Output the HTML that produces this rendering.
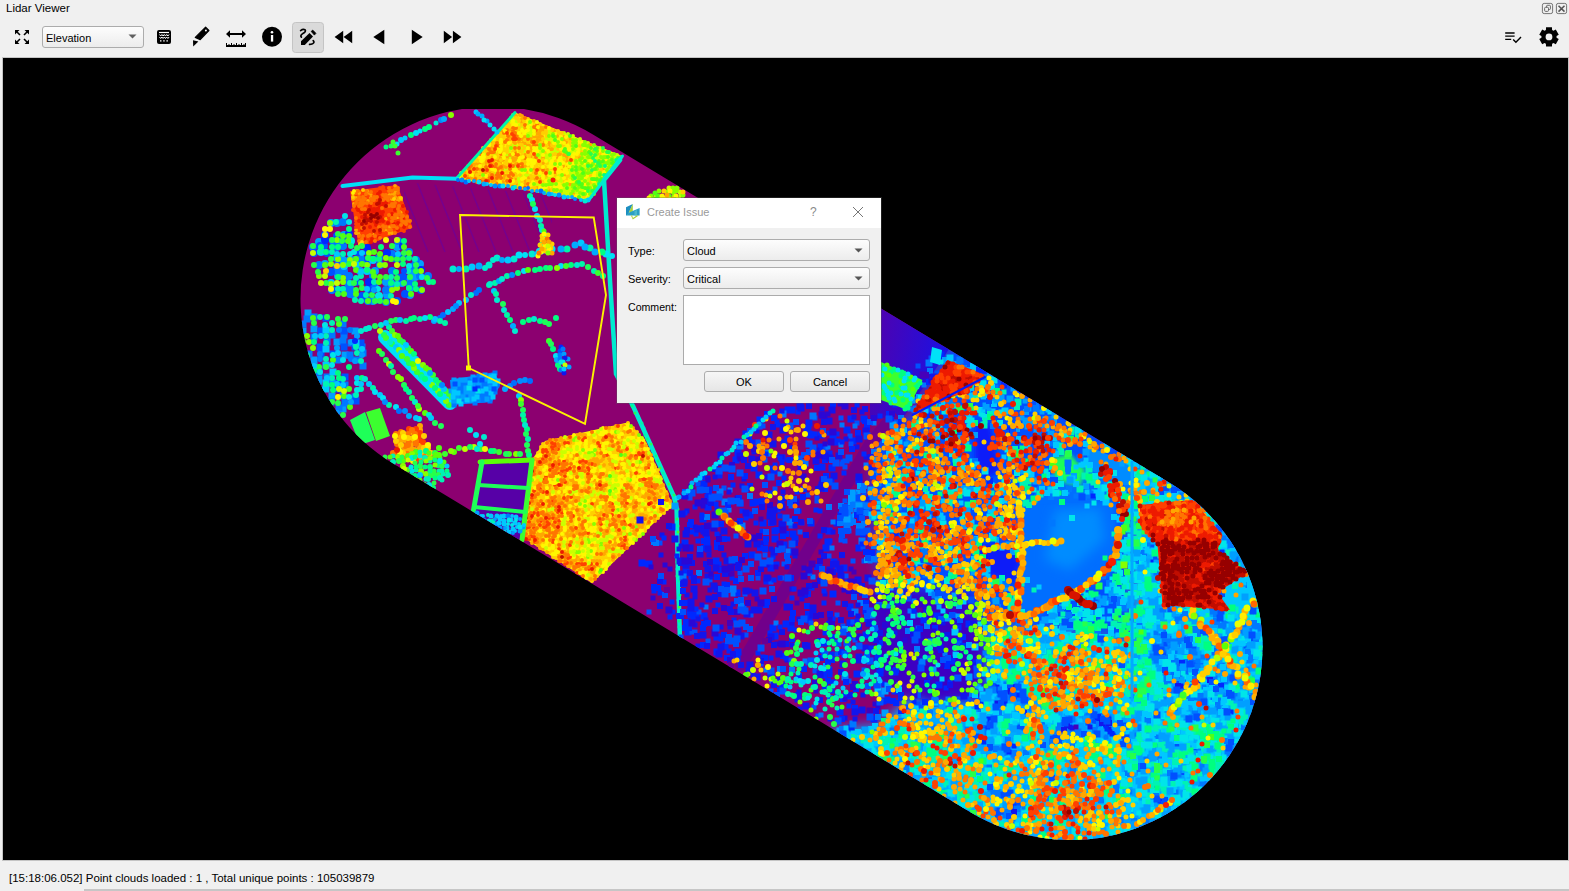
<!DOCTYPE html>
<html><head><meta charset="utf-8">
<style>
html,body{margin:0;padding:0;width:1569px;height:891px;overflow:hidden;background:#f0f0f0;font-family:"Liberation Sans",sans-serif;color:#000;}
.abs{position:absolute;}
.t{position:absolute;white-space:nowrap;line-height:1;}
#canvas{position:absolute;left:3px;top:58px;width:1565px;height:802px;background:#000;overflow:hidden;box-shadow:0 0 0 1px #c4c4c4;}
.combo{position:absolute;box-sizing:border-box;border:1px solid #acacac;border-radius:3px;background:linear-gradient(#fdfdfd,#ececec);}
.btn{position:absolute;box-sizing:border-box;border:1px solid #acacac;border-radius:3px;background:linear-gradient(#f6f6f6,#e6e6e6);}
</style></head><body>
<div class="t" style="left:6px;top:3px;font-size:11.5px;">Lidar Viewer</div>
<svg class="abs" style="left:0;top:0" width="1569" height="57">
 <!-- window buttons -->
 <rect x="1542.4" y="3.4" width="10.2" height="10.2" rx="1.8" fill="none" stroke="#666" stroke-width="0.9"/>
 <rect x="1544.6" y="7.3" width="3.9" height="4.1" rx="1" fill="none" stroke="#5a5a5a" stroke-width="0.9"/>
 <path d="M1546.6 7.2 V6.1 Q1546.6 5.3 1547.4 5.3 H1549.6 Q1550.4 5.3 1550.4 6.1 V8.8 Q1550.4 9.5 1549.6 9.5 H1548.6" fill="none" stroke="#5a5a5a" stroke-width="0.9"/>
 <rect x="1556.4" y="3.4" width="10.2" height="10.2" rx="1.8" fill="none" stroke="#666" stroke-width="0.9"/>
 <path d="M1558.5 5.8l6 5.8M1564.5 5.8l-6 5.8" stroke="#555" stroke-width="1.5"/>
 <!-- fullscreen -->
 <g stroke="#000" stroke-width="1.6" fill="none">
  <path d="M16 31l4 4M28 31l-4 4M16 43l4-4M28 43l-4-4"/>
 </g>
 <path d="M15 30h4.5l-4.5 4.5z M29 30h-4.5l4.5 4.5z M15 44h4.5l-4.5-4.5z M29 44h-4.5l4.5-4.5z" fill="#000"/>
 <!-- grid icon -->
 <rect x="157" y="30" width="14" height="14" rx="2" fill="#000"/>
 <path d="M159 32.5h10" stroke="#fff" stroke-width="1.2"/>
 <path d="M159.5 34.5l1.2 1.5 1.2-1.5 1.2 1.5 1.2-1.5 1.2 1.5 1.2-1.5 1.2 1.5 1.2-1.5" stroke="#fff" stroke-width="1" fill="none"/>
 <path d="M159.5 37l1.2 1.5 1.2-1.5 1.2 1.5 1.2-1.5 1.2 1.5 1.2-1.5 1.2 1.5 1.2-1.5" stroke="#fff" stroke-width="1" fill="none"/>
 <path d="M160 40.8h1.5M163.2 40.8h1.5M166.4 40.8h1.5" stroke="#fff" stroke-width="1.2"/>
 <!-- pencil -->
 <path d="M205.6 27.2 L208.9 30.5 L200.2 39.6 L195.3 37.4 Z" fill="#000" stroke="#000" stroke-width="1.2" stroke-linejoin="round"/>
 <circle cx="205.9" cy="30.4" r="1" fill="#fff"/>
 <path d="M193 40.2 L198.4 41.4 L193.2 46.4 Z" fill="#000"/>
 <!-- measure -->
 <path d="M229 34h14" stroke="#000" stroke-width="2"/>
 <path d="M226 34l4-3.7v7.4z M246 34l-4-3.7v7.4z" fill="#000"/>
 <rect x="226" y="45" width="20" height="2" fill="#000"/>
 <path d="M226.5 43v2M229 44v1M231.5 43v2M234 44v1M236.5 43v2M239 44v1M241.5 43v2M244 44v1M245.5 43v2" stroke="#000" stroke-width="1"/>
 <!-- info -->
 <circle cx="272" cy="36.7" r="10" fill="#000"/>
 <rect x="270.9" y="35" width="2.3" height="6.6" fill="#fff"/>
 <circle cx="272" cy="32.2" r="1.3" fill="#fff"/>
 <!-- active button -->
 <rect x="292.5" y="22.5" width="31" height="30" rx="3" fill="#dadada" stroke="#c4c4c4"/>
 <path d="M301 41.2 L309.5 33 L313 36.5 L304.8 45 L301 45 Z" fill="#000"/>
 <path d="M311.2 31.4 L312.7 30.1 L315.9 33.3 L314.4 35.1 Z" fill="#000" stroke="#000" stroke-width="0.8" stroke-linejoin="round"/>
 <path d="M300.6 30.6 Q303 28.8 305 29.8 Q306.5 31.5 302.8 33.6 Q299.8 35.5 301.4 37.2" fill="none" stroke="#000" stroke-width="1.7" stroke-linecap="round"/>
 <path d="M313.2 40.6 Q315 42.5 312.5 43.8 Q311 44.4 309.6 44.4" fill="none" stroke="#000" stroke-width="1.7" stroke-linecap="round"/>
 <!-- transport -->
 <path d="M334.6 37 L343.2 30.8 V43.2 Z M343.6 37 L352.2 30.8 V43.2 Z" fill="#000"/>
 <path d="M373.3 37 L384.3 29.8 V44.2 Z" fill="#000"/>
 <path d="M422.7 37 L411.8 29.8 V44.2 Z" fill="#000"/>
 <path d="M452.1 37 L443.8 30.8 V43.2 Z M461.4 37 L452.9 30.8 V43.2 Z" fill="#000"/>
 <!-- list check -->
 <path d="M1505.2 33h9.4M1505.2 36.2h9.4M1505.2 39.3h6" stroke="#000" stroke-width="1.3"/>
 <path d="M1513.2 39.5 L1515.9 42.2 L1521 37" fill="none" stroke="#000" stroke-width="1.4"/>
 <!-- gear -->
 <g transform="translate(1549,36.9)">
  <path id="gear" fill="#000" fill-rule="evenodd" d="M-3.10 -6.94 L-2.96 -9.55 L2.96 -9.55 L3.10 -6.94 L4.46 -6.15 L6.80 -7.34 L9.75 -2.22 L7.56 -0.79 L7.56 0.79 L9.75 2.22 L6.80 7.34 L4.46 6.15 L3.10 6.94 L2.96 9.55 L-2.96 9.55 L-3.10 6.94 L-4.46 6.15 L-6.80 7.34 L-9.75 2.22 L-7.56 0.79 L-7.56 -0.79 L-9.75 -2.22 L-6.80 -7.34 L-4.46 -6.15 Z M3.4 0 A3.4 3.4 0 1 0 -3.4 0 A3.4 3.4 0 1 0 3.4 0 Z"/>
 </g>
</svg>
<div class="combo" style="left:42px;top:26px;width:102px;height:22px;"></div>
<div class="t" style="left:46px;top:33px;font-size:11px;">Elevation</div>
<svg class="abs" style="left:128px;top:34px" width="9" height="5"><path d="M0.5 0.5h8l-4 4z" fill="#606060"/></svg>
<div id="canvas"><svg id="lidar" width="1565" height="802" viewBox="3 58 1565 802" style="display:block"><defs><clipPath id="cap"><path d="M592.5 134.2 L1169.5 482.7 A192.5 192.5 0 0 1 970.5 812.3 L393.5 463.8 A192.5 192.5 0 0 1 592.5 134.2 Z"/></clipPath><filter id="b2" x="-20%" y="-20%" width="140%" height="140%"><feGaussianBlur stdDeviation="2"/></filter><filter id="b6" x="-30%" y="-30%" width="160%" height="160%"><feGaussianBlur stdDeviation="6"/></filter><filter id="b15" x="-50%" y="-50%" width="200%" height="200%"><feGaussianBlur stdDeviation="15"/></filter></defs><clipPath id="tp"><rect x="0" y="109" width="2000" height="2000"/></clipPath><g clip-path="url(#tp)"><g clip-path="url(#cap)"><rect x="290" y="100" width="980" height="750" fill="#8c0070"/><clipPath id="stc"><polygon points="404,182 560,196 540,262 430,262 404,230"/></clipPath><path d="M400 182 L428 252 M417 182 L445 252 M434 182 L462 252 M451 182 L479 252 M468 182 L496 252 M485 182 L513 252 M502 182 L530 252 M519 182 L547 252 M536 182 L564 252 M553 182 L581 252" stroke="#5000c0" stroke-width="1.5" opacity="0.38" clip-path="url(#stc)"/><polygon points="515.0,112.5 622.5,156.0 588.8,200.0 456.0,179.0" fill="#ffed00"/><path d="M513 115h0M511 118h0M513 118h0M509 121h0M516 122h0M520 125h0M529 125h0M521 127h0M531 128h0M531 131h0M550 131h0M528 133h0M531 134h0M549 133h0M564 133h0M568 134h0M531 136h0M573 136h0M546 139h0M549 139h0M553 139h0M580 139h0M552 143h0M588 143h0M513 146h0M516 146h0M525 146h0M521 149h0M544 149h0M555 148h0M577 149h0M582 149h0M587 148h0M600 148h0M509 151h0M524 151h0M541 152h0M552 152h0M555 151h0M558 152h0M570 152h0M572 152h0M576 152h0M486 155h0M495 154h0M507 155h0M541 155h0M546 155h0M609 154h0M617 155h0M510 157h0M540 157h0M546 158h0M548 157h0M552 158h0M564 157h0M586 158h0M597 158h0M615 157h0M549 161h0M588 160h0M597 160h0M549 163h0M579 163h0M592 164h0M516 167h0M558 166h0M582 166h0M585 166h0M594 167h0M466 170h0M503 169h0M506 169h0M548 170h0M570 170h0M495 173h0M571 173h0M573 173h0M580 173h0M598 173h0M606 172h0M462 176h0M521 176h0M526 175h0M529 176h0M540 175h0M559 176h0M571 175h0M576 176h0M597 176h0M518 179h0M549 178h0M552 178h0M556 179h0M561 179h0M571 178h0M589 178h0M519 182h0M552 182h0M558 182h0M561 181h0M582 181h0M588 181h0M519 185h0M537 185h0M541 184h0M560 185h0M591 185h0M596 185h0M553 188h0M565 187h0M570 187h0M543 191h0M564 190h0M567 190h0M570 191h0M579 190h0M582 191h0M558 194h0M564 193h0M567 194h0M576 193h0M582 197h0M589 197h0M591 196h0" stroke="#caff00" stroke-width="4" stroke-linecap="round"/><path d="M516 116h0M520 115h0M522 116h0M522 119h0M522 122h0M534 121h0M508 124h0M525 128h0M540 127h0M543 128h0M501 131h0M510 130h0M540 130h0M543 131h0M554 131h0M537 133h0M540 133h0M510 137h0M519 136h0M525 137h0M534 136h0M537 137h0M540 136h0M542 137h0M557 136h0M564 137h0M509 140h0M522 139h0M531 139h0M537 140h0M540 140h0M564 140h0M570 139h0M493 142h0M514 142h0M515 143h0M519 142h0M523 143h0M525 143h0M537 142h0M544 143h0M549 143h0M566 142h0M528 145h0M530 146h0M550 145h0M590 145h0M486 148h0M492 148h0M531 148h0M549 149h0M552 149h0M489 151h0M515 152h0M531 151h0M510 155h0M525 155h0M558 155h0M560 154h0M564 155h0M492 158h0M500 158h0M507 158h0M513 158h0M516 158h0M531 157h0M543 158h0M558 158h0M567 157h0M579 157h0M487 161h0M494 160h0M498 160h0M503 160h0M513 161h0M515 160h0M537 160h0M567 161h0M472 163h0M474 164h0M477 164h0M480 163h0M486 163h0M492 163h0M500 163h0M516 164h0M543 163h0M475 167h0M498 166h0M503 166h0M506 167h0M525 166h0M563 166h0M568 167h0M471 170h0M480 169h0M502 169h0M519 169h0M534 170h0M539 169h0M547 170h0M603 170h0M465 173h0M476 173h0M483 172h0M486 172h0M490 172h0M503 173h0M516 172h0M467 176h0M475 175h0M479 175h0M489 176h0M495 176h0M505 176h0M507 176h0M546 176h0M564 175h0M462 179h0M471 178h0M477 178h0M483 179h0M486 178h0M495 179h0M504 178h0M515 179h0M529 178h0M534 179h0M541 179h0M492 181h0M495 182h0M503 182h0M525 181h0M503 184h0M507 185h0M516 184h0M525 184h0M570 184h0M515 187h0M519 188h0M522 187h0M529 187h0M537 188h0M534 190h0M538 191h0M549 190h0M549 193h0M573 194h0" stroke="#ffa700" stroke-width="4" stroke-linecap="round"/><path d="M516 118h0M518 119h0M528 119h0M519 121h0M524 121h0M509 125h0M522 125h0M533 124h0M540 124h0M505 128h0M506 127h0M509 127h0M519 128h0M516 131h0M519 130h0M546 131h0M552 130h0M558 131h0M498 134h0M501 134h0M511 133h0M523 134h0M543 133h0M546 133h0M559 133h0M562 133h0M495 137h0M498 137h0M501 136h0M504 137h0M547 136h0M491 140h0M498 140h0M504 139h0M525 140h0M534 140h0M543 139h0M567 139h0M494 142h0M507 142h0M528 142h0M541 143h0M570 142h0M493 145h0M503 145h0M508 146h0M510 145h0M520 145h0M522 145h0M546 146h0M552 145h0M554 146h0M563 145h0M570 146h0M580 146h0M483 148h0M504 149h0M507 149h0M513 148h0M524 148h0M558 149h0M482 152h0M486 151h0M499 152h0M504 152h0M507 152h0M513 152h0M520 151h0M522 151h0M545 152h0M561 151h0M582 152h0M492 154h0M497 155h0M522 155h0M528 154h0M530 154h0M552 155h0M555 154h0M578 155h0M600 154h0M476 158h0M486 157h0M489 158h0M497 158h0M529 157h0M534 157h0M570 158h0M576 157h0M474 161h0M478 161h0M501 160h0M507 160h0M522 160h0M525 160h0M543 160h0M555 161h0M564 160h0M573 160h0M483 163h0M499 164h0M505 163h0M507 164h0M512 164h0M525 163h0M537 164h0M540 163h0M547 163h0M477 167h0M482 167h0M529 167h0M534 166h0M537 167h0M541 166h0M545 167h0M490 170h0M552 169h0M561 170h0M601 170h0M461 173h0M468 173h0M473 173h0M480 173h0M493 173h0M507 172h0M514 173h0M528 172h0M533 172h0M543 172h0M477 175h0M516 176h0M520 175h0M531 176h0M535 176h0M536 176h0M555 175h0M568 176h0M590 175h0M465 178h0M479 178h0M507 178h0M513 179h0M532 179h0M545 178h0M566 179h0M499 181h0M516 182h0M522 181h0M528 181h0M530 181h0M537 181h0M544 181h0M556 181h0M565 181h0M591 182h0M495 184h0M501 184h0M510 185h0M514 185h0M532 187h0M535 188h0M548 188h0M539 191h0M552 190h0M555 193h0M561 193h0M573 196h0M584 196h0" stroke="#ffcf00" stroke-width="4" stroke-linecap="round"/><path d="M525 118h0M525 125h0M537 125h0M513 128h0M516 128h0M534 127h0M546 127h0M507 130h0M513 131h0M536 130h0M504 133h0M515 133h0M508 136h0M516 136h0M507 140h0M519 139h0M528 139h0M497 143h0M505 142h0M532 142h0M499 146h0M534 145h0M537 146h0M543 145h0M489 149h0M515 148h0M519 148h0M491 152h0M494 152h0M528 152h0M480 154h0M488 154h0M501 154h0M515 154h0M518 155h0M525 158h0M536 157h0M490 163h0M496 164h0M510 164h0M519 163h0M522 164h0M471 166h0M486 167h0M495 167h0M501 167h0M513 166h0M522 167h0M469 169h0M477 169h0M498 169h0M510 169h0M543 170h0M498 173h0M511 173h0M536 173h0M555 172h0M492 175h0M497 175h0M500 176h0M509 176h0M513 175h0M468 179h0M475 179h0M490 178h0M497 178h0M501 178h0M511 179h0M537 178h0M477 182h0M483 182h0M507 181h0M497 184h0M528 184h0" stroke="#ff7500" stroke-width="4" stroke-linecap="round"/><path d="M513 121h0M528 121h0M537 122h0M514 124h0M516 125h0M531 124h0M528 127h0M538 127h0M549 128h0M505 131h0M522 130h0M526 131h0M528 130h0M534 131h0M519 133h0M524 133h0M534 134h0M555 134h0M521 136h0M561 137h0M566 137h0M494 139h0M501 140h0M558 140h0M489 143h0M501 142h0M509 143h0M546 142h0M554 143h0M560 142h0M564 143h0M578 142h0M582 143h0M489 145h0M501 146h0M568 146h0M497 149h0M501 149h0M528 148h0M534 148h0M537 148h0M545 149h0M561 149h0M568 149h0M570 149h0M578 149h0M584 149h0M500 152h0M534 151h0M537 151h0M548 151h0M578 152h0M599 151h0M483 155h0M504 154h0M513 154h0M543 155h0M574 154h0M577 154h0M603 155h0M606 154h0M481 158h0M484 157h0M495 157h0M504 158h0M520 158h0M523 157h0M554 158h0M560 158h0M573 157h0M481 161h0M482 161h0M510 161h0M519 161h0M528 160h0M531 160h0M535 161h0M546 161h0M552 161h0M559 160h0M561 161h0M582 161h0M590 161h0M607 160h0M528 164h0M532 163h0M534 163h0M551 163h0M558 164h0M563 163h0M568 164h0M573 164h0M584 163h0M480 166h0M532 166h0M543 167h0M550 166h0M551 167h0M555 167h0M561 167h0M569 166h0M492 169h0M495 170h0M514 170h0M516 170h0M528 169h0M559 170h0M565 170h0M566 169h0M609 169h0M518 172h0M522 172h0M524 172h0M530 172h0M540 173h0M552 172h0M558 172h0M561 172h0M563 173h0M567 173h0M594 173h0M604 172h0M472 175h0M486 176h0M543 176h0M549 175h0M552 175h0M587 176h0M594 176h0M459 178h0M522 179h0M524 178h0M543 178h0M558 178h0M564 178h0M585 178h0M468 181h0M500 182h0M513 181h0M533 182h0M546 181h0M566 182h0M570 181h0M572 181h0M593 181h0M522 185h0M531 185h0M559 184h0M585 185h0M540 188h0M543 188h0M546 187h0M555 187h0M558 187h0M561 187h0M586 191h0M552 194h0M588 194h0M570 197h0M576 196h0" stroke="#fff700" stroke-width="4" stroke-linecap="round"/><path d="M530 122h0M553 134h0M528 136h0M549 136h0M555 137h0M562 139h0M573 140h0M576 140h0M558 142h0M573 143h0M576 143h0M585 142h0M540 145h0M558 146h0M560 146h0M573 146h0M583 145h0M585 145h0M588 146h0M594 145h0M511 148h0M540 148h0M573 149h0M543 151h0M585 151h0M590 152h0M594 151h0M603 151h0M538 155h0M550 155h0M582 154h0M585 154h0M588 154h0M597 154h0M612 155h0M614 154h0M582 158h0M588 157h0M591 157h0M601 157h0M604 157h0M606 157h0M612 158h0M576 161h0M580 160h0M609 161h0M555 164h0M560 164h0M570 163h0M576 163h0M582 163h0M588 164h0M593 164h0M604 164h0M606 163h0M609 164h0M573 167h0M580 167h0M602 166h0M609 167h0M613 166h0M522 170h0M525 170h0M531 170h0M579 169h0M584 170h0M588 169h0M597 169h0M607 170h0M550 173h0M577 173h0M585 173h0M588 173h0M591 172h0M600 173h0M608 173h0M483 175h0M562 175h0M578 176h0M581 175h0M584 175h0M573 179h0M579 179h0M582 178h0M603 179h0M549 181h0M585 181h0M598 181h0M534 184h0M543 185h0M546 185h0M549 184h0M552 184h0M556 184h0M564 185h0M567 184h0M573 185h0M576 184h0M588 184h0M594 185h0M573 187h0M579 187h0M590 188h0M597 187h0M546 191h0M554 190h0M557 190h0M561 191h0M573 191h0M577 190h0M545 193h0M571 194h0M580 193h0M585 194h0M590 194h0M594 194h0" stroke="#87ff00" stroke-width="4" stroke-linecap="round"/><path d="M507 133h0M512 134h0M514 136h0M513 139h0M516 139h0M534 142h0M496 146h0M495 149h0M534 154h0M539 161h0M571 160h0M468 166h0M492 166h0M518 166h0M474 169h0M487 170h0M537 170h0M555 169h0M546 173h0M465 176h0M474 181h0M480 181h0M488 181h0M540 182h0M513 187h0M525 188h0" stroke="#ff4000" stroke-width="4" stroke-linecap="round"/><path d="M553 136h0M570 136h0M555 140h0M576 146h0M565 149h0M591 148h0M597 148h0M564 151h0M566 152h0M589 152h0M597 151h0M568 154h0M608 157h0M621 157h0M585 161h0M599 161h0M603 161h0M612 160h0M600 163h0M612 163h0M614 163h0M576 167h0M591 166h0M597 166h0M572 170h0M576 170h0M582 169h0M595 169h0M583 173h0M573 176h0M600 175h0M606 175h0M592 179h0M594 179h0M597 179h0M601 179h0M577 182h0M579 184h0M582 184h0M567 188h0M575 188h0M582 187h0M585 188h0M588 188h0M595 187h0M594 190h0M583 194h0M579 197h0" stroke="#50ff15" stroke-width="4" stroke-linecap="round"/><path d="M595 149h0M603 148h0M607 152h0M609 152h0M569 154h0M591 154h0M595 155h0M593 158h0M618 158h0M617 161h0M598 163h0M588 166h0M600 166h0M592 170h0M575 178h0M579 182h0M600 181h0M588 191h0M592 191h0" stroke="#27ff4a" stroke-width="4" stroke-linecap="round"/><path d="M480 152h0M489 161h0M492 160h0M490 166h0M510 166h0M470 172h0M502 173h0M492 178h0M486 181h0M510 181h0" stroke="#ed1a00" stroke-width="4" stroke-linecap="round"/><path d="M595 161h0M616 160h0M605 166h0M604 175h0M599 184h0" stroke="#00ff80" stroke-width="4" stroke-linecap="round"/><path d="M483 170h0" stroke="#c10d00" stroke-width="4" stroke-linecap="round"/><circle cx="553" cy="180" r="2.5" fill="#f81e00"/><polyline points="456.0,179.0 515.0,112.5" fill="none" stroke="#00f5a7" stroke-width="3" stroke-linejoin="round" stroke-linecap="round"/><polyline points="622.5,156.0 588.8,200.0" fill="none" stroke="#00ebcf" stroke-width="3" stroke-linejoin="round" stroke-linecap="round"/><polygon points="350.0,191.0 397.5,185.0 412.5,227.5 358.8,247.5" fill="#ff4000"/><path d="M395 186h0M357 191h0M367 191h0M396 191h0M359 193h0M367 194h0M371 194h0M389 195h0M392 195h0M395 193h0M356 198h0M371 198h0M395 197h0M399 198h0M353 199h0M368 201h0M392 199h0M398 200h0M401 200h0M354 204h0M401 212h0M386 219h0M397 218h0M390 227h0M356 230h0M386 231h0M356 233h0M359 234h0M373 233h0M389 233h0M392 233h0" stroke="#ffa700" stroke-width="4" stroke-linecap="round"/><path d="M380 188h0M383 187h0M392 188h0M373 191h0M377 191h0M384 191h0M387 192h0M363 193h0M374 193h0M380 194h0M365 197h0M367 196h0M377 200h0M386 200h0M374 204h0M390 203h0M397 203h0M401 203h0M356 207h0M365 206h0M369 207h0M374 206h0M378 205h0M401 207h0M353 210h0M387 209h0M390 210h0M393 210h0M402 209h0M404 209h0M356 212h0M359 211h0M386 213h0M388 212h0M391 212h0M396 212h0M404 211h0M357 215h0M360 215h0M362 215h0M368 215h0M386 215h0M407 216h0M360 218h0M389 218h0M356 221h0M362 221h0M385 222h0M389 221h0M395 221h0M398 221h0M356 224h0M358 224h0M369 224h0M372 223h0M374 224h0M380 224h0M383 223h0M386 224h0M391 224h0M403 224h0M409 224h0M356 227h0M359 227h0M368 228h0M374 227h0M378 227h0M401 228h0M406 227h0M360 229h0M364 230h0M368 230h0M371 230h0M378 230h0M395 230h0M402 230h0M404 231h0M362 233h0M365 233h0M368 232h0M371 233h0M376 234h0M382 233h0M386 233h0M365 236h0M377 237h0M383 235h0M385 236h0M360 239h0M368 239h0M374 240h0M378 239h0M368 242h0M365 244h0" stroke="#ff4000" stroke-width="4" stroke-linecap="round"/><path d="M387 188h0M380 192h0M378 194h0M379 197h0M383 203h0M386 203h0M370 206h0M380 206h0M383 206h0M403 206h0M357 208h0M358 210h0M371 209h0M374 209h0M377 209h0M379 208h0M395 210h0M361 212h0M365 213h0M372 212h0M375 212h0M377 212h0M380 212h0M383 212h0M407 212h0M380 215h0M382 215h0M392 214h0M362 217h0M367 218h0M382 219h0M403 218h0M359 221h0M375 222h0M380 221h0M383 221h0M376 225h0M388 223h0M394 224h0M398 223h0M370 227h0M404 227h0M362 230h0M398 230h0M380 232h0M379 237h0M364 239h0M372 239h0M371 242h0" stroke="#ed1a00" stroke-width="4" stroke-linecap="round"/><path d="M389 188h0M395 189h0M398 188h0M358 191h0M366 191h0M371 192h0M389 191h0M392 191h0M398 190h0M356 193h0M366 194h0M383 195h0M386 195h0M398 193h0M359 197h0M363 197h0M374 197h0M377 197h0M384 196h0M386 198h0M389 197h0M392 197h0M357 200h0M360 200h0M363 199h0M365 199h0M371 199h0M374 200h0M383 200h0M388 200h0M356 203h0M360 203h0M362 202h0M364 203h0M367 203h0M371 203h0M392 204h0M395 203h0M354 206h0M359 206h0M362 205h0M389 206h0M392 206h0M394 206h0M399 206h0M362 209h0M365 209h0M382 208h0M398 209h0M399 212h0M389 215h0M395 215h0M397 215h0M401 215h0M403 216h0M356 218h0M392 218h0M395 218h0M401 218h0M407 217h0M392 221h0M402 221h0M404 222h0M407 221h0M410 221h0M401 225h0M406 224h0M362 228h0M379 227h0M383 226h0M386 227h0M392 226h0M394 226h0M397 228h0M410 227h0M383 230h0M389 230h0M391 230h0M395 233h0M359 236h0M363 236h0M368 236h0M370 235h0M375 236h0M362 239h0M380 238h0M359 241h0M366 242h0M375 241h0" stroke="#ff7500" stroke-width="4" stroke-linecap="round"/><path d="M354 191h0M353 193h0" stroke="#fff700" stroke-width="4" stroke-linecap="round"/><path d="M363 190h0M353 197h0M401 198h0M394 199h0M362 242h0M360 244h0M362 244h0" stroke="#ffcf00" stroke-width="4" stroke-linecap="round"/><path d="M380 200h0M377 204h0M379 203h0M386 206h0M369 210h0M368 212h0M365 215h0M365 218h0M375 217h0M380 217h0M368 220h0M371 221h0M377 222h0M362 224h0M366 223h0M364 228h0M374 231h0M380 230h0" stroke="#c10d00" stroke-width="4" stroke-linecap="round"/><path d="M371 215h0M374 216h0M377 214h0M371 218h0M378 218h0M364 221h0" stroke="#960000" stroke-width="4" stroke-linecap="round"/><polyline points="342.5,186.0 412.5,177.5 457.5,178.8" fill="none" stroke="#00e1f7" stroke-width="4" stroke-linejoin="round" stroke-linecap="round"/><path d="M458 180h0M520 188h0M528 188h0" stroke="#006eff" stroke-width="4" stroke-linecap="round"/><path d="M462 180h0M495 186h0M500 186h0M559 195h0" stroke="#008cff" stroke-width="5" stroke-linecap="round"/><path d="M466 182h0M541 191h0" stroke="#006eff" stroke-width="5" stroke-linecap="round"/><path d="M469 181h0M487 184h0M491 185h0M552 194h0M568 197h0M581 200h0" stroke="#00c8ff" stroke-width="4" stroke-linecap="round"/><path d="M474 181h0M508 186h0M525 189h0M532 191h0M537 191h0M544 193h0M572 197h0" stroke="#00aaff" stroke-width="4" stroke-linecap="round"/><path d="M479 182h0M503 186h0" stroke="#00e1f7" stroke-width="5" stroke-linecap="round"/><path d="M484 184h0M549 194h0" stroke="#00aaff" stroke-width="5" stroke-linecap="round"/><path d="M513 188h0M564 197h0M588 200h0" stroke="#00c8ff" stroke-width="5" stroke-linecap="round"/><path d="M515 187h0" stroke="#00ebcf" stroke-width="4" stroke-linecap="round"/><path d="M555 195h0" stroke="#00e1f7" stroke-width="4" stroke-linecap="round"/><path d="M575 199h0" stroke="#008cff" stroke-width="4" stroke-linecap="round"/><path d="M585 201h0" stroke="#00ebcf" stroke-width="5" stroke-linecap="round"/><polyline points="620.0,160.0 604.0,180.0 610.0,281.0 616.0,374.0 633.0,406.0 673.7,496.0 676.6,508.0 678.0,575.0 679.6,627.0 680.0,640.0" fill="none" stroke="#00ebcf" stroke-width="4.5" stroke-linejoin="round" stroke-linecap="round"/><path d="M632 406h0M647 439h0M656 456h0M658 461h0M678 509h0M678 546h0M678 550h0M676 557h0M677 562h0M680 595h0M679 621h0" stroke="#00ff80" stroke-width="3" stroke-linecap="round"/><path d="M635 413h0M651 444h0M669 484h0M674 495h0M677 519h0M678 615h0" stroke="#1eff58" stroke-width="3" stroke-linecap="round"/><path d="M638 416h0M644 428h0M654 452h0M666 479h0M677 514h0M677 538h0M677 569h0M679 588h0M678 600h0" stroke="#00ebcf" stroke-width="3" stroke-linecap="round"/><path d="M642 423h0M645 435h0M663 473h0M671 490h0M678 526h0M677 576h0M679 581h0M679 627h0" stroke="#00f5a7" stroke-width="3" stroke-linecap="round"/><path d="M660 468h0M676 503h0M678 532h0M679 607h0" stroke="#3cff2f" stroke-width="3" stroke-linecap="round"/><path d="M476 112h0M497 132h0" stroke="#00c8ff" stroke-width="5" stroke-linecap="round"/><path d="M478 114h0M482 116h0M487 121h0" stroke="#00aaff" stroke-width="5" stroke-linecap="round"/><path d="M484 120h0M490 125h0M494 129h0" stroke="#00e1f7" stroke-width="5" stroke-linecap="round"/><path d="M331 223h0M344 235h0M319 242h0M338 241h0M397 247h0M337 258h0M343 260h0M350 260h0M355 260h0M325 264h0M367 264h0M420 264h0M360 271h0M375 271h0M410 271h0M415 270h0M338 276h0M410 278h0M415 277h0M386 282h0M391 283h0M402 283h0M375 288h0M392 288h0M410 288h0M387 295h0M410 295h0M373 301h0" stroke="#009fff" stroke-width="8" stroke-linecap="round"/><path d="M337 223h0M343 222h0M333 241h0M398 241h0M313 247h0M337 247h0M343 246h0M392 254h0M409 252h0M361 259h0M379 258h0M392 258h0M416 260h0M319 265h0M337 266h0M380 265h0M414 266h0M337 271h0M344 271h0M392 271h0M349 276h0M373 276h0M420 276h0M428 276h0M348 283h0M374 284h0M410 284h0M332 290h0M344 290h0M350 288h0M386 290h0M350 294h0M354 295h0M368 301h0M386 302h0" stroke="#0078ff" stroke-width="8" stroke-linecap="round"/><path d="M325 235h0M337 236h0M344 240h0M320 246h0M324 246h0M314 253h0M327 253h0M357 252h0M368 252h0M368 259h0M397 259h0M403 258h0M331 272h0M398 278h0M403 277h0M356 282h0M338 290h0M368 289h0M421 290h0M362 296h0M405 294h0M397 301h0" stroke="#0050ff" stroke-width="8" stroke-linecap="round"/><path d="M349 234h0M325 240h0M367 248h0M403 246h0M387 253h0M421 270h0M369 282h0M379 300h0" stroke="#0028ff" stroke-width="8" stroke-linecap="round"/><path d="M351 241h0M379 296h0" stroke="#00e5e9" stroke-width="8" stroke-linecap="round"/><path d="M321 252h0M373 260h0M344 266h0M356 265h0M367 271h0M331 283h0" stroke="#00c8ff" stroke-width="8" stroke-linecap="round"/><path d="M345 216h0M349 222h0M350 254h0M354 252h0M409 266h0M422 277h0M378 289h0" stroke="#00e5e9" stroke-width="6" stroke-linecap="round"/><path d="M330 223h0M337 240h0M369 253h0M338 259h0M350 260h0M386 258h0M331 264h0M343 265h0M367 265h0M380 265h0M385 265h0M421 271h0M319 276h0M343 278h0M331 284h0M343 282h0M392 290h0M397 288h0M422 290h0" stroke="#87ff00" stroke-width="6" stroke-linecap="round"/><path d="M336 222h0M320 252h0M332 252h0M343 254h0M415 259h0M408 271h0M356 278h0M361 276h0M391 277h0M350 283h0M374 282h0M397 284h0M429 282h0M338 289h0M343 289h0M366 295h0M391 296h0M355 300h0M361 301h0" stroke="#00f2b4" stroke-width="6" stroke-linecap="round"/><path d="M325 229h0M330 229h0M325 235h0M386 240h0M331 289h0M393 301h0M396 302h0" stroke="#fff700" stroke-width="6" stroke-linecap="round"/><path d="M349 229h0M404 241h0M321 247h0M332 247h0M338 247h0M351 246h0M381 247h0M326 252h0M373 259h0M379 259h0M409 258h0M403 264h0M367 270h0M396 272h0M338 277h0M361 283h0M391 283h0M415 284h0M433 282h0M409 288h0M416 289h0" stroke="#00ff80" stroke-width="6" stroke-linecap="round"/><path d="M338 234h0M332 240h0M342 241h0M313 246h0M357 248h0M362 246h0M392 246h0M404 253h0M331 259h0M368 258h0M397 259h0M403 259h0M314 265h0M349 264h0M416 265h0M318 272h0M416 271h0M386 277h0M397 278h0M410 277h0M427 278h0M326 283h0M354 283h0M404 283h0M356 290h0M362 288h0M338 294h0M372 295h0M375 301h0M380 301h0" stroke="#27ff4a" stroke-width="6" stroke-linecap="round"/><path d="M343 236h0M349 236h0M348 241h0M404 247h0M374 252h0M380 254h0M409 253h0M356 259h0M391 259h0M325 265h0M362 264h0M356 270h0M373 272h0M374 276h0M380 277h0M379 282h0M344 294h0M356 294h0M411 294h0M368 301h0M386 302h0" stroke="#50ff15" stroke-width="6" stroke-linecap="round"/><path d="M397 240h0M313 253h0M354 264h0M397 265h0M325 276h0M321 283h0M337 283h0" stroke="#caff00" stroke-width="6" stroke-linecap="round"/><path d="M337 254h0M362 253h0M398 254h0M361 272h0M367 289h0" stroke="#00c8ff" stroke-width="6" stroke-linecap="round"/><path d="M337 266h0M326 271h0" stroke="#ffcf00" stroke-width="6" stroke-linecap="round"/><path d="M404 271h0" stroke="#0050ff" stroke-width="6" stroke-linecap="round"/><path d="M374 290h0" stroke="#009fff" stroke-width="6" stroke-linecap="round"/><path d="M386 147h0" stroke="#00ff80" stroke-width="5" stroke-linecap="round"/><path d="M391 146h0" stroke="#1eff58" stroke-width="5" stroke-linecap="round"/><path d="M397 144h0M420 131h0" stroke="#00e1f7" stroke-width="5" stroke-linecap="round"/><path d="M401 140h0" stroke="#00c8ff" stroke-width="6" stroke-linecap="round"/><path d="M405 138h0" stroke="#00c8ff" stroke-width="5" stroke-linecap="round"/><path d="M411 135h0M425 129h0M429 127h0" stroke="#00ff80" stroke-width="6" stroke-linecap="round"/><path d="M416 133h0" stroke="#00e1f7" stroke-width="6" stroke-linecap="round"/><path d="M436 123h0" stroke="#00ebcf" stroke-width="5" stroke-linecap="round"/><path d="M441 120h0" stroke="#008cff" stroke-width="6" stroke-linecap="round"/><path d="M444 119h0" stroke="#00aaff" stroke-width="6" stroke-linecap="round"/><path d="M451 115h0" stroke="#87ff00" stroke-width="6" stroke-linecap="round"/><path d="M393 142h0M395 146h0M398 153h0" stroke="#3cff2f" stroke-width="5" stroke-linecap="round"/><path d="M453 269h0M489 265h0M497 258h0M514 259h0M532 254h0" stroke="#00ebcf" stroke-width="7" stroke-linecap="round"/><path d="M459 269h0M502 260h0" stroke="#00aaff" stroke-width="6" stroke-linecap="round"/><path d="M466 269h0M567 249h0M590 248h0" stroke="#00f5a7" stroke-width="7" stroke-linecap="round"/><path d="M472 267h0M508 260h0M581 243h0" stroke="#00c8ff" stroke-width="7" stroke-linecap="round"/><path d="M479 266h0M561 249h0M575 245h0M585 247h0M595 252h0" stroke="#00aaff" stroke-width="7" stroke-linecap="round"/><path d="M485 268h0M493 260h0" stroke="#00ebcf" stroke-width="6" stroke-linecap="round"/><path d="M519 255h0M541 251h0M552 249h0M606 254h0" stroke="#00e1f7" stroke-width="7" stroke-linecap="round"/><path d="M525 255h0M612 256h0" stroke="#00e1f7" stroke-width="6" stroke-linecap="round"/><path d="M537 254h0M547 251h0" stroke="#00c8ff" stroke-width="6" stroke-linecap="round"/><path d="M602 252h0" stroke="#00ff80" stroke-width="7" stroke-linecap="round"/><path d="M489 285h0M495 283h0M507 276h0M582 264h0M594 271h0" stroke="#00f5a7" stroke-width="6" stroke-linecap="round"/><path d="M499 281h0" stroke="#00aaff" stroke-width="6" stroke-linecap="round"/><path d="M502 279h0M577 265h0" stroke="#00ebcf" stroke-width="6" stroke-linecap="round"/><path d="M512 275h0" stroke="#008cff" stroke-width="6" stroke-linecap="round"/><path d="M518 273h0M535 270h0M540 269h0M546 268h0M571 265h0M603 276h0" stroke="#00ff80" stroke-width="6" stroke-linecap="round"/><path d="M524 271h0M561 266h0" stroke="#00e1f7" stroke-width="6" stroke-linecap="round"/><path d="M528 270h0" stroke="#5aff07" stroke-width="6" stroke-linecap="round"/><path d="M550 268h0M588 267h0" stroke="#1eff58" stroke-width="6" stroke-linecap="round"/><path d="M557 268h0" stroke="#87ff00" stroke-width="6" stroke-linecap="round"/><path d="M566 266h0M598 273h0" stroke="#3cff2f" stroke-width="6" stroke-linecap="round"/><path d="M490 284h0M497 300h0M504 310h0M515 331h0" stroke="#00ebcf" stroke-width="6" stroke-linecap="round"/><path d="M494 291h0" stroke="#00c8ff" stroke-width="6" stroke-linecap="round"/><path d="M496 294h0M507 315h0" stroke="#00f5a7" stroke-width="6" stroke-linecap="round"/><path d="M503 304h0" stroke="#1eff58" stroke-width="6" stroke-linecap="round"/><path d="M510 320h0" stroke="#00ff80" stroke-width="6" stroke-linecap="round"/><path d="M513 326h0" stroke="#00aaff" stroke-width="6" stroke-linecap="round"/><path d="M434 321h0M453 309h0" stroke="#00aaff" stroke-width="6" stroke-linecap="round"/><path d="M440 318h0M443 315h0M476 293h0M479 290h0" stroke="#006eff" stroke-width="6" stroke-linecap="round"/><path d="M448 312h0M459 303h0M466 300h0" stroke="#00c8ff" stroke-width="6" stroke-linecap="round"/><path d="M456 306h0" stroke="#008cff" stroke-width="6" stroke-linecap="round"/><path d="M471 295h0" stroke="#00ebcf" stroke-width="6" stroke-linecap="round"/><path d="M530 196h0M541 226h0M541 245h0" stroke="#00f5a7" stroke-width="6" stroke-linecap="round"/><path d="M532 200h0M535 209h0M537 216h0M539 251h0" stroke="#00e1f7" stroke-width="6" stroke-linecap="round"/><path d="M533 204h0" stroke="#1eff58" stroke-width="6" stroke-linecap="round"/><path d="M540 220h0M542 230h0M545 235h0" stroke="#00ebcf" stroke-width="6" stroke-linecap="round"/><path d="M543 239h0" stroke="#008cff" stroke-width="6" stroke-linecap="round"/><path d="M544 231h0" stroke="#50ff15" stroke-width="5" stroke-linecap="round"/><path d="M542 236h0M548 235h0M542 240h0M540 245h0M552 244h0M544 248h0M551 248h0M545 251h0" stroke="#ffcf00" stroke-width="5" stroke-linecap="round"/><path d="M544 234h0M546 239h0M545 245h0M549 249h0M541 252h0M538 256h0" stroke="#fff700" stroke-width="5" stroke-linecap="round"/><path d="M547 239h0M539 253h0" stroke="#ff7500" stroke-width="5" stroke-linecap="round"/><path d="M544 242h0M549 242h0M542 249h0M552 253h0" stroke="#ffa700" stroke-width="5" stroke-linecap="round"/><path d="M548 246h0" stroke="#caff00" stroke-width="5" stroke-linecap="round"/><path d="M548 253h0" stroke="#87ff00" stroke-width="5" stroke-linecap="round"/><path d="M523 322h0M529 320h0M540 321h0M556 318h0" stroke="#00ff80" stroke-width="6" stroke-linecap="round"/><path d="M534 319h0" stroke="#00ebcf" stroke-width="6" stroke-linecap="round"/><path d="M545 322h0M549 324h0" stroke="#1eff58" stroke-width="6" stroke-linecap="round"/><path d="M549 341h0" stroke="#3cff2f" stroke-width="6" stroke-linecap="round"/><path d="M551 344h0" stroke="#1eff58" stroke-width="6" stroke-linecap="round"/><path d="M553 349h0M558 365h0M560 369h0" stroke="#00ff80" stroke-width="6" stroke-linecap="round"/><path d="M556 356h0" stroke="#00e1f7" stroke-width="6" stroke-linecap="round"/><path d="M557 360h0" stroke="#00aaff" stroke-width="6" stroke-linecap="round"/><path d="M561 347h0" stroke="#0028ff" stroke-width="5" stroke-linecap="round"/><path d="M560 351h0" stroke="#0050ff" stroke-width="5" stroke-linecap="round"/><path d="M563 349h0M560 355h0M560 359h0M561 370h0" stroke="#0078ff" stroke-width="5" stroke-linecap="round"/><path d="M564 354h0M568 359h0M569 367h0" stroke="#009fff" stroke-width="5" stroke-linecap="round"/><path d="M565 358h0M564 373h0" stroke="#1215ec" stroke-width="5" stroke-linecap="round"/><path d="M561 362h0M563 362h0" stroke="#00e5e9" stroke-width="5" stroke-linecap="round"/><path d="M565 365h0" stroke="#caff00" stroke-width="5" stroke-linecap="round"/><path d="M564 369h0" stroke="#00c8ff" stroke-width="5" stroke-linecap="round"/><path d="M669 188h0M680 192h0M656 196h0M681 195h0M679 199h0M649 202h0" stroke="#caff00" stroke-width="5" stroke-linecap="round"/><path d="M673 188h0M677 188h0M659 191h0M667 192h0M673 192h0M676 191h0M651 196h0M674 196h0M683 195h0M653 199h0M683 200h0M652 202h0M654 202h0" stroke="#87ff00" stroke-width="5" stroke-linecap="round"/><path d="M655 193h0M658 196h0M669 196h0M656 199h0" stroke="#50ff15" stroke-width="5" stroke-linecap="round"/><path d="M664 191h0M683 192h0M673 199h0M659 201h0" stroke="#ffcf00" stroke-width="5" stroke-linecap="round"/><path d="M670 191h0M662 196h0M676 196h0M649 198h0M660 200h0M662 200h0M665 198h0M669 199h0" stroke="#fff700" stroke-width="5" stroke-linecap="round"/><path d="M667 195h0" stroke="#ffa700" stroke-width="5" stroke-linecap="round"/><path d="M675 200h0" stroke="#27ff4a" stroke-width="5" stroke-linecap="round"/><path d="M308 313h0M303 331h0M314 329h0M355 331h0M337 342h0M345 355h0M314 360h0M319 379h0M333 383h0M321 390h0M332 396h0M327 409h0M343 409h0M327 415h0" stroke="#009fff" stroke-width="7" stroke-linecap="square"/><path d="M307 319h0M314 317h0M303 324h0M343 324h0M314 337h0M332 335h0M344 335h0M327 342h0M343 341h0M351 343h0M362 347h0M309 354h0M350 355h0M363 353h0M338 360h0M357 360h0M308 367h0M363 366h0M319 372h0M327 377h0M345 385h0M343 396h0M355 397h0M331 402h0M345 403h0M339 408h0M337 420h0" stroke="#0078ff" stroke-width="7" stroke-linecap="square"/><path d="M326 318h0M321 331h0M344 331h0M361 343h0M320 347h0M344 347h0M355 347h0M321 354h0M333 354h0M345 377h0M339 383h0M313 390h0M338 389h0M356 401h0M333 414h0" stroke="#0050ff" stroke-width="7" stroke-linecap="square"/><path d="M326 330h0M356 343h0M326 349h0M314 367h0M326 365h0M333 372h0M326 383h0M326 389h0" stroke="#00c8ff" stroke-width="7" stroke-linecap="square"/><path d="M313 318h0M339 324h0M303 341h0M307 359h0M333 360h0M349 389h0M344 396h0M331 409h0M350 407h0" stroke="#50ff15" stroke-width="6" stroke-linecap="round"/><path d="M320 317h0M332 323h0M332 330h0M326 336h0M326 343h0M356 347h0M357 353h0M326 359h0M361 361h0M314 379h0M332 378h0M343 379h0M326 384h0M361 389h0M356 395h0M320 409h0" stroke="#00f2b4" stroke-width="6" stroke-linecap="round"/><path d="M327 317h0M338 319h0M345 319h0M314 323h0M319 367h0M326 367h0M332 402h0M338 403h0M325 407h0M343 415h0" stroke="#27ff4a" stroke-width="6" stroke-linecap="round"/><path d="M325 325h0M333 355h0M343 360h0M332 365h0M320 372h0M357 383h0M321 390h0M357 390h0M349 397h0" stroke="#00e5e9" stroke-width="6" stroke-linecap="round"/><path d="M339 330h0M350 330h0M320 354h0M320 359h0M351 359h0" stroke="#0078ff" stroke-width="6" stroke-linecap="round"/><path d="M357 331h0M357 336h0M351 342h0M337 348h0M362 355h0M314 360h0M355 361h0M319 383h0M351 402h0M337 413h0" stroke="#009fff" stroke-width="6" stroke-linecap="round"/><path d="M307 336h0M309 342h0M313 348h0" stroke="#87ff00" stroke-width="6" stroke-linecap="round"/><path d="M315 336h0M321 336h0M362 349h0M338 353h0M314 366h0M308 372h0M327 378h0M357 378h0M314 385h0M337 384h0M343 385h0M361 384h0M313 390h0" stroke="#00c8ff" stroke-width="6" stroke-linecap="round"/><path d="M314 342h0M307 355h0M349 367h0M314 371h0M338 373h0M339 378h0M362 378h0M332 385h0M333 390h0" stroke="#00ff80" stroke-width="6" stroke-linecap="round"/><path d="M355 341h0" stroke="#0028ff" stroke-width="6" stroke-linecap="round"/><path d="M339 389h0M344 391h0" stroke="#caff00" stroke-width="6" stroke-linecap="round"/><path d="M338 397h0" stroke="#fff700" stroke-width="6" stroke-linecap="round"/><polyline points="385.0,337.0 450.0,403.0" fill="none" stroke="#00e1f7" stroke-width="14" stroke-linejoin="round" stroke-linecap="round"/><path d="M380 331h0" stroke="#b9ff00" stroke-width="6" stroke-linecap="round"/><path d="M384 335h0M392 344h0M409 363h0M421 375h0" stroke="#1eff58" stroke-width="6" stroke-linecap="round"/><path d="M386 338h0M407 359h0M417 372h0M449 405h0" stroke="#3cff2f" stroke-width="6" stroke-linecap="round"/><path d="M390 342h0" stroke="#00ebcf" stroke-width="6" stroke-linecap="round"/><path d="M396 347h0" stroke="#00c8ff" stroke-width="6" stroke-linecap="round"/><path d="M399 350h0M414 368h0M432 385h0M438 391h0M446 401h0" stroke="#87ff00" stroke-width="6" stroke-linecap="round"/><path d="M401 353h0M428 382h0M444 397h0" stroke="#00e1f7" stroke-width="6" stroke-linecap="round"/><path d="M402 356h0M413 364h0" stroke="#5aff07" stroke-width="6" stroke-linecap="round"/><path d="M422 377h0" stroke="#00f5a7" stroke-width="6" stroke-linecap="round"/><path d="M425 379h0M435 388h0M440 394h0" stroke="#00ff80" stroke-width="6" stroke-linecap="round"/><path d="M389 327h0" stroke="#00f5a7" stroke-width="6" stroke-linecap="round"/><path d="M392 331h0M400 340h0M433 375h0M446 391h0M449 394h0M452 397h0" stroke="#3cff2f" stroke-width="6" stroke-linecap="round"/><path d="M395 335h0M423 365h0" stroke="#87ff00" stroke-width="6" stroke-linecap="round"/><path d="M398 336h0M411 351h0M426 368h0M429 370h0" stroke="#5aff07" stroke-width="6" stroke-linecap="round"/><path d="M403 342h0M408 348h0M439 383h0" stroke="#1eff58" stroke-width="6" stroke-linecap="round"/><path d="M406 345h0M444 389h0" stroke="#00c8ff" stroke-width="6" stroke-linecap="round"/><path d="M414 354h0M436 380h0" stroke="#00ff80" stroke-width="6" stroke-linecap="round"/><path d="M416 359h0M456 400h0" stroke="#00e1f7" stroke-width="6" stroke-linecap="round"/><path d="M418 361h0" stroke="#ebff00" stroke-width="6" stroke-linecap="round"/><path d="M430 373h0" stroke="#00aaff" stroke-width="6" stroke-linecap="round"/><path d="M442 385h0" stroke="#008cff" stroke-width="6" stroke-linecap="round"/><polygon points="450.0,380.0 495.0,372.0 500.0,385.0 492.0,402.0 452.0,405.0" fill="#008cff"/><path d="M495 373h0M479 376h0M469 381h0M479 379h0M463 385h0M466 385h0M482 385h0M485 384h0M491 385h0M497 385h0M459 389h0M462 388h0M482 388h0M462 391h0M487 393h0M495 392h0M466 395h0M482 395h0M487 396h0M490 396h0M463 401h0M477 399h0M483 400h0M490 401h0M454 405h0M475 403h0" stroke="#0078ff" stroke-width="5" stroke-linecap="square"/><path d="M473 377h0M482 377h0M485 375h0M454 380h0M457 381h0M461 380h0M465 380h0M485 379h0M495 381h0M458 384h0M473 385h0M479 385h0M455 387h0M466 388h0M491 387h0M451 391h0M466 392h0M471 391h0M474 393h0M457 396h0M463 397h0M471 396h0M475 395h0M454 401h0M471 400h0M487 399h0" stroke="#009fff" stroke-width="5" stroke-linecap="square"/><path d="M491 377h0M494 376h0M490 381h0M498 381h0M470 383h0M495 384h0M486 389h0M454 392h0M458 393h0M482 391h0M491 393h0M453 397h0M477 397h0M493 397h0M467 400h0M474 399h0M461 404h0" stroke="#00c8ff" stroke-width="5" stroke-linecap="square"/><path d="M475 380h0M482 380h0M455 384h0M478 388h0M494 389h0" stroke="#0050ff" stroke-width="5" stroke-linecap="square"/><path d="M469 388h0M478 391h0M459 401h0" stroke="#00e5e9" stroke-width="5" stroke-linecap="square"/><path d="M475 389h0" stroke="#0028ff" stroke-width="5" stroke-linecap="square"/><polygon points="350.0,420.0 365.0,412.0 375.0,440.0 360.0,445.0" fill="#1eff58"/><polygon points="366.0,412.0 380.0,408.0 390.0,436.0 376.0,441.0" fill="#3cff2f"/><path d="M361 331h0M366 329h0M369 328h0M381 325h0" stroke="#00ebcf" stroke-width="6" stroke-linecap="round"/><path d="M375 326h0M391 321h0M396 320h0" stroke="#1eff58" stroke-width="6" stroke-linecap="round"/><path d="M386 323h0M400 320h0M435 319h0" stroke="#00c8ff" stroke-width="6" stroke-linecap="round"/><path d="M406 321h0M420 319h0M440 321h0M445 323h0" stroke="#00f5a7" stroke-width="6" stroke-linecap="round"/><path d="M411 319h0M414 318h0M430 317h0" stroke="#00ff80" stroke-width="6" stroke-linecap="round"/><path d="M425 318h0" stroke="#00e1f7" stroke-width="6" stroke-linecap="round"/><path d="M379 351h0M425 413h0" stroke="#5aff07" stroke-width="6" stroke-linecap="round"/><path d="M382 354h0M386 360h0M393 372h0M404 385h0M412 398h0M435 423h0M441 426h0" stroke="#1eff58" stroke-width="6" stroke-linecap="round"/><path d="M389 364h0M419 409h0" stroke="#b9ff00" stroke-width="6" stroke-linecap="round"/><path d="M391 366h0M409 392h0" stroke="#00f5a7" stroke-width="6" stroke-linecap="round"/><path d="M398 377h0M401 379h0" stroke="#87ff00" stroke-width="6" stroke-linecap="round"/><path d="M406 389h0" stroke="#00ff80" stroke-width="6" stroke-linecap="round"/><path d="M415 402h0M429 415h0" stroke="#00ebcf" stroke-width="6" stroke-linecap="round"/><path d="M418 406h0" stroke="#3cff2f" stroke-width="6" stroke-linecap="round"/><path d="M431 418h0" stroke="#00c8ff" stroke-width="6" stroke-linecap="round"/><path d="M365 379h0M419 419h0" stroke="#00ebcf" stroke-width="6" stroke-linecap="round"/><path d="M369 384h0M380 395h0M416 418h0" stroke="#00c8ff" stroke-width="6" stroke-linecap="round"/><path d="M373 388h0M389 405h0" stroke="#00f5a7" stroke-width="6" stroke-linecap="round"/><path d="M375 392h0M383 398h0M396 407h0" stroke="#00e1f7" stroke-width="6" stroke-linecap="round"/><path d="M385 402h0M405 411h0" stroke="#008cff" stroke-width="6" stroke-linecap="round"/><path d="M399 411h0" stroke="#006eff" stroke-width="6" stroke-linecap="round"/><path d="M409 416h0" stroke="#00aaff" stroke-width="6" stroke-linecap="round"/><path d="M420 426h0M420 430h0M412 432h0M400 436h0M401 440h0M405 440h0M412 440h0M411 445h0M419 444h0M423 445h0M405 449h0M409 449h0M411 449h0M415 450h0M420 448h0M428 453h0M408 457h0M411 456h0M417 457h0M420 457h0M425 458h0" stroke="#ffa700" stroke-width="6" stroke-linecap="round"/><path d="M409 429h0M416 429h0M420 433h0M419 436h0M419 440h0M423 442h0M395 453h0M413 454h0M416 460h0" stroke="#ff4000" stroke-width="6" stroke-linecap="round"/><path d="M412 430h0M396 434h0M401 432h0M408 434h0M415 434h0M409 441h0M416 441h0M397 444h0M405 446h0M408 445h0M416 444h0M393 453h0M407 454h0M416 452h0M423 454h0M399 457h0M405 456h0" stroke="#ff7500" stroke-width="6" stroke-linecap="round"/><path d="M403 433h0M408 438h0M413 438h0M424 436h0M396 441h0M401 445h0M424 448h0M428 448h0M403 453h0M421 452h0M431 453h0" stroke="#ffcf00" stroke-width="6" stroke-linecap="round"/><path d="M395 436h0M404 437h0M415 437h0M428 445h0M399 450h0M400 452h0M413 461h0" stroke="#fff700" stroke-width="6" stroke-linecap="round"/><path d="M397 450h0" stroke="#ed1a00" stroke-width="6" stroke-linecap="round"/><path d="M439 448h0M416 452h0M408 456h0M403 461h0M407 470h0M398 480h0" stroke="#50ff15" stroke-width="6" stroke-linecap="round"/><path d="M412 454h0M398 457h0M385 462h0M403 466h0M421 471h0M426 474h0M415 479h0M412 483h0" stroke="#87ff00" stroke-width="6" stroke-linecap="round"/><path d="M420 452h0M393 456h0M430 461h0M389 470h0M416 470h0M439 471h0M442 471h0M443 474h0M442 480h0" stroke="#00f2b4" stroke-width="5" stroke-linecap="round"/><path d="M426 451h0M430 467h0M438 465h0M411 476h0M415 476h0M433 488h0" stroke="#00ff80" stroke-width="6" stroke-linecap="round"/><path d="M429 453h0M390 457h0M434 458h0M444 462h0M402 475h0M406 476h0M411 479h0M420 480h0M420 483h0" stroke="#50ff15" stroke-width="5" stroke-linecap="round"/><path d="M435 453h0M399 461h0M420 466h0M442 466h0M397 470h0M390 474h0M431 475h0M433 475h0M438 475h0M420 488h0M430 488h0" stroke="#27ff4a" stroke-width="6" stroke-linecap="round"/><path d="M385 457h0M402 457h0M440 458h0M415 463h0M434 471h0M424 484h0M434 483h0" stroke="#27ff4a" stroke-width="5" stroke-linecap="round"/><path d="M412 458h0M440 461h0M403 480h0M429 485h0" stroke="#00e5e9" stroke-width="6" stroke-linecap="round"/><path d="M415 457h0M421 462h0M435 460h0M394 467h0M416 467h0M425 467h0M430 471h0M447 471h0M407 479h0M435 478h0M416 483h0" stroke="#00ff80" stroke-width="5" stroke-linecap="round"/><path d="M420 456h0M411 467h0M412 471h0M426 479h0" stroke="#00e5e9" stroke-width="5" stroke-linecap="round"/><path d="M425 458h0M393 462h0M384 467h0M393 471h0M448 475h0M428 479h0M440 478h0" stroke="#00f2b4" stroke-width="6" stroke-linecap="round"/><path d="M430 458h0M426 461h0M435 465h0M394 480h0" stroke="#87ff00" stroke-width="5" stroke-linecap="round"/><path d="M408 460h0M424 489h0" stroke="#caff00" stroke-width="5" stroke-linecap="round"/><path d="M447 466h0" stroke="#00c8ff" stroke-width="5" stroke-linecap="round"/><path d="M404 469h0M397 475h0" stroke="#caff00" stroke-width="6" stroke-linecap="round"/><path d="M420 475h0" stroke="#00c8ff" stroke-width="6" stroke-linecap="round"/><path d="M519 396h0" stroke="#00c8ff" stroke-width="6" stroke-linecap="round"/><path d="M521 400h0" stroke="#87ff00" stroke-width="6" stroke-linecap="round"/><path d="M521 404h0M529 460h0" stroke="#3cff2f" stroke-width="6" stroke-linecap="round"/><path d="M523 410h0M526 434h0M527 445h0M528 451h0" stroke="#1eff58" stroke-width="6" stroke-linecap="round"/><path d="M523 415h0M528 439h0" stroke="#00f5a7" stroke-width="6" stroke-linecap="round"/><path d="M524 420h0M527 429h0M529 455h0" stroke="#00ff80" stroke-width="6" stroke-linecap="round"/><path d="M525 425h0" stroke="#00ebcf" stroke-width="6" stroke-linecap="round"/><path d="M436 455h0M439 455h0M454 452h0" stroke="#5aff07" stroke-width="6" stroke-linecap="round"/><path d="M445 454h0M459 448h0M481 449h0M499 452h0M509 454h0" stroke="#3cff2f" stroke-width="6" stroke-linecap="round"/><path d="M451 451h0M516 454h0" stroke="#87ff00" stroke-width="6" stroke-linecap="round"/><path d="M465 449h0M474 447h0" stroke="#b9ff00" stroke-width="6" stroke-linecap="round"/><path d="M470 447h0M494 451h0M506 454h0M520 454h0" stroke="#1eff58" stroke-width="6" stroke-linecap="round"/><path d="M485 449h0" stroke="#ffed00" stroke-width="6" stroke-linecap="round"/><path d="M491 451h0" stroke="#00ff80" stroke-width="6" stroke-linecap="round"/><path d="M470 430h0M484 437h0M477 449h0" stroke="#00ebcf" stroke-width="6" stroke-linecap="round"/><path d="M476 435h0M480 444h0" stroke="#00e1f7" stroke-width="6" stroke-linecap="round"/><path d="M505 389h0" stroke="#00aaff" stroke-width="6" stroke-linecap="round"/><path d="M510 386h0M520 381h0M525 380h0" stroke="#008cff" stroke-width="6" stroke-linecap="round"/><path d="M514 383h0M530 381h0" stroke="#006eff" stroke-width="6" stroke-linecap="round"/><polygon points="545.0,441.0 627.5,422.5 645.0,440.0 672.5,505.0 592.0,583.0 522.6,537.0 530.0,462.5" fill="#ffed00"/><path d="M628 423h0M622 426h0M613 428h0M616 429h0M618 429h0M622 428h0M609 431h0M622 431h0M634 431h0M637 432h0M592 435h0M597 434h0M612 435h0M616 435h0M625 434h0M628 435h0M631 434h0M636 435h0M573 437h0M589 437h0M591 437h0M598 437h0M601 438h0M625 437h0M637 438h0M567 441h0M579 441h0M589 440h0M592 440h0M598 440h0M601 441h0M619 440h0M622 441h0M631 441h0M543 444h0M573 443h0M582 443h0M589 444h0M592 444h0M594 443h0M601 443h0M610 444h0M630 444h0M633 443h0M640 444h0M645 444h0M541 447h0M543 447h0M547 447h0M561 447h0M571 447h0M582 447h0M588 447h0M606 446h0M616 447h0M541 449h0M561 450h0M597 449h0M607 450h0M616 449h0M636 449h0M640 450h0M538 453h0M541 452h0M559 453h0M571 452h0M585 453h0M613 452h0M615 452h0M618 453h0M625 452h0M627 453h0M631 453h0M637 452h0M555 456h0M559 456h0M568 456h0M580 456h0M598 455h0M601 455h0M618 456h0M627 455h0M649 455h0M556 458h0M567 459h0M571 459h0M580 459h0M582 458h0M592 459h0M601 458h0M606 458h0M613 458h0M624 458h0M634 459h0M646 459h0M535 462h0M552 462h0M562 461h0M571 462h0M576 461h0M603 461h0M606 462h0M619 462h0M631 461h0M645 461h0M652 461h0M532 464h0M535 464h0M543 464h0M579 465h0M600 465h0M607 465h0M627 464h0M640 465h0M646 465h0M654 465h0M540 468h0M544 467h0M576 468h0M591 468h0M597 468h0M604 467h0M606 468h0M610 467h0M628 467h0M630 467h0M640 467h0M643 468h0M655 467h0M541 470h0M546 471h0M577 471h0M598 470h0M607 470h0M609 471h0M612 471h0M615 470h0M621 471h0M624 470h0M631 471h0M637 471h0M643 470h0M658 470h0M529 473h0M543 473h0M586 473h0M595 474h0M606 473h0M616 473h0M618 473h0M633 474h0M645 474h0M654 473h0M658 474h0M535 477h0M541 477h0M544 476h0M567 477h0M573 476h0M579 476h0M586 477h0M604 477h0M625 477h0M636 477h0M652 477h0M660 477h0M538 480h0M553 480h0M568 480h0M585 479h0M601 480h0M621 480h0M532 482h0M535 482h0M538 482h0M571 483h0M585 482h0M592 483h0M594 483h0M604 482h0M606 483h0M628 482h0M631 482h0M637 483h0M655 482h0M535 485h0M546 485h0M552 486h0M565 485h0M568 486h0M571 485h0M580 485h0M585 486h0M589 486h0M610 485h0M633 485h0M528 488h0M532 489h0M552 489h0M562 489h0M565 489h0M579 489h0M582 489h0M592 489h0M595 489h0M607 489h0M621 489h0M634 488h0M643 488h0M646 488h0M661 489h0M663 489h0M531 491h0M550 492h0M556 491h0M567 491h0M598 491h0M606 492h0M625 492h0M631 492h0M637 492h0M640 492h0M646 491h0M655 491h0M657 492h0M664 491h0M666 492h0M540 495h0M544 495h0M556 495h0M559 495h0M562 495h0M580 494h0M582 494h0M589 494h0M594 495h0M619 495h0M628 495h0M631 494h0M634 494h0M639 494h0M642 495h0M660 494h0M663 494h0M537 497h0M541 497h0M543 498h0M561 498h0M583 498h0M592 497h0M594 498h0M598 498h0M613 497h0M619 498h0M633 498h0M640 497h0M543 501h0M570 501h0M592 500h0M646 501h0M648 500h0M652 500h0M658 500h0M541 503h0M547 503h0M589 503h0M657 503h0M670 503h0M532 507h0M535 506h0M546 506h0M574 506h0M628 507h0M631 506h0M640 507h0M643 506h0M646 506h0M648 506h0M660 507h0M541 510h0M565 510h0M571 509h0M582 509h0M589 509h0M595 510h0M601 509h0M603 510h0M615 510h0M625 509h0M640 509h0M657 510h0M529 512h0M556 513h0M579 513h0M586 513h0M592 513h0M594 512h0M604 512h0M612 512h0M630 512h0M637 513h0M640 513h0M643 512h0M646 512h0M648 512h0M652 512h0M658 513h0M664 513h0M534 516h0M541 516h0M577 516h0M592 515h0M627 515h0M636 515h0M648 516h0M573 518h0M583 519h0M609 519h0M622 518h0M631 519h0M634 518h0M658 518h0M552 522h0M561 522h0M574 522h0M579 521h0M597 521h0M631 522h0M633 521h0M637 522h0M639 521h0M645 522h0M571 524h0M573 525h0M588 525h0M591 525h0M604 524h0M618 524h0M646 525h0M553 527h0M568 527h0M588 527h0M597 527h0M606 527h0M619 527h0M621 527h0M645 528h0M537 530h0M552 531h0M598 530h0M610 530h0M621 530h0M625 531h0M630 531h0M645 531h0M528 534h0M547 534h0M565 533h0M609 533h0M544 536h0M565 537h0M585 536h0M616 537h0M619 537h0M621 536h0M628 537h0M637 536h0M556 540h0M559 540h0M568 539h0M573 539h0M580 539h0M613 540h0M544 542h0M550 543h0M558 542h0M562 543h0M568 542h0M577 542h0M579 543h0M604 543h0M607 543h0M540 546h0M549 545h0M555 545h0M561 545h0M579 545h0M582 545h0M594 546h0M597 545h0M603 545h0M628 545h0M556 549h0M562 548h0M580 549h0M598 549h0M616 548h0M550 552h0M553 551h0M597 551h0M601 552h0M603 552h0M576 555h0M607 554h0M615 554h0M553 557h0M556 558h0M580 557h0M585 558h0M595 557h0M597 558h0M600 557h0M603 557h0M606 558h0M609 558h0M586 561h0M604 560h0M609 561h0M594 564h0M600 567h0M577 570h0M582 570h0M589 573h0M592 576h0M597 576h0M589 578h0M592 581h0" stroke="#ffcf00" stroke-width="4" stroke-linecap="round"/><path d="M616 426h0M624 426h0M609 428h0M633 428h0M624 432h0M577 435h0M580 434h0M583 435h0M585 435h0M606 435h0M633 434h0M561 438h0M568 438h0M583 437h0M609 437h0M616 438h0M622 437h0M553 440h0M559 440h0M562 441h0M564 441h0M571 440h0M594 441h0M606 440h0M610 440h0M550 443h0M562 444h0M570 443h0M613 443h0M616 444h0M622 443h0M550 446h0M565 446h0M597 446h0M610 446h0M627 446h0M640 446h0M646 446h0M550 449h0M601 449h0M622 449h0M625 450h0M643 450h0M550 452h0M597 453h0M646 452h0M553 456h0M574 456h0M610 455h0M633 456h0M646 455h0M651 455h0M535 459h0M537 459h0M540 459h0M553 458h0M559 458h0M574 459h0M594 459h0M597 459h0M603 459h0M609 459h0M628 458h0M550 461h0M567 461h0M589 461h0M591 461h0M595 462h0M598 461h0M601 461h0M610 461h0M621 461h0M625 461h0M642 461h0M649 462h0M547 464h0M585 464h0M598 464h0M604 465h0M610 464h0M612 464h0M619 465h0M537 467h0M550 467h0M567 468h0M585 467h0M613 467h0M622 468h0M637 467h0M538 471h0M559 470h0M570 470h0M646 470h0M537 474h0M550 474h0M574 473h0M577 474h0M591 473h0M597 474h0M621 473h0M624 473h0M630 473h0M639 473h0M531 476h0M562 476h0M598 476h0M607 476h0M631 476h0M571 480h0M573 480h0M594 480h0M540 483h0M567 483h0M574 483h0M576 483h0M597 483h0M643 482h0M528 485h0M543 486h0M550 485h0M630 486h0M661 486h0M663 485h0M544 489h0M549 488h0M558 489h0M585 489h0M604 489h0M639 489h0M649 488h0M652 488h0M658 488h0M537 491h0M561 492h0M580 491h0M591 492h0M603 492h0M628 492h0M633 491h0M661 491h0M529 495h0M549 494h0M565 495h0M573 494h0M601 495h0M637 494h0M646 494h0M648 495h0M651 495h0M657 494h0M667 494h0M550 497h0M559 497h0M574 497h0M577 498h0M579 498h0M622 498h0M643 497h0M645 497h0M652 498h0M658 498h0M660 497h0M528 501h0M535 501h0M537 501h0M547 501h0M558 500h0M561 500h0M565 500h0M574 501h0M579 500h0M597 501h0M601 501h0M603 501h0M619 500h0M622 500h0M634 501h0M637 501h0M661 500h0M670 501h0M532 504h0M534 503h0M556 503h0M564 504h0M568 503h0M571 503h0M574 504h0M595 504h0M597 504h0M606 504h0M624 503h0M630 504h0M633 503h0M639 503h0M655 503h0M537 506h0M543 507h0M553 507h0M562 507h0M567 506h0M577 506h0M595 506h0M603 507h0M607 507h0M621 506h0M652 507h0M529 509h0M535 510h0M547 509h0M567 509h0M573 509h0M579 510h0M606 510h0M610 510h0M627 509h0M633 510h0M636 510h0M645 509h0M526 513h0M547 513h0M550 512h0M552 513h0M577 512h0M583 512h0M597 512h0M601 513h0M607 513h0M610 512h0M622 513h0M625 513h0M634 512h0M661 512h0M555 516h0M568 515h0M579 515h0M583 515h0M588 515h0M595 516h0M598 516h0M600 515h0M616 516h0M622 516h0M640 515h0M643 515h0M646 516h0M535 519h0M538 519h0M543 519h0M558 519h0M597 518h0M607 519h0M616 519h0M619 518h0M625 519h0M636 518h0M643 518h0M649 519h0M654 518h0M525 521h0M531 522h0M534 522h0M550 521h0M568 521h0M609 521h0M613 522h0M619 521h0M642 522h0M655 521h0M538 524h0M555 524h0M568 524h0M580 525h0M598 524h0M627 525h0M633 525h0M637 524h0M639 524h0M643 524h0M648 524h0M531 528h0M541 527h0M561 527h0M574 527h0M580 527h0M600 528h0M609 528h0M631 527h0M639 527h0M642 527h0M525 531h0M528 530h0M544 530h0M561 530h0M568 531h0M571 531h0M577 531h0M579 531h0M582 530h0M586 530h0M604 530h0M616 531h0M634 531h0M538 534h0M540 534h0M543 534h0M559 533h0M567 534h0M571 534h0M573 534h0M577 533h0M591 534h0M595 533h0M604 533h0M607 533h0M618 534h0M621 533h0M628 534h0M634 534h0M636 534h0M537 536h0M541 536h0M561 536h0M568 537h0M570 536h0M579 537h0M582 536h0M589 537h0M595 536h0M604 536h0M532 540h0M540 539h0M583 540h0M615 539h0M627 540h0M532 543h0M540 542h0M615 543h0M624 542h0M627 543h0M538 545h0M567 545h0M592 545h0M606 546h0M609 546h0M613 545h0M616 545h0M540 548h0M543 549h0M568 548h0M606 548h0M610 549h0M621 548h0M547 552h0M564 551h0M568 552h0M606 551h0M559 554h0M562 554h0M604 554h0M613 555h0M619 555h0M577 557h0M615 557h0M568 561h0M570 560h0M573 561h0M576 560h0M580 560h0M592 561h0M594 561h0M597 561h0M600 561h0M613 560h0M573 564h0M601 563h0M568 566h0M570 566h0M583 566h0M586 567h0M592 566h0M598 567h0M580 570h0M594 570h0M604 569h0M592 572h0M594 573h0M591 579h0" stroke="#ffa700" stroke-width="4" stroke-linecap="round"/><path d="M618 426h0M570 437h0M585 438h0M583 440h0M552 443h0M555 444h0M565 443h0M568 443h0M598 443h0M642 443h0M552 447h0M555 446h0M600 446h0M543 450h0M546 450h0M553 450h0M558 449h0M627 449h0M543 452h0M547 452h0M639 453h0M643 453h0M607 455h0M636 456h0M640 455h0M543 459h0M564 461h0M580 462h0M583 461h0M586 462h0M559 464h0M592 464h0M553 467h0M570 468h0M588 468h0M616 468h0M648 468h0M550 470h0M562 471h0M564 471h0M567 470h0M589 470h0M559 474h0M588 474h0M636 473h0M546 477h0M565 476h0M544 480h0M643 479h0M645 479h0M565 482h0M555 485h0M561 485h0M652 486h0M540 489h0M534 491h0M543 492h0M532 498h0M564 498h0M571 497h0M553 501h0M664 500h0M592 504h0M612 504h0M627 503h0M651 503h0M613 510h0M534 513h0M538 513h0M558 512h0M562 513h0M538 515h0M573 516h0M604 515h0M612 515h0M619 516h0M531 518h0M549 518h0M553 518h0M600 519h0M529 522h0M541 521h0M547 522h0M555 522h0M559 521h0M624 522h0M540 525h0M547 525h0M549 524h0M601 524h0M630 525h0M526 528h0M529 527h0M534 528h0M544 527h0M547 527h0M576 528h0M619 530h0M588 533h0M531 536h0M534 537h0M625 537h0M529 539h0M553 540h0M625 540h0M535 542h0M553 542h0M570 545h0M621 545h0M624 545h0M559 549h0M625 548h0M568 558h0M570 557h0M565 564h0M567 563h0M577 564h0M579 564h0M582 564h0M585 564h0M591 564h0M597 564h0M589 569h0M577 573h0" stroke="#ff4000" stroke-width="4" stroke-linecap="round"/><path d="M628 425h0M603 428h0M625 428h0M628 429h0M631 429h0M594 432h0M601 432h0M604 432h0M606 432h0M612 432h0M574 435h0M589 434h0M600 434h0M603 434h0M619 434h0M622 434h0M595 437h0M619 437h0M628 438h0M631 438h0M633 438h0M639 438h0M586 441h0M615 441h0M625 441h0M636 441h0M639 441h0M643 440h0M577 444h0M580 443h0M586 444h0M604 443h0M607 443h0M628 444h0M567 446h0M574 447h0M579 446h0M586 447h0M592 446h0M595 447h0M603 446h0M622 447h0M631 446h0M634 446h0M564 450h0M573 450h0M579 449h0M586 450h0M589 450h0M591 450h0M603 449h0M634 450h0M645 449h0M648 449h0M568 452h0M573 452h0M576 453h0M582 453h0M594 453h0M604 452h0M606 452h0M610 453h0M633 452h0M538 456h0M540 455h0M565 456h0M571 456h0M582 456h0M612 456h0M616 456h0M561 459h0M564 458h0M576 459h0M586 458h0M615 458h0M618 459h0M622 459h0M640 458h0M652 459h0M574 462h0M634 462h0M573 465h0M577 465h0M616 465h0M622 464h0M624 464h0M637 465h0M642 465h0M652 465h0M546 467h0M595 468h0M624 468h0M633 468h0M652 468h0M544 470h0M592 471h0M594 471h0M601 470h0M604 470h0M618 470h0M634 470h0M640 471h0M648 471h0M652 471h0M654 471h0M546 474h0M568 474h0M610 473h0M628 473h0M643 473h0M652 474h0M555 476h0M559 476h0M571 477h0M595 477h0M619 477h0M622 476h0M628 476h0M634 477h0M639 477h0M642 476h0M646 476h0M649 476h0M655 477h0M658 477h0M534 479h0M549 480h0M555 479h0M576 479h0M580 479h0M583 480h0M592 479h0M598 480h0M604 480h0M613 480h0M619 480h0M625 479h0M634 479h0M637 480h0M529 483h0M550 482h0M553 483h0M555 483h0M558 482h0M580 482h0M613 482h0M616 483h0M619 483h0M621 482h0M624 482h0M633 482h0M639 483h0M582 485h0M595 486h0M622 486h0M637 485h0M535 488h0M547 488h0M567 488h0M570 488h0M609 488h0M619 489h0M636 488h0M559 492h0M565 491h0M612 492h0M618 492h0M643 492h0M553 494h0M567 495h0M576 494h0M586 495h0M606 494h0M615 495h0M528 497h0M547 497h0M610 497h0M636 497h0M663 498h0M588 501h0M594 500h0M609 501h0M612 500h0M615 501h0M628 500h0M630 501h0M639 500h0M642 500h0M576 504h0M583 504h0M586 504h0M601 503h0M603 503h0M645 504h0M661 503h0M667 504h0M526 506h0M570 506h0M580 506h0M582 506h0M598 507h0M616 506h0M619 506h0M657 506h0M663 507h0M670 507h0M526 510h0M544 510h0M592 509h0M598 510h0M630 510h0M642 510h0M649 510h0M655 510h0M667 509h0M565 512h0M574 512h0M588 513h0M618 512h0M628 512h0M526 515h0M565 515h0M585 516h0M610 516h0M652 515h0M660 515h0M562 519h0M568 519h0M577 518h0M592 518h0M595 518h0M627 519h0M576 522h0M588 521h0M592 521h0M595 521h0M604 522h0M628 522h0M651 522h0M576 524h0M586 525h0M565 527h0M586 527h0M591 528h0M595 527h0M604 527h0M612 528h0M628 528h0M648 527h0M540 531h0M565 530h0M588 530h0M592 531h0M595 531h0M628 531h0M639 531h0M642 531h0M562 534h0M612 534h0M615 534h0M639 534h0M558 536h0M577 537h0M591 537h0M600 537h0M630 537h0M633 537h0M546 539h0M565 539h0M570 539h0M597 540h0M610 540h0M618 540h0M631 539h0M547 542h0M556 542h0M591 542h0M595 542h0M612 542h0M619 543h0M630 542h0M633 543h0M543 546h0M546 545h0M553 546h0M574 545h0M588 546h0M549 549h0M553 548h0M564 548h0M571 549h0M574 548h0M577 548h0M582 549h0M586 548h0M592 549h0M595 549h0M618 548h0M556 551h0M558 552h0M585 551h0M594 552h0M553 554h0M555 554h0M571 554h0M579 554h0M583 554h0M586 555h0M592 554h0M595 554h0M609 555h0M574 557h0M582 558h0M589 561h0M606 561h0M604 563h0M606 564h0M603 566h0M607 566h0M598 569h0M606 569h0M580 573h0M583 572h0M586 572h0M597 573h0M603 572h0M586 575h0M586 578h0" stroke="#fff700" stroke-width="4" stroke-linecap="round"/><path d="M631 426h0M616 432h0M639 435h0M576 438h0M574 440h0M583 450h0M595 450h0M589 453h0M592 453h0M594 455h0M625 455h0M640 462h0M532 480h0M558 480h0M630 480h0M615 489h0M610 494h0M585 501h0M580 504h0M585 506h0M618 510h0M594 524h0M624 528h0M636 527h0M600 534h0M630 534h0M643 534h0M588 540h0M636 540h0M589 542h0M601 543h0M601 546h0M576 552h0M579 552h0M591 551h0M588 557h0M600 572h0" stroke="#87ff00" stroke-width="4" stroke-linecap="round"/><path d="M601 429h0M598 432h0M618 432h0M594 435h0M565 437h0M642 438h0M577 440h0M628 440h0M634 441h0M624 443h0M637 444h0M577 447h0M624 447h0M637 447h0M568 449h0M571 450h0M577 449h0M609 449h0M612 449h0M631 450h0M562 452h0M565 452h0M580 453h0M649 453h0M562 456h0M585 456h0M589 456h0M592 455h0M588 458h0M613 461h0M616 462h0M628 461h0M637 462h0M630 464h0M600 467h0M627 471h0M571 473h0M580 474h0M582 474h0M613 473h0M649 473h0M538 477h0M582 477h0M613 476h0M616 476h0M541 480h0M607 479h0M610 479h0M616 480h0M628 479h0M654 479h0M657 480h0M661 479h0M583 483h0M610 483h0M657 482h0M660 482h0M531 485h0M591 485h0M613 486h0M615 485h0M618 485h0M640 485h0M642 485h0M612 488h0M624 488h0M553 492h0M573 492h0M576 491h0M594 492h0M601 492h0M616 491h0M571 494h0M592 495h0M598 494h0M604 494h0M613 494h0M586 497h0M588 497h0M615 497h0M631 498h0M582 500h0M616 503h0M619 504h0M643 504h0M664 503h0M589 506h0M591 507h0M600 507h0M667 506h0M532 509h0M549 510h0M553 509h0M586 510h0M621 510h0M652 509h0M616 512h0M655 513h0M630 516h0M633 515h0M657 515h0M565 518h0M586 519h0M588 519h0M564 521h0M607 522h0M562 524h0M564 524h0M607 525h0M613 530h0M598 533h0M624 534h0M607 537h0M610 536h0M612 537h0M640 536h0M577 539h0M585 539h0M592 540h0M595 539h0M601 540h0M604 540h0M607 540h0M634 539h0M564 542h0M573 543h0M586 542h0M598 542h0M564 546h0M577 546h0M585 546h0M546 548h0M588 549h0M601 548h0M603 548h0M571 552h0M574 551h0M583 551h0M588 552h0M610 551h0M613 551h0M616 551h0M619 551h0M622 552h0M574 555h0M588 555h0M591 557h0M589 563h0M609 564h0M588 575h0" stroke="#caff00" stroke-width="4" stroke-linecap="round"/><path d="M606 428h0M592 432h0M628 432h0M630 431h0M609 435h0M579 438h0M604 438h0M612 437h0M550 440h0M556 440h0M603 440h0M612 441h0M547 443h0M558 444h0M618 443h0M559 446h0M613 446h0M619 447h0M642 446h0M556 449h0M618 450h0M553 452h0M556 453h0M601 453h0M621 452h0M544 456h0M549 455h0M577 455h0M604 456h0M631 456h0M546 458h0M550 459h0M630 458h0M636 458h0M642 459h0M648 458h0M538 462h0M544 462h0M546 461h0M555 462h0M559 461h0M538 464h0M541 464h0M550 465h0M556 464h0M562 464h0M565 464h0M567 464h0M571 464h0M583 464h0M589 464h0M595 465h0M633 465h0M649 465h0M531 468h0M535 468h0M556 467h0M558 468h0M562 468h0M564 467h0M574 467h0M583 467h0M618 468h0M646 468h0M534 471h0M553 471h0M556 470h0M574 471h0M579 470h0M582 470h0M585 471h0M532 474h0M534 474h0M540 473h0M553 473h0M556 473h0M561 474h0M565 473h0M601 474h0M603 474h0M550 476h0M553 476h0M577 477h0M588 477h0M591 476h0M600 477h0M546 479h0M561 480h0M564 480h0M589 479h0M640 480h0M649 479h0M651 479h0M544 482h0M547 482h0M562 482h0M588 482h0M600 482h0M646 483h0M649 482h0M651 483h0M538 486h0M540 485h0M574 486h0M577 486h0M597 485h0M603 486h0M606 485h0M625 485h0M628 485h0M646 485h0M649 486h0M654 485h0M657 485h0M538 488h0M556 488h0M574 489h0M577 488h0M589 488h0M597 488h0M601 489h0M627 488h0M631 488h0M655 488h0M528 491h0M541 491h0M570 492h0M582 491h0M586 491h0M588 492h0M622 491h0M649 491h0M652 492h0M535 495h0M538 494h0M547 494h0M622 495h0M625 494h0M654 494h0M535 497h0M552 498h0M555 497h0M568 497h0M601 497h0M604 497h0M607 497h0M625 497h0M628 497h0M649 498h0M655 498h0M667 497h0M532 501h0M541 501h0M549 501h0M555 501h0M567 500h0M576 501h0M606 500h0M625 500h0M655 500h0M667 500h0M538 504h0M550 503h0M553 504h0M559 504h0M562 503h0M610 503h0M622 503h0M636 503h0M528 507h0M540 506h0M549 506h0M556 507h0M565 506h0M610 506h0M613 507h0M625 506h0M634 507h0M636 506h0M654 507h0M537 509h0M556 510h0M561 510h0M577 510h0M661 509h0M663 510h0M531 513h0M541 513h0M543 512h0M568 513h0M571 513h0M528 515h0M544 515h0M547 515h0M549 516h0M553 515h0M559 516h0M562 516h0M571 516h0M607 516h0M625 516h0M655 516h0M529 518h0M541 519h0M556 519h0M571 518h0M579 519h0M603 519h0M613 519h0M640 518h0M645 519h0M651 518h0M538 521h0M544 521h0M571 521h0M583 522h0M585 521h0M600 522h0M615 521h0M622 522h0M649 522h0M525 524h0M528 525h0M531 525h0M534 525h0M544 524h0M553 525h0M559 524h0M582 525h0M610 525h0M613 524h0M616 525h0M622 524h0M625 524h0M537 528h0M549 528h0M555 527h0M571 528h0M583 528h0M616 527h0M633 527h0M531 531h0M535 530h0M547 530h0M549 530h0M556 531h0M558 530h0M573 530h0M601 530h0M607 531h0M637 530h0M526 534h0M531 533h0M534 533h0M550 533h0M553 533h0M556 533h0M580 534h0M583 534h0M585 533h0M523 536h0M525 537h0M529 537h0M546 536h0M549 536h0M553 537h0M555 536h0M574 536h0M598 536h0M537 539h0M543 540h0M550 540h0M561 539h0M621 539h0M537 542h0M571 542h0M582 543h0M610 542h0M622 543h0M559 545h0M619 545h0M613 549h0M627 548h0M565 554h0M568 555h0M597 554h0M601 554h0M559 557h0M565 557h0M613 557h0M559 561h0M561 561h0M565 561h0M582 560h0M571 563h0M574 567h0M576 567h0M579 566h0M589 567h0M594 567h0M574 569h0M586 569h0M583 576h0M595 576h0M595 579h0" stroke="#ff7500" stroke-width="4" stroke-linecap="round"/><path d="M606 437h0M546 456h0M540 462h0M553 465h0M579 468h0M559 485h0M600 485h0M547 492h0M532 495h0M529 503h0M543 504h0M649 504h0M559 507h0M559 510h0M532 516h0M546 518h0M558 527h0M526 539h0M535 540h0M562 552h0M592 569h0" stroke="#ed1a00" stroke-width="4" stroke-linecap="round"/><path d="M621 455h0M610 476h0M610 491h0M601 570h0" stroke="#50ff15" stroke-width="4" stroke-linecap="round"/><path d="M643 456h0M532 471h0M526 518h0M562 557h0" stroke="#c10d00" stroke-width="4" stroke-linecap="round"/><polygon points="480.0,462.5 532.5,460.0 522.5,540.0 470.0,530.0" fill="#5700a7"/><polyline points="480.0,462.0 532.0,460.0" fill="none" stroke="#5aff07" stroke-width="5" stroke-linejoin="round" stroke-linecap="round"/><polyline points="482.0,462.0 470.0,530.0" fill="none" stroke="#1eff58" stroke-width="5" stroke-linejoin="round" stroke-linecap="round"/><polyline points="532.0,460.0 522.0,540.0" fill="none" stroke="#3cff2f" stroke-width="5" stroke-linejoin="round" stroke-linecap="round"/><polyline points="478.0,485.0 528.0,488.0" fill="none" stroke="#1eff58" stroke-width="4" stroke-linejoin="round" stroke-linecap="round"/><polyline points="474.0,507.0 525.0,512.0" fill="none" stroke="#1eff58" stroke-width="4" stroke-linejoin="round" stroke-linecap="round"/><path d="M477 513h0M479 521h0M497 524h0M500 528h0M523 527h0M520 531h0" stroke="#009fff" stroke-width="5" stroke-linecap="round"/><path d="M476 515h0M481 516h0M483 516h0M501 516h0M512 516h0M477 521h0M489 524h0M519 524h0M524 525h0M485 529h0M487 528h0M497 529h0M517 527h0M496 531h0M515 531h0" stroke="#00c8ff" stroke-width="4" stroke-linecap="round"/><path d="M488 515h0" stroke="#00f2b4" stroke-width="4" stroke-linecap="round"/><path d="M491 516h0M497 516h0M504 516h0M516 517h0M500 519h0M504 521h0M511 520h0M493 525h0M499 523h0M504 524h0M515 523h0M493 527h0M507 528h0M513 529h0M509 532h0" stroke="#00c8ff" stroke-width="5" stroke-linecap="round"/><path d="M508 516h0M484 520h0M479 523h0" stroke="#0078ff" stroke-width="5" stroke-linecap="round"/><path d="M489 521h0M509 520h0M485 525h0M520 527h0M504 532h0" stroke="#00e5e9" stroke-width="5" stroke-linecap="round"/><path d="M493 521h0" stroke="#00f2b4" stroke-width="5" stroke-linecap="round"/><path d="M495 519h0M520 519h0M477 525h0M505 528h0M513 533h0" stroke="#009fff" stroke-width="4" stroke-linecap="round"/><path d="M516 520h0M508 524h0M512 525h0M475 528h0" stroke="#00e5e9" stroke-width="4" stroke-linecap="round"/><polygon points="872.0,440.0 912.0,415.0 950.0,340.0 1131.0,450.0 1131.0,640.0 990.0,625.0 987.0,700.0 930.0,700.0 880.0,600.0 872.0,515.0" fill="#0050ff" filter="url(#b6)"/><polygon points="830.0,730.0 880.0,725.0 960.0,650.0 990.0,625.0 1131.0,640.0 1131.0,450.0 1300.0,540.0 1300.0,900.0 830.0,900.0" fill="#00aaff" filter="url(#b6)"/><polygon points="870.0,588.0 969.0,592.0 987.0,640.0 987.0,700.0 930.0,705.0 870.0,680.0" fill="#3d00c2" filter="url(#b6)"/><linearGradient id="vg" x1="0" y1="0" x2="1" y2="0.3"><stop offset="0" stop-color="#5700a7"/><stop offset="1" stop-color="#1811e6"/></linearGradient><polygon points="870.0,290.0 955.0,340.0 935.0,370.0 905.0,415.0 870.0,420.0" fill="url(#vg)"/><polygon points="1018.0,500.0 1115.0,500.0 1117.5,537.5 1110.0,577.0 1059.0,597.0 1036.0,621.0 1016.0,611.0 1022.0,560.0" fill="#006eff" filter="url(#b2)"/><polygon points="1055.0,510.0 1100.0,508.0 1105.0,540.0 1070.0,570.0 1045.0,560.0" fill="#008cff" filter="url(#b6)"/><polygon points="975.0,547.0 1000.0,542.0 1020.0,560.0 1015.0,582.0 990.0,575.0" fill="#071bf8" filter="url(#b2)"/><polygon points="975.0,425.0 990.0,425.0 1000.0,470.0 985.0,480.0 975.0,460.0" fill="#071bf8" filter="url(#b2)"/><polygon points="1040.0,480.0 1100.0,460.0 1125.0,480.0 1115.0,500.0 1030.0,505.0" fill="#006eff" filter="url(#b3)"/><polygon points="1085.0,445.0 1140.0,468.0 1135.0,490.0 1090.0,470.0" fill="#008cff" filter="url(#b3)"/><polygon points="1051.0,458.0 1070.0,454.0 1085.0,470.0 1080.0,486.0 1055.0,480.0" fill="#1eff58" filter="url(#b2)"/><polygon points="1217.0,575.0 1250.0,565.0 1262.0,600.0 1240.0,615.0 1220.0,600.0" fill="#00c8ff" filter="url(#b3)"/><polygon points="1167.0,645.0 1217.0,630.0 1230.0,690.0 1180.0,705.0" fill="#008cff" filter="url(#b3)"/><polygon points="1162.0,645.0 1225.0,640.0 1225.0,710.0 1162.0,710.0" fill="#006eff" filter="url(#b6)"/><polyline points="741.0,665.0 870.0,444.0 892.0,418.0" fill="none" stroke="#71008b" stroke-width="12" stroke-linejoin="round" stroke-linecap="round"/><path d="M941 355h0M908 396h0M788 410h0M792 410h0M851 419h0M864 419h0M930 416h0M760 420h0M809 423h0M807 429h0M847 430h0M1007 430h0M746 434h0M809 434h0M811 435h0M821 435h0M833 435h0M784 443h0M837 442h0M853 441h0M821 447h0M738 453h0M829 454h0M736 460h0M782 458h0M754 468h0M822 467h0M832 468h0M872 469h0M774 471h0M719 475h0M759 475h0M859 481h0M704 484h0M769 494h0M708 497h0M753 503h0M757 502h0M781 502h0M708 507h0M864 509h0M750 515h0M841 515h0M861 515h0M703 519h0M763 523h0M811 523h0M837 523h0M672 527h0M775 531h0M829 531h0M746 536h0M793 534h0M775 539h0M795 539h0M685 543h0M707 543h0M784 545h0M828 542h0M826 548h0M859 548h0M792 552h0M752 555h0M716 561h0M834 562h0M1157 560h0M642 563h0M649 564h0M771 568h0M838 569h0M844 568h0M686 572h0M767 581h0M811 587h0M737 593h0M833 594h0M850 607h0M690 612h0M866 611h0M691 615h0M696 615h0M704 616h0M937 616h0M809 620h0M924 620h0M786 624h0M850 623h0M969 624h0M773 628h0M791 628h0M958 627h0M688 632h0M717 637h0M775 636h0M850 636h0M866 635h0M959 641h0M725 646h0M824 643h0M871 649h0M717 652h0M738 652h0M737 658h0M878 657h0M952 661h0M829 670h0M771 675h0M824 675h0M857 674h0M880 673h0M895 672h0M1198 679h0M939 685h0M996 687h0M895 691h0M996 690h0M1019 696h0M887 700h0M1004 703h0M840 712h0M1028 713h0M874 719h0M989 720h0M1097 720h0M985 723h0M851 728h0M1113 733h0M1014 807h0" stroke="#0028ff" stroke-width="7" stroke-linecap="square"/><path d="M931 358h0M918 366h0M937 373h0M959 375h0M935 384h0M900 403h0M815 418h0M841 418h0M857 423h0M896 422h0M763 426h0M850 436h0M851 444h0M826 448h0M765 460h0M800 458h0M843 461h0M847 461h0M842 464h0M845 467h0M877 475h0M698 484h0M724 488h0M775 489h0M1084 490h0M808 495h0M864 493h0M690 498h0M817 498h0M817 501h0M845 501h0M866 502h0M791 506h0M850 505h0M900 506h0M847 508h0M868 511h0M1196 519h0M791 526h0M742 532h0M800 532h0M849 531h0M736 536h0M841 540h0M845 541h0M660 543h0M863 547h0M1152 547h0M1219 552h0M765 555h0M829 556h0M1156 557h0M853 561h0M864 561h0M784 564h0M740 573h0M1196 574h0M758 578h0M782 578h0M846 576h0M1195 578h0M710 580h0M771 582h0M1004 582h0M745 594h0M741 601h0M838 603h0M744 607h0M1169 606h0M1250 608h0M649 612h0M699 612h0M1170 610h0M1215 611h0M751 615h0M837 615h0M954 615h0M1219 614h0M811 623h0M853 622h0M843 626h0M918 628h0M1240 628h0M692 632h0M695 632h0M876 630h0M1117 632h0M681 637h0M746 635h0M708 641h0M855 640h0M1211 640h0M1252 639h0M959 643h0M1165 644h0M1194 647h0M1246 648h0M837 654h0M1164 653h0M808 663h0M761 664h0M1195 665h0M815 671h0M864 670h0M1208 679h0M849 681h0M1021 684h0M1178 683h0M993 686h0M1192 688h0M771 691h0M1006 690h0M1250 695h0M958 699h0M968 699h0M979 700h0M918 704h0M814 707h0M908 707h0M921 707h0M1005 707h0M818 716h0M1067 716h0M1094 721h0M1088 723h0M1124 724h0M984 729h0M1019 727h0M1022 728h0M1052 738h0M1055 737h0M1177 744h0M1195 748h0M1127 769h0M1182 774h0M1014 802h0M1019 805h0" stroke="#0050ff" stroke-width="5" stroke-linecap="square"/><path d="M945 360h0M954 364h0M967 370h0M942 375h0M990 375h0M983 379h0M939 383h0M944 383h0M968 389h0M919 397h0M1026 412h0M1054 422h0M948 431h0M1017 429h0M935 435h0M975 435h0M959 438h0M874 460h0M887 461h0M1074 476h0M860 486h0M1086 486h0M964 488h0M1006 493h0M1166 495h0M851 498h0M851 502h0M989 503h0M1137 510h0M1191 509h0M872 518h0M1166 518h0M1175 520h0M1176 518h0M1168 522h0M964 526h0M1190 535h0M1202 534h0M998 540h0M1165 540h0M1206 538h0M1160 545h0M1180 546h0M1212 549h0M1214 546h0M1013 552h0M1238 556h0M867 560h0M1131 562h0M1241 559h0M922 566h0M1231 565h0M1169 568h0M1199 578h0M1161 585h0M1190 587h0M1007 588h0M1179 591h0M1180 590h0M1215 591h0M931 593h0M1063 596h0M1114 594h0M1169 595h0M1183 593h0M939 599h0M1187 598h0M1098 604h0M1186 602h0M959 606h0M1062 607h0M1162 605h0M1055 616h0M1176 614h0M1198 615h0M1210 614h0M1065 620h0M1165 618h0M1235 618h0M845 629h0M1206 627h0M1215 626h0M1234 627h0M1249 628h0M1237 633h0M1256 633h0M1156 636h0M1169 637h0M1213 636h0M1052 639h0M1060 639h0M969 645h0M1119 645h0M1176 646h0M1215 645h0M1227 644h0M1220 647h0M1151 653h0M1199 652h0M1137 656h0M1148 656h0M1193 657h0M1198 656h0M1029 660h0M1152 660h0M1203 660h0M826 666h0M1158 666h0M1257 665h0M1262 665h0M1191 670h0M1194 670h0M1236 671h0M1204 674h0M1206 674h0M1235 673h0M1176 678h0M1219 677h0M1240 677h0M1182 682h0M1206 686h0M1241 686h0M1228 690h0M1249 692h0M1148 694h0M991 699h0M1025 703h0M1183 703h0M1022 707h0M1102 706h0M1170 706h0M1197 707h0M1227 708h0M1235 708h0M916 711h0M935 710h0M976 711h0M1030 713h0M1097 713h0M1140 713h0M1186 712h0M1215 712h0M998 716h0M1114 717h0M898 721h0M998 721h0M1136 720h0M1081 725h0M1141 723h0M1082 729h0M1098 727h0M1115 728h0M1136 733h0M908 738h0M1103 737h0M967 741h0M994 741h0M1046 741h0M981 744h0M993 745h0M1002 744h0M1048 746h0M922 749h0M1127 749h0M1153 750h0M989 753h0M1024 755h0M1141 757h0M1156 758h0M954 761h0M1178 766h0M985 770h0M1049 771h0M1069 770h0M1182 770h0M1013 775h0M1176 779h0M1182 778h0M1011 788h0M1120 787h0M956 795h0M1019 796h0M1135 794h0M1139 800h0M1157 803h0M965 807h0M1006 808h0M1168 807h0M1115 812h0M1131 813h0M1145 812h0M1168 812h0M1072 820h0M1131 821h0" stroke="#009fff" stroke-width="6" stroke-linecap="square"/><path d="M950 358h0M975 371h0M976 377h0M946 381h0M949 385h0M955 393h0M972 396h0M984 396h0M922 405h0M942 404h0M1005 411h0M992 412h0M969 417h0M935 426h0M1027 445h0M1107 446h0M897 451h0M1123 456h0M1084 464h0M925 470h0M1031 474h0M1147 476h0M1160 478h0M1072 479h0M889 485h0M1101 485h0M1153 486h0M1051 490h0M1139 488h0M1144 487h0M1095 493h0M1101 492h0M1114 494h0M1123 492h0M913 498h0M878 501h0M925 500h0M1106 502h0M1147 502h0M937 510h0M992 509h0M1180 510h0M880 515h0M904 516h0M1120 519h0M1203 524h0M1216 526h0M905 532h0M885 539h0M1184 542h0M1194 545h0M1200 543h0M1215 542h0M896 547h0M1143 549h0M1161 547h0M1233 548h0M1127 551h0M1152 551h0M1179 552h0M1131 557h0M1204 555h0M1179 562h0M1211 564h0M987 569h0M1174 567h0M1192 568h0M913 574h0M985 572h0M1139 574h0M1168 578h0M1174 581h0M1187 582h0M1190 583h0M1215 586h0M929 589h0M1108 590h0M1212 588h0M1118 594h0M1090 597h0M1127 598h0M1181 599h0M1198 602h0M1084 607h0M1090 611h0M1101 611h0M1193 612h0M1198 610h0M1202 612h0M1015 615h0M1235 615h0M1207 620h0M1250 618h0M1158 625h0M1198 622h0M1206 623h0M1131 627h0M1152 629h0M1157 627h0M955 632h0M1153 633h0M1159 630h0M1174 630h0M1231 633h0M1068 635h0M1186 637h0M1224 635h0M1072 640h0M1049 645h0M1056 644h0M1242 643h0M1256 645h0M1261 644h0M975 647h0M1102 654h0M1173 652h0M1233 654h0M1253 653h0M1144 658h0M1178 656h0M1214 659h0M1250 656h0M1067 661h0M1250 666h0M1241 674h0M1259 674h0M997 679h0M1029 679h0M1122 677h0M1000 681h0M1204 683h0M1218 681h0M1023 686h0M1026 686h0M1090 687h0M1199 685h0M878 691h0M1199 691h0M983 695h0M993 696h0M1036 696h0M1177 695h0M1126 700h0M1132 698h0M1178 700h0M1185 698h0M1207 699h0M935 702h0M985 703h0M1190 702h0M1194 704h0M1207 702h0M1015 708h0M1225 707h0M962 713h0M1065 713h0M1161 711h0M1174 710h0M1183 712h0M1204 712h0M1001 716h0M1073 715h0M1152 716h0M1187 715h0M1223 716h0M1081 719h0M1142 720h0M1225 721h0M1151 724h0M887 727h0M994 730h0M998 728h0M854 734h0M1129 731h0M850 736h0M904 740h0M1000 740h0M1022 740h0M1142 741h0M1183 741h0M1190 742h0M962 745h0M1060 749h0M921 754h0M1086 753h0M1149 754h0M1214 754h0M1225 754h0M1024 757h0M971 763h0M1094 763h0M897 766h0M1025 766h0M1033 772h0M1118 769h0M964 773h0M1112 776h0M1059 777h0M1063 778h0M1106 778h0M1189 778h0M988 784h0M1181 782h0M1001 786h0M1195 786h0M1014 793h0M952 794h0M1116 795h0M1186 800h0M993 803h0M1025 805h0M1141 804h0M1136 808h0M1137 813h0M993 817h0M1139 818h0M1133 828h0M1055 834h0" stroke="#00c8ff" stroke-width="7" stroke-linecap="square"/><path d="M960 360h0M929 363h0M980 368h0M941 379h0M935 401h0M950 402h0M916 409h0M1036 409h0M783 414h0M934 415h0M813 416h0M1038 433h0M909 442h0M740 446h0M767 453h0M1080 458h0M805 463h0M1068 463h0M1104 481h0M1173 486h0M1169 488h0M720 492h0M1090 494h0M1183 496h0M725 502h0M855 502h0M857 502h0M861 505h0M867 506h0M850 509h0M1158 511h0M1174 514h0M851 517h0M914 519h0M790 522h0M846 522h0M1052 523h0M742 526h0M847 527h0M912 526h0M1157 527h0M903 535h0M862 541h0M1211 539h0M1147 545h0M1116 546h0M1178 546h0M924 552h0M1140 553h0M874 559h0M1114 561h0M1235 560h0M1173 566h0M1181 566h0M958 569h0M1181 568h0M1157 574h0M1227 572h0M683 577h0M926 579h0M964 578h0M928 580h0M1199 583h0M1006 584h0M733 589h0M1173 589h0M1188 589h0M935 595h0M1057 599h0M1101 599h0M1190 597h0M1124 608h0M855 612h0M1161 612h0M872 615h0M1019 622h0M1139 624h0M1229 625h0M1256 625h0M1258 628h0M1198 633h0M1241 631h0M1162 637h0M1227 636h0M1179 641h0M1183 639h0M1227 642h0M1160 644h0M1194 652h0M1152 657h0M1252 658h0M922 662h0M1190 662h0M1249 660h0M1198 667h0M1198 668h0M845 677h0M1165 678h0M1196 682h0M1224 681h0M1257 681h0M1216 687h0M993 690h0M1175 690h0M1185 692h0M881 694h0M1182 695h0M1237 694h0M935 700h0M1000 699h0M1029 700h0M1227 699h0M1022 702h0M1175 704h0M955 706h0M1092 708h0M1001 712h0M1089 716h0M1072 719h0M1148 720h0M1185 719h0M853 724h0M1045 725h0M1061 729h0M1141 728h0M983 732h0M1077 733h0M1082 732h0M1228 745h0M1002 750h0M1004 753h0M1228 753h0M1013 756h0M1161 759h0M1138 770h0M997 775h0M1128 774h0M1178 774h0M1203 784h0M1017 809h0M1013 821h0M1144 820h0" stroke="#0078ff" stroke-width="7" stroke-linecap="square"/><path d="M941 362h0M955 381h0M941 391h0M981 414h0M983 415h0M1001 412h0M1050 412h0M1045 419h0M969 426h0M1057 444h0M1007 450h0M901 461h0M972 461h0M918 473h0M1046 471h0M1101 476h0M994 485h0M966 490h0M979 489h0M1034 490h0M1116 491h0M927 492h0M1122 498h0M1187 499h0M1094 503h0M1151 502h0M878 507h0M922 507h0M1131 506h0M1173 506h0M1153 510h0M1185 509h0M989 516h0M1181 516h0M874 517h0M962 519h0M1192 523h0M1212 524h0M1165 527h0M1200 526h0M1199 532h0M1212 531h0M1017 535h0M1130 536h0M1168 534h0M1139 539h0M1153 539h0M1220 544h0M1140 549h0M1172 553h0M1124 557h0M1165 557h0M918 564h0M1198 565h0M1135 574h0M1206 573h0M1112 579h0M1132 578h0M1141 581h0M1225 583h0M1199 590h0M1086 595h0M1166 593h0M1073 598h0M1135 597h0M1177 597h0M1084 604h0M1190 604h0M1211 603h0M1119 608h0M1181 607h0M1187 605h0M1080 610h0M1154 612h0M1147 614h0M1157 615h0M1073 619h0M1085 620h0M1174 619h0M980 624h0M1134 625h0M1145 624h0M1170 624h0M1055 628h0M1059 631h0M1081 630h0M1236 635h0M1034 641h0M1038 641h0M1143 640h0M1261 639h0M1073 644h0M1130 650h0M1179 650h0M1231 648h0M1010 652h0M1044 658h0M1090 656h0M1112 658h0M1223 657h0M1227 658h0M1235 658h0M1022 662h0M1223 660h0M1235 660h0M1047 666h0M1153 667h0M1170 667h0M1206 666h0M1214 665h0M1145 671h0M1151 671h0M1155 670h0M993 674h0M1051 673h0M1183 673h0M1191 675h0M989 680h0M1185 677h0M1156 686h0M1170 686h0M1067 691h0M1153 690h0M1202 690h0M1135 694h0M1165 694h0M1173 696h0M1161 700h0M946 703h0M1148 703h0M1179 703h0M985 709h0M1127 708h0M1131 707h0M992 711h0M1047 712h0M1146 710h0M1151 712h0M1008 717h0M1206 715h0M1212 717h0M1017 720h0M1023 720h0M1050 721h0M1212 720h0M1217 720h0M1227 719h0M1237 721h0M888 725h0M954 725h0M960 726h0M979 726h0M1056 724h0M1131 724h0M1144 725h0M1206 724h0M1223 723h0M1233 724h0M1144 730h0M1160 727h0M901 731h0M964 733h0M1043 732h0M1186 732h0M871 737h0M885 737h0M967 735h0M998 738h0M1021 738h0M1144 737h0M1148 736h0M1191 738h0M1193 736h0M1197 737h0M1225 738h0M898 741h0M1085 740h0M1102 741h0M1156 741h0M1185 740h0M1200 742h0M1022 746h0M874 750h0M934 748h0M1036 749h0M1042 751h0M966 753h0M1203 754h0M1081 759h0M1176 757h0M1211 757h0M1224 757h0M967 761h0M977 761h0M1025 761h0M1081 761h0M1084 761h0M1110 763h0M1128 761h0M1224 761h0M1017 768h0M1149 765h0M1169 765h0M930 769h0M977 770h0M1090 772h0M1134 771h0M1165 771h0M1168 771h0M946 776h0M992 775h0M986 778h0M963 782h0M968 784h0M1126 784h0M1174 788h0M1120 791h0M1157 791h0M972 795h0M1031 795h0M1164 794h0M1173 797h0M1178 797h0M1136 800h0M1148 798h0M1183 798h0M1152 809h0M1024 813h0M1027 812h0M1043 813h0M1080 811h0M1139 813h0M1003 821h0M1046 821h0M1108 821h0M1017 824h0M1055 826h0M1065 824h0M1074 830h0M1074 834h0M1109 832h0" stroke="#00e5e9" stroke-width="5" stroke-linecap="square"/><path d="M947 364h0M1013 389h0M943 397h0M992 401h0M1025 401h0M989 410h0M1029 409h0M1042 412h0M1022 418h0M1036 431h0M906 444h0M1056 452h0M1122 464h0M1022 472h0M1052 477h0M1106 485h0M858 492h0M1067 492h0M855 515h0M1199 513h0M939 519h0M1147 536h0M1210 536h0M1216 536h0M1148 540h0M1161 538h0M1189 540h0M929 544h0M1008 544h0M1227 543h0M1227 548h0M1223 555h0M1148 561h0M1233 560h0M973 573h0M1175 572h0M878 583h0M891 588h0M1204 590h0M954 595h0M1203 595h0M1098 597h0M1105 598h0M1149 600h0M1158 597h0M1203 604h0M939 607h0M1135 608h0M1156 608h0M1223 606h0M919 615h0M958 616h0M1174 616h0M1025 620h0M1162 619h0M1042 623h0M1001 627h0M1202 628h0M1211 628h0M1245 627h0M1055 636h0M1114 636h0M1181 635h0M1206 636h0M1042 640h0M1080 643h0M1153 643h0M1211 643h0M1249 645h0M1113 648h0M1199 649h0M1248 650h0M955 654h0M1052 651h0M1169 652h0M1246 651h0M987 656h0M992 657h0M1174 657h0M1219 657h0M1220 661h0M1118 665h0M1162 665h0M1203 667h0M1221 667h0M1035 669h0M1222 668h0M1168 672h0M1220 674h0M1182 679h0M998 681h0M977 686h0M979 687h0M1174 685h0M1224 688h0M1225 690h0M1026 695h0M1189 695h0M1215 695h0M997 699h0M1204 698h0M1238 699h0M1035 702h0M971 707h0M1177 709h0M1190 708h0M1216 708h0M1248 708h0M1017 711h0M1198 711h0M1023 717h0M1060 715h0M1066 716h0M1081 716h0M1138 715h0M1183 717h0M1218 715h0M1119 721h0M1124 720h0M1139 719h0M1162 720h0M933 725h0M964 725h0M839 730h0M1084 729h0M1019 732h0M1048 733h0M1132 734h0M892 738h0M1131 736h0M965 742h0M975 741h0M1014 740h0M1111 741h0M1122 741h0M878 747h0M923 745h0M997 745h0M1172 746h0M981 748h0M1024 748h0M1046 748h0M1125 751h0M1172 750h0M1214 749h0M1030 753h0M1194 753h0M1206 753h0M1150 757h0M1101 767h0M1182 767h0M1175 772h0M917 775h0M1018 776h0M1136 775h0M1189 776h0M1086 780h0M1170 778h0M1119 783h0M1132 787h0M1002 792h0M1147 790h0M1183 793h0M1023 795h0M1183 795h0M955 800h0M1153 801h0M1101 805h0M1144 810h0M1158 809h0M1019 815h0M1136 818h0M1069 821h0M1101 822h0M1141 820h0M1154 821h0M1106 825h0" stroke="#009fff" stroke-width="5" stroke-linecap="square"/><path d="M959 362h0M976 366h0M924 385h0M948 387h0M996 387h0M931 402h0M910 409h0M914 410h0M1014 408h0M874 423h0M842 425h0M855 426h0M916 431h0M1052 444h0M828 447h0M841 445h0M866 465h0M780 474h0M875 473h0M1068 472h0M700 478h0M879 484h0M730 490h0M855 494h0M1076 496h0M1088 496h0M729 510h0M856 511h0M899 508h0M942 509h0M833 522h0M1158 523h0M1185 532h0M1190 532h0M1224 538h0M1229 541h0M1002 545h0M832 548h0M788 551h0M879 553h0M870 561h0M1194 567h0M1216 570h0M1160 572h0M813 577h0M1189 578h0M1220 581h0M918 584h0M926 586h0M1164 586h0M733 594h0M1189 595h0M994 599h0M1119 599h0M1203 599h0M914 601h0M706 607h0M888 606h0M910 611h0M1212 612h0M1164 615h0M1183 616h0M1189 616h0M1177 619h0M1182 618h0M1214 620h0M776 623h0M1176 623h0M1224 622h0M1244 625h0M1236 628h0M1254 626h0M1156 633h0M1165 632h0M1195 631h0M1169 641h0M1157 644h0M1219 645h0M1163 650h0M1189 647h0M945 654h0M985 653h0M929 658h0M1157 657h0M1203 657h0M805 661h0M1156 661h0M1198 661h0M766 670h0M1178 669h0M1249 669h0M956 678h0M1215 678h0M1228 678h0M772 681h0M1006 684h0M1165 682h0M1233 681h0M879 685h0M1204 687h0M1000 689h0M1190 692h0M1010 693h0M1132 696h0M1253 693h0M948 699h0M1009 698h0M1019 700h0M1181 701h0M1233 698h0M1250 698h0M1031 709h0M1218 708h0M980 711h0M821 715h0M1085 717h0M1109 717h0M1191 717h0M892 730h0M933 727h0M967 729h0M1057 729h0M1056 732h0M1080 738h0M1106 737h0M1137 735h0M1231 746h0M1199 751h0M1146 757h0M1202 766h0M909 770h0M1199 782h0M1057 786h0M998 792h0M1130 792h0M1176 792h0M1001 795h0M997 810h0M1024 807h0M1005 816h0M1148 817h0M1147 821h0M1139 826h0" stroke="#0078ff" stroke-width="5" stroke-linecap="square"/><path d="M948 367h0M946 371h0M951 372h0M950 376h0M935 393h0M937 394h0M1018 402h0M984 425h0M913 447h0M918 447h0M1060 446h0M933 455h0M1011 458h0M893 467h0M1089 469h0M901 477h0M905 477h0M908 477h0M1085 476h0M900 481h0M947 482h0M1028 481h0M1095 481h0M1023 484h0M1111 485h0M1114 485h0M1080 489h0M951 493h0M1040 494h0M1026 503h0M1123 501h0M1145 502h0M968 505h0M1158 506h0M1124 511h0M1187 518h0M1143 524h0M976 528h0M1140 534h0M1175 536h0M993 538h0M1170 540h0M1191 545h0M1191 547h0M1221 547h0M1194 557h0M913 561h0M1124 562h0M1127 559h0M1120 564h0M1165 564h0M1187 564h0M1207 565h0M1237 566h0M962 568h0M1118 569h0M1179 577h0M1211 577h0M1021 583h0M1126 581h0M1130 586h0M1170 584h0M1134 589h0M1154 588h0M1017 595h0M1067 603h0M1011 607h0M1140 608h0M1190 611h0M1235 610h0M1206 614h0M1250 614h0M1061 620h0M1114 624h0M1149 625h0M1193 623h0M1004 636h0M1027 637h0M1035 638h0M1069 639h0M1204 640h0M1030 645h0M1061 645h0M1093 644h0M1057 650h0M1135 650h0M1147 647h0M1203 647h0M1120 656h0M1234 658h0M1001 664h0M1060 666h0M1018 669h0M1026 669h0M1123 670h0M1139 669h0M1143 679h0M1156 676h0M1035 687h0M1036 691h0M1126 690h0M1153 693h0M988 704h0M1139 707h0M1142 707h0M1234 707h0M925 716h0M1172 721h0M1177 719h0M951 724h0M1001 724h0M1157 725h0M1173 723h0M1230 723h0M959 727h0M1002 728h0M1052 728h0M1153 730h0M904 733h0M1206 732h0M1091 737h0M864 740h0M1139 740h0M1211 740h0M884 745h0M1028 745h0M1165 749h0M1097 755h0M1178 753h0M935 758h0M1094 757h0M1123 758h0M1061 761h0M1193 763h0M1216 762h0M922 765h0M994 766h0M1111 768h0M1113 765h0M1216 767h0M913 770h0M1057 770h0M969 773h0M987 780h0M1147 779h0M943 784h0M1161 785h0M1174 783h0M1110 788h0M1164 788h0M1186 786h0M938 792h0M960 793h0M979 798h0M1047 811h0" stroke="#00f2b4" stroke-width="7" stroke-linecap="square"/><path d="M949 366h0M959 379h0M967 380h0M953 384h0M941 389h0M992 387h0M921 398h0M922 400h0M926 401h0M980 410h0M985 417h0M968 420h0M1000 423h0M952 454h0M963 468h0M1017 473h0M1114 473h0M1137 474h0M1047 475h0M1095 476h0M947 484h0M1055 486h0M1061 484h0M945 489h0M976 490h0M1158 489h0M1158 497h0M1166 498h0M1001 501h0M1129 510h0M964 514h0M1208 515h0M1072 518h0M1191 519h0M926 522h0M1206 531h0M1214 531h0M992 536h0M916 538h0M952 540h0M1156 539h0M1186 540h0M1144 544h0M1019 547h0M1196 546h0M1206 550h0M1179 556h0M1214 558h0M1227 557h0M955 561h0M1141 561h0M1202 562h0M1139 564h0M1193 564h0M1131 568h0M1120 573h0M1137 578h0M1202 578h0M883 583h0M947 581h0M1137 580h0M1153 580h0M1126 586h0M1158 587h0M1145 589h0M1122 592h0M1131 594h0M1136 595h0M1143 594h0M1211 593h0M1164 599h0M1080 603h0M1174 603h0M1216 602h0M1202 607h0M1022 612h0M1050 611h0M1074 611h0M1087 612h0M1187 612h0M1225 611h0M1257 612h0M1078 616h0M1084 614h0M1099 614h0M1144 620h0M1157 620h0M1253 618h0M1259 620h0M1056 622h0M1202 623h0M1062 629h0M1111 629h0M1169 628h0M1055 632h0M1133 632h0M1147 633h0M1224 633h0M994 635h0M1073 636h0M1108 637h0M1191 636h0M1194 636h0M1194 641h0M1241 639h0M1244 640h0M1111 643h0M1143 643h0M1101 649h0M1211 649h0M1224 650h0M1043 651h0M1098 652h0M1224 652h0M1261 657h0M1107 662h0M1132 661h0M1135 661h0M1168 662h0M1025 665h0M1210 668h0M1109 674h0M1123 674h0M1158 674h0M1245 674h0M994 678h0M1131 682h0M1136 681h0M1140 681h0M1160 683h0M1189 681h0M1248 681h0M1110 685h0M1127 685h0M1144 694h0M1089 705h0M1161 703h0M1212 703h0M1228 702h0M1086 707h0M1148 708h0M1165 708h0M984 712h0M989 711h0M1051 711h0M1076 712h0M1081 713h0M1103 710h0M1150 713h0M917 715h0M1164 716h0M892 720h0M1000 719h0M1013 721h0M1043 719h0M1023 723h0M1235 725h0M1242 725h0M1179 727h0M863 733h0M866 733h0M888 734h0M908 732h0M1003 731h0M1143 734h0M1174 732h0M1177 731h0M858 736h0M990 737h0M1017 738h0M912 741h0M1214 742h0M1236 740h0M871 745h0M888 744h0M1055 746h0M1076 747h0M1211 746h0M1216 745h0M1223 744h0M876 755h0M1034 752h0M1076 752h0M1218 755h0M909 757h0M918 756h0M983 757h0M1089 757h0M1115 756h0M1126 759h0M1173 756h0M1199 756h0M1155 763h0M1186 761h0M1063 765h0M1175 766h0M903 771h0M917 772h0M952 770h0M1116 771h0M951 778h0M977 778h0M1124 779h0M1154 778h0M1210 778h0M1061 781h0M1145 783h0M1154 782h0M980 786h0M1023 788h0M1170 789h0M1189 788h0M967 790h0M1153 791h0M1186 793h0M960 801h0M1145 801h0M986 803h0M1174 802h0M1048 810h0M1130 809h0M1080 826h0M1116 828h0M1082 832h0" stroke="#00e5e9" stroke-width="6" stroke-linecap="square"/><path d="M958 368h0M960 388h0M976 398h0M1017 407h0M990 414h0M1078 436h0M892 440h0M1015 449h0M1061 452h0M1069 453h0M1052 467h0M946 478h0M1060 477h0M1138 477h0M1025 483h0M1097 485h0M926 489h0M1112 490h0M892 492h0M930 497h0M951 501h0M1162 500h0M1029 505h0M1126 505h0M910 509h0M993 515h0M1001 519h0M1196 527h0M1177 536h0M1135 539h0M1179 538h0M1174 548h0M958 552h0M1169 551h0M1193 551h0M1168 564h0M1154 570h0M1204 568h0M1002 578h0M1128 577h0M1086 587h0M1114 584h0M1145 585h0M1154 586h0M1235 586h0M1011 604h0M1152 607h0M1076 610h0M1132 611h0M1229 610h0M1022 614h0M1115 616h0M1076 619h0M1124 618h0M1137 619h0M1229 618h0M1151 622h0M1073 627h0M1098 628h0M1119 626h0M1132 636h0M1144 637h0M1204 637h0M994 645h0M1130 644h0M1140 643h0M1200 644h0M1026 654h0M1140 652h0M1018 658h0M1186 658h0M990 662h0M1145 660h0M1232 662h0M1089 666h0M1009 670h0M1149 668h0M1111 677h0M1249 677h0M1031 685h0M1161 685h0M1250 686h0M1162 692h0M1234 690h0M1237 690h0M1128 694h0M1157 695h0M1160 695h0M1118 698h0M1144 700h0M1048 708h0M1137 707h0M927 712h0M973 712h0M970 717h0M1052 715h0M1128 715h0M1245 716h0M1243 718h0M1028 726h0M900 730h0M1004 729h0M1164 729h0M1180 727h0M1203 728h0M1194 732h0M1219 732h0M854 737h0M880 738h0M885 742h0M888 740h0M910 743h0M1034 741h0M1203 742h0M927 746h0M1113 746h0M1152 745h0M1161 745h0M1187 746h0M1089 748h0M1204 749h0M888 757h0M914 759h0M980 757h0M1057 758h0M1171 759h0M1216 759h0M1131 762h0M1135 762h0M1175 762h0M1178 762h0M1206 761h0M1221 763h0M964 766h0M1001 768h0M1131 767h0M1191 771h0M1214 770h0M984 774h0M1031 776h0M1208 773h0M1215 774h0M976 782h0M1130 784h0M1156 783h0M1185 784h0M1063 787h0M1151 786h0M1034 791h0M1061 792h0M1189 790h0M960 797h0M976 797h0M1127 796h0M1114 801h0M1064 805h0M1024 821h0M1039 820h0" stroke="#00f2b4" stroke-width="6" stroke-linecap="square"/><path d="M964 368h0M930 371h0M984 377h0M951 388h0M938 401h0M1036 404h0M1027 409h0M901 418h0M1051 419h0M993 426h0M874 452h0M885 458h0M975 461h0M1068 469h0M891 480h0M864 486h0M1042 485h0M863 490h0M931 488h0M1069 489h0M1127 488h0M750 496h0M871 497h0M877 498h0M1051 497h0M1084 497h0M829 507h0M841 506h0M853 505h0M848 515h0M866 513h0M707 517h0M1199 520h0M840 523h0M850 523h0M853 522h0M864 523h0M859 526h0M862 528h0M1189 527h0M1219 531h0M654 542h0M656 543h0M1158 542h0M1231 545h0M874 546h0M1144 553h0M1215 553h0M1221 557h0M1136 561h0M1228 565h0M699 573h0M1213 572h0M1103 576h0M1186 578h0M1109 583h0M1208 586h0M1244 585h0M725 589h0M1173 593h0M1177 593h0M860 603h0M1110 601h0M1119 603h0M1131 603h0M741 605h0M1002 607h0M1212 607h0M986 610h0M1061 609h0M1163 611h0M1069 615h0M1185 614h0M1216 614h0M1048 619h0M1217 622h0M1254 623h0M927 626h0M1194 629h0M1200 628h0M1221 626h0M1223 626h0M908 631h0M1249 631h0M997 637h0M1098 634h0M1164 639h0M1173 639h0M1190 639h0M1256 639h0M917 649h0M1187 647h0M1178 651h0M1248 652h0M1162 658h0M1178 661h0M1185 662h0M780 669h0M792 670h0M1233 669h0M1234 675h0M1193 679h0M1235 678h0M1244 679h0M1244 683h0M972 694h0M1185 696h0M1199 696h0M1204 696h0M1191 698h0M1219 700h0M1241 698h0M1254 700h0M1220 703h0M1243 703h0M1157 708h0M930 713h0M1195 711h0M1225 711h0M878 717h0M1101 716h0M1196 716h0M901 721h0M1193 719h0M1197 720h0M1060 725h0M1099 724h0M842 729h0M1095 730h0M1127 727h0M1244 727h0M895 731h0M1070 733h0M1157 736h0M1008 740h0M1052 742h0M1076 740h0M1131 742h0M1227 741h0M1072 745h0M996 749h0M1014 753h0M1026 753h0M906 767h0M989 767h0M1141 766h0M1073 770h0M1203 771h0M1170 773h0M931 780h0M1173 778h0M1116 787h0M1201 787h0M990 791h0M994 793h0M1116 790h0M998 795h0M1156 796h0M1046 798h0M1101 800h0M1162 805h0M1004 812h0M1010 812h0M1122 820h0M1134 821h0M1137 828h0" stroke="#0078ff" stroke-width="6" stroke-linecap="square"/><path d="M973 366h0M935 389h0M971 388h0M926 405h0M994 404h0M904 430h0M885 440h0M937 438h0M948 440h0M1019 439h0M1047 444h0M1086 444h0M1056 445h0M889 454h0M1056 454h0M1090 465h0M1136 465h0M920 467h0M888 471h0M1076 484h0M1143 484h0M1042 489h0M1119 489h0M965 492h0M986 494h0M1047 493h0M1065 493h0M1175 495h0M1099 497h0M1103 498h0M1119 498h0M1175 496h0M1189 503h0M975 507h0M1148 505h0M1131 510h0M1114 517h0M1153 523h0M981 528h0M1185 526h0M1211 526h0M1165 530h0M1194 530h0M1197 536h0M877 541h0M977 539h0M1127 540h0M1216 538h0M1218 540h0M902 547h0M1208 547h0M1224 547h0M1183 553h0M1204 551h0M1119 556h0M1135 558h0M1139 557h0M1143 558h0M1185 555h0M974 559h0M935 570h0M1186 568h0M1186 572h0M1140 577h0M1232 577h0M1027 580h0M1134 587h0M1194 586h0M1155 591h0M1168 588h0M1208 590h0M1148 594h0M1153 594h0M1161 593h0M1206 594h0M1124 599h0M1174 598h0M1123 602h0M1176 603h0M1245 602h0M1065 606h0M1207 605h0M1179 611h0M1206 610h0M1233 611h0M1011 615h0M1151 614h0M1224 615h0M1050 620h0M1139 620h0M1170 620h0M1199 620h0M1202 621h0M1210 620h0M1240 621h0M910 623h0M1159 624h0M1237 625h0M986 628h0M1029 627h0M1139 628h0M1178 627h0M1042 631h0M1063 631h0M1111 633h0M1214 631h0M1047 635h0M1102 637h0M998 639h0M1248 639h0M1025 645h0M1042 650h0M1183 647h0M1239 650h0M956 655h0M1094 656h0M1126 658h0M1171 657h0M1240 657h0M1245 657h0M1256 656h0M1162 662h0M1063 666h0M1223 667h0M1171 669h0M1202 671h0M1001 673h0M1177 674h0M1200 674h0M1169 678h0M1189 678h0M1224 679h0M1005 687h0M1212 687h0M899 690h0M1166 691h0M1206 690h0M1252 690h0M975 695h0M1152 698h0M1172 699h0M1215 699h0M1224 700h0M1246 698h0M1078 704h0M1185 704h0M964 709h0M968 707h0M996 712h0M1005 712h0M1068 712h0M1221 712h0M979 715h0M1015 715h0M1017 716h0M1029 716h0M1145 714h0M1149 715h0M1168 716h0M969 721h0M1154 721h0M875 726h0M1048 724h0M1190 724h0M1193 723h0M871 729h0M1218 728h0M858 732h0M1153 733h0M896 738h0M1237 736h0M958 740h0M1134 742h0M1177 741h0M900 746h0M1195 746h0M926 749h0M1149 749h0M994 755h0M901 758h0M1005 759h0M1027 758h0M1165 756h0M1165 762h0M1169 762h0M1090 775h0M1093 774h0M1106 773h0M1122 775h0M1141 775h0M1143 775h0M935 780h0M992 778h0M1068 779h0M1128 780h0M1137 780h0M1207 778h0M930 782h0M951 782h0M994 787h0M1086 786h0M971 792h0M1173 790h0M1143 795h0M1090 801h0M1107 801h0M1151 803h0M1129 807h0M1164 808h0M1174 808h0M1071 813h0M1123 812h0M1128 811h0M1024 815h0M1115 816h0M999 822h0M1082 829h0M1052 838h0M1090 837h0" stroke="#00c8ff" stroke-width="6" stroke-linecap="square"/><path d="M910 373h0M920 380h0M782 411h0M822 409h0M862 412h0M822 416h0M854 417h0M757 431h0M817 438h0M846 439h0M857 447h0M754 452h0M762 455h0M777 455h0M782 457h0M866 457h0M727 469h0M708 478h0M715 477h0M767 477h0M744 479h0M822 479h0M691 486h0M742 486h0M821 484h0M729 492h0M783 492h0M737 498h0M687 511h0M695 527h0M795 526h0M833 532h0M662 535h0M719 536h0M763 543h0M679 549h0M681 546h0M771 549h0M661 555h0M709 555h0M724 555h0M795 556h0M787 567h0M681 573h0M707 576h0M711 577h0M769 578h0M828 578h0M710 590h0M750 591h0M792 589h0M687 595h0M695 594h0M825 594h0M854 594h0M695 597h0M802 599h0M733 604h0M702 605h0M858 605h0M858 616h0M698 619h0M706 620h0M799 619h0M695 625h0M792 623h0M868 624h0M943 623h0M721 627h0M730 627h0M895 633h0M698 646h0M792 645h0M917 658h0M787 660h0M889 666h0M753 675h0M779 679h0M930 677h0M1181 686h0M799 692h0M863 695h0M853 702h0M800 709h0M830 719h0M845 718h0M855 719h0M1070 727h0M1072 728h0M1090 727h0M1109 729h0" stroke="#1215ec" stroke-width="5" stroke-linecap="square"/><path d="M955 370h0M963 380h0M929 404h0M926 411h0M983 410h0M1048 410h0M896 430h0M1047 429h0M1055 439h0M900 442h0M967 444h0M1004 457h0M896 458h0M1086 460h0M977 464h0M1081 465h0M908 467h0M973 467h0M1076 467h0M951 473h0M921 480h0M1027 492h0M1087 492h0M943 501h0M961 503h0M1005 501h0M1087 506h0M990 511h0M871 514h0M941 515h0M1153 516h0M929 517h0M943 518h0M912 521h0M972 522h0M1161 524h0M1198 524h0M1168 528h0M1202 526h0M1132 530h0M1153 530h0M1203 532h0M1151 534h0M1160 534h0M1166 534h0M1187 534h0M1181 540h0M1197 540h0M881 543h0M968 545h0M1002 548h0M1147 549h0M1185 547h0M1203 549h0M1147 551h0M1206 555h0M1134 566h0M1144 564h0M1215 563h0M1135 567h0M1199 569h0M988 576h0M1144 579h0M1208 577h0M933 581h0M1000 582h0M1132 580h0M1160 581h0M1170 582h0M1244 583h0M1039 587h0M1112 585h0M1213 585h0M989 590h0M1243 589h0M1155 594h0M996 600h0M1145 598h0M1152 597h0M964 602h0M1106 603h0M1126 601h0M1169 602h0M1055 606h0M1176 606h0M943 611h0M1055 611h0M1110 611h0M913 616h0M1080 614h0M1144 615h0M1203 614h0M1057 620h0M1103 619h0M1109 619h0M1225 618h0M1129 623h0M1039 627h0M1042 626h0M1229 626h0M1255 632h0M1118 635h0M1174 636h0M1233 637h0M1239 636h0M1159 641h0M1233 640h0M1043 646h0M1066 645h0M1116 644h0M1195 644h0M1233 644h0M1238 643h0M1243 643h0M1253 648h0M1256 648h0M1147 654h0M1186 652h0M1204 652h0M1218 654h0M1236 653h0M1039 656h0M1102 657h0M1181 657h0M1206 663h0M1244 660h0M1256 662h0M993 664h0M1010 667h0M1067 665h0M1164 665h0M1000 669h0M1229 671h0M1253 673h0M942 679h0M1140 679h0M1257 677h0M899 685h0M1227 687h0M981 689h0M1210 691h0M1242 692h0M1107 699h0M1124 698h0M991 703h0M1123 703h0M1134 704h0M1151 705h0M1223 703h0M916 708h0M993 709h0M1161 709h0M1182 706h0M1186 708h0M1195 708h0M1212 707h0M1239 707h0M1243 709h0M1085 710h0M1170 712h0M904 715h0M967 716h0M1161 715h0M1214 715h0M1233 716h0M954 720h0M1181 720h0M1208 720h0M893 723h0M896 724h0M1015 723h0M1160 723h0M1245 723h0M846 728h0M922 730h0M847 733h0M989 733h0M996 731h0M1139 734h0M1157 732h0M1164 731h0M1183 732h0M1241 733h0M868 736h0M955 736h0M994 736h0M1097 737h0M1152 736h0M1173 737h0M857 740h0M876 741h0M1099 740h0M1153 740h0M1171 740h0M876 744h0M908 747h0M891 749h0M1030 749h0M1082 750h0M1159 750h0M1206 751h0M893 752h0M1082 754h0M1145 754h0M1162 754h0M1200 753h0M1008 758h0M1135 758h0M911 761h0M1161 761h0M1046 767h0M994 771h0M1021 772h0M1065 769h0M944 774h0M1147 776h0M1187 775h0M1139 778h0M1162 780h0M1202 779h0M939 782h0M1026 782h0M1136 783h0M941 786h0M951 786h0M1014 788h0M1135 786h0M1182 787h0M985 792h0M1055 794h0M1025 799h0M1169 798h0M1000 805h0M1135 804h0M1152 813h0M1156 811h0M1144 816h0M1152 816h0M1005 822h0M1018 820h0M1052 820h0M1078 820h0M1015 829h0M1067 829h0M1106 829h0M1122 829h0M1067 832h0M1103 837h0" stroke="#00c8ff" stroke-width="5" stroke-linecap="square"/><path d="M979 370h0M929 382h0M1004 385h0M833 404h0M904 406h0M767 414h0M889 414h0M774 418h0M891 418h0M865 421h0M901 422h0M867 427h0M858 433h0M749 439h0M852 449h0M790 460h0M825 460h0M817 468h0M702 477h0M731 477h0M745 476h0M826 476h0M990 481h0M750 486h0M779 483h0M804 489h0M825 489h0M709 492h0M739 498h0M803 497h0M762 501h0M728 505h0M857 515h0M795 519h0M860 518h0M691 522h0M721 524h0M740 521h0M771 523h0M690 525h0M777 530h0M783 536h0M786 534h0M863 534h0M704 541h0M707 539h0M724 539h0M766 539h0M717 543h0M704 548h0M717 547h0M760 548h0M765 549h0M866 552h0M872 553h0M745 556h0M774 565h0M721 570h0M817 567h0M1179 569h0M758 573h0M717 577h0M791 578h0M736 581h0M1194 582h0M654 587h0M683 584h0M727 585h0M658 588h0M683 591h0M808 594h0M682 603h0M685 603h0M767 602h0M866 603h0M766 605h0M807 606h0M679 616h0M681 616h0M793 613h0M808 614h0M792 619h0M867 619h0M686 622h0M704 624h0M708 623h0M685 628h0M689 628h0M703 628h0M920 629h0M935 628h0M724 635h0M832 637h0M963 637h0M792 639h0M820 641h0M703 645h0M880 643h0M963 646h0M841 652h0M727 658h0M765 658h0M783 656h0M828 662h0M832 660h0M1182 663h0M947 666h0M804 669h0M896 670h0M799 676h0M1201 679h0M828 681h0M846 682h0M927 683h0M782 685h0M825 686h0M1221 686h0M780 690h0M856 689h0M901 695h0M843 699h0M893 701h0M901 698h0M896 703h0M925 702h0M855 708h0M901 711h0M1098 717h0M842 719h0M1106 724h0" stroke="#0028ff" stroke-width="6" stroke-linecap="square"/><path d="M984 371h0M857 405h0M895 405h0M798 412h0M880 416h0M777 422h0M778 425h0M809 427h0M815 434h0M829 433h0M837 434h0M787 438h0M753 442h0M842 442h0M792 448h0M766 454h0M864 454h0M780 458h0M788 460h0M775 465h0M782 463h0M771 468h0M844 473h0M784 478h0M832 480h0M733 485h0M702 488h0M710 489h0M797 492h0M867 499h0M1093 496h0M695 507h0M716 504h0M741 504h0M717 509h0M742 511h0M778 510h0M799 511h0M816 510h0M820 511h0M685 513h0M702 515h0M780 516h0M727 518h0M746 518h0M756 523h0M802 523h0M698 528h0M692 532h0M762 531h0M696 534h0M717 534h0M820 536h0M896 535h0M664 538h0M698 541h0M728 539h0M750 538h0M830 541h0M766 543h0M862 544h0M1222 552h0M677 556h0M773 557h0M1153 562h0M717 564h0M719 564h0M777 564h0M820 565h0M1225 570h0M691 577h0M732 578h0M780 578h0M821 576h0M825 577h0M1161 576h0M664 582h0M685 581h0M698 581h0M774 580h0M847 582h0M724 584h0M654 591h0M794 589h0M824 591h0M660 593h0M792 598h0M672 602h0M824 603h0M718 605h0M673 612h0M696 609h0M914 611h0M670 617h0M693 620h0M734 620h0M833 619h0M857 621h0M780 627h0M770 633h0M796 630h0M825 633h0M914 632h0M917 631h0M721 639h0M729 651h0M758 653h0M822 651h0M832 654h0M763 657h0M771 658h0M786 658h0M947 662h0M975 662h0M881 670h0M830 675h0M833 682h0M884 684h0M950 682h0M1198 681h0M946 688h0M832 691h0M845 695h0M849 697h0M884 702h0M914 702h0M981 704h0M849 706h0M977 707h0M1094 712h0M1231 712h0M1111 719h0M988 727h0M1106 729h0M1110 732h0M984 742h0M1014 746h0M990 748h0M1009 752h0M1160 801h0" stroke="#0028ff" stroke-width="5" stroke-linecap="square"/><path d="M923 375h0M691 489h0M812 564h0M891 618h0M870 711h0" stroke="#4600b9" stroke-width="7" stroke-linecap="square"/><path d="M926 375h0M730 623h0M939 663h0" stroke="#4600b9" stroke-width="6" stroke-linecap="square"/><path d="M934 377h0M906 400h0M800 406h0M801 408h0M832 410h0M829 421h0M784 427h0M783 430h0M866 431h0M769 435h0M746 438h0M859 439h0M738 442h0M773 444h0M816 451h0M721 455h0M740 456h0M825 456h0M839 456h0M752 459h0M816 461h0M830 458h0M801 467h0M834 476h0M859 477h0M821 488h0M685 496h0M796 502h0M782 507h0M774 510h0M682 514h0M746 513h0M770 516h0M640 520h0M773 522h0M782 524h0M711 526h0M698 529h0M704 531h0M706 533h0M724 531h0M686 534h0M675 539h0M748 544h0M757 544h0M690 548h0M708 549h0M700 554h0M774 552h0M680 561h0M727 561h0M686 565h0M766 564h0M836 564h0M708 569h0M716 568h0M830 570h0M840 569h0M767 578h0M841 576h0M868 578h0M684 583h0M858 580h0M714 586h0M694 589h0M717 589h0M746 591h0M859 590h0M755 593h0M709 599h0M691 602h0M899 602h0M691 608h0M787 607h0M813 608h0M754 610h0M759 610h0M927 612h0M747 614h0M813 615h0M870 623h0M703 635h0M741 636h0M771 637h0M807 646h0M721 647h0M865 648h0M940 647h0M719 654h0M779 654h0M859 657h0M859 660h0M750 665h0M843 664h0M976 666h0M749 671h0M820 674h0M757 677h0M1011 691h0M964 696h0M798 699h0M998 704h0M806 706h0M855 712h0M862 710h0" stroke="#1215ec" stroke-width="7" stroke-linecap="square"/><path d="M947 374h0M964 385h0M997 391h0M972 409h0M990 417h0M975 423h0M913 425h0M954 431h0M1017 452h0M956 463h0M1145 499h0M1062 502h0M1137 506h0M1161 506h0M1124 515h0M1127 521h0M1148 524h0M1181 527h0M1181 530h0M979 544h0M1162 551h0M983 557h0M1212 557h0M917 559h0M1188 560h0M1198 559h0M980 564h0M951 576h0M1119 582h0M1196 591h0M1009 596h0M1069 607h0M1093 618h0M1089 625h0M1077 627h0M1189 629h0M1122 631h0M1127 635h0M1141 637h0M1093 640h0M1229 647h0M1145 651h0M1109 662h0M1005 666h0M1140 665h0M1045 669h0M1017 674h0M1152 677h0M1107 686h0M1140 687h0M1133 691h0M1147 690h0M1040 698h0M1137 699h0M1144 703h0M950 710h0M884 721h0M1007 720h0M1209 727h0M1231 727h0M938 734h0M1005 733h0M1210 732h0M1216 734h0M1032 737h0M1177 738h0M1203 736h0M893 741h0M935 740h0M1099 746h0M1106 744h0M1141 744h0M935 753h0M1114 754h0M1186 752h0M1046 756h0M1096 757h0M1219 759h0M942 760h0M1212 762h0M917 765h0M949 766h0M1015 768h0M1135 767h0M1002 769h0M1211 771h0M1157 776h0M980 779h0M1123 786h0M944 793h0M1122 797h0M1033 799h0M1025 820h0M1044 836h0" stroke="#00ff80" stroke-width="6" stroke-linecap="square"/><path d="M969 375h0M950 380h0M1004 392h0M954 406h0M939 418h0M917 422h0M985 420h0M1072 429h0M1072 433h0M940 455h0M955 460h0M903 464h0M1131 465h0M1143 467h0M1019 480h0M1089 481h0M1093 483h0M1158 484h0M992 493h0M1109 494h0M1149 494h0M1107 497h0M1017 501h0M1130 501h0M1169 500h0M1174 502h0M888 507h0M950 505h0M1141 507h0M1144 506h0M1130 515h0M896 520h0M1147 518h0M1216 522h0M1135 527h0M1128 530h0M1135 532h0M1175 530h0M1114 534h0M1183 537h0M1132 540h0M1140 542h0M921 546h0M1169 549h0M947 553h0M1017 550h0M1166 553h0M1228 552h0M1170 556h0M1162 560h0M1166 559h0M1168 559h0M945 564h0M1162 565h0M1192 565h0M1203 566h0M1149 570h0M951 573h0M1202 573h0M948 579h0M1119 578h0M1149 577h0M889 582h0M1124 587h0M1034 590h0M1127 595h0M1139 593h0M1198 594h0M1015 597h0M1083 598h0M1013 601h0M1183 604h0M1146 606h0M1149 606h0M1005 615h0M1063 614h0M1124 622h0M1187 622h0M1191 623h0M1084 628h0M1078 632h0M1136 631h0M1186 631h0M1220 631h0M1010 635h0M1208 640h0M1122 644h0M1203 645h0M1089 650h0M1261 648h0M1049 652h0M1262 654h0M1046 657h0M1086 658h0M1003 661h0M1140 662h0M1228 662h0M1129 666h0M1235 665h0M1136 669h0M1009 673h0M1003 678h0M1011 677h0M1131 676h0M1111 683h0M1143 682h0M1060 685h0M1151 687h0M1166 687h0M1252 688h0M1039 695h0M1220 695h0M1156 698h0M1231 703h0M1110 707h0M1119 708h0M922 711h0M946 711h0M1244 712h0M908 716h0M975 717h0M1122 715h0M1167 720h0M1168 720h0M1202 720h0M1241 722h0M976 723h0M1216 724h0M905 728h0M1131 727h0M1156 729h0M1185 728h0M1212 727h0M1229 731h0M1139 735h0M868 741h0M899 740h0M1165 742h0M1220 741h0M896 744h0M945 750h0M1142 750h0M1185 749h0M1219 750h0M939 754h0M951 753h0M1191 754h0M941 758h0M977 757h0M1043 759h0M1194 758h0M893 763h0M923 761h0M933 763h0M1002 761h0M1097 760h0M1153 764h0M1006 765h0M1185 768h0M1219 766h0M967 770h0M996 771h0M1130 770h0M1160 772h0M1187 769h0M1200 774h0M1005 779h0M946 783h0M1149 782h0M1126 786h0M948 792h0M975 793h0M1165 792h0M1052 795h0M1106 796h0M1148 795h0M968 799h0M1174 798h0M1148 802h0M1178 803h0M1028 808h0M1097 816h0M1035 821h0M1064 822h0M1002 824h0" stroke="#00f2b4" stroke-width="5" stroke-linecap="square"/><path d="M931 381h0M840 404h0M828 414h0M825 416h0M825 444h0M740 459h0M758 459h0M708 480h0M703 506h0M821 552h0M665 565h0M734 563h0M651 567h0M670 569h0M776 567h0M804 568h0M851 569h0M711 574h0M729 574h0M826 574h0M859 585h0M653 598h0M757 599h0M925 606h0M830 619h0M934 631h0M905 640h0M777 644h0M942 665h0M816 691h0M845 699h0M875 704h0M878 707h0M1122 736h0" stroke="#2a07d5" stroke-width="5" stroke-linecap="square"/><path d="M938 380h0M946 385h0M929 397h0M1001 398h0M912 400h0M997 400h0M1010 399h0M986 406h0M1055 415h0M1026 421h0M1030 422h0M893 425h0M1028 426h0M1045 426h0M1080 431h0M1051 434h0M1086 452h0M1036 481h0M1070 480h0M1147 481h0M1161 480h0M871 490h0M970 490h0M1149 490h0M852 493h0M854 498h0M923 503h0M1179 502h0M675 506h0M859 506h0M991 505h0M1177 507h0M1182 505h0M967 511h0M1169 509h0M1176 510h0M1195 511h0M1139 515h0M847 519h0M887 518h0M1162 531h0M1145 536h0M1206 535h0M973 540h0M1201 540h0M1164 542h0M1175 543h0M1204 544h0M1165 548h0M1137 553h0M1182 556h0M1233 555h0M1157 563h0M1223 566h0M1141 568h0M1169 573h0M1189 573h0M1198 572h0M1153 579h0M1176 580h0M975 585h0M1175 587h0M1186 585h0M1115 591h0M900 594h0M1112 594h0M1131 599h0M1207 597h0M1245 597h0M938 601h0M996 601h0M1103 602h0M1149 602h0M1151 602h0M1158 602h0M1088 605h0M1130 605h0M1174 605h0M1156 612h0M994 616h0M1052 616h0M1160 616h0M948 618h0M1045 620h0M1192 618h0M1195 621h0M1027 624h0M1072 622h0M1232 624h0M1063 627h0M1070 627h0M1160 628h0M1181 633h0M1229 631h0M1246 631h0M1044 637h0M1147 636h0M1219 637h0M1248 635h0M1257 636h0M931 642h0M1049 640h0M1157 639h0M1174 645h0M1185 645h0M1252 645h0M1013 647h0M1174 647h0M1235 650h0M1094 654h0M1181 651h0M1012 665h0M1183 667h0M933 670h0M1160 671h0M1253 668h0M1031 675h0M969 677h0M1239 682h0M888 686h0M1196 687h0M885 691h0M989 692h0M1220 691h0M1257 691h0M1207 694h0M1241 696h0M984 698h0M988 698h0M1170 700h0M1018 705h0M1157 705h0M1164 703h0M1241 704h0M1248 703h0M942 706h0M1097 708h0M1202 707h0M885 713h0M1059 712h0M1178 711h0M1207 711h0M1213 711h0M1249 711h0M941 716h0M983 716h0M1007 715h0M1228 717h0M984 722h0M1086 719h0M1115 719h0M993 724h0M1219 726h0M865 730h0M976 727h0M1013 729h0M1044 728h0M1118 729h0M981 732h0M994 731h0M1101 732h0M1119 731h0M1046 735h0M1162 736h0M1166 738h0M1231 738h0M990 740h0M1045 740h0M1069 740h0M1149 742h0M1131 746h0M1169 745h0M1183 747h0M1210 749h0M1001 754h0M1152 754h0M1171 754h0M1153 758h0M900 762h0M1009 761h0M983 768h0M1144 771h0M1177 771h0M1206 771h0M911 776h0M1011 778h0M1023 780h0M1144 780h0M954 784h0M1139 781h0M1196 782h0M1026 788h0M1077 786h0M1141 787h0M1136 793h0M1170 791h0M947 796h0M987 795h0M1023 799h0M1006 805h0M1170 803h0M1116 809h0M1119 808h0M1147 808h0M1161 812h0M1165 814h0M1127 820h0M1133 825h0M1135 824h0M1048 828h0M1103 830h0" stroke="#009fff" stroke-width="7" stroke-linecap="square"/><path d="M973 381h0M971 386h0M962 408h0M1022 448h0M1026 461h0M1139 472h0M1149 474h0M1044 476h0M940 494h0M1059 493h0M960 496h0M1133 524h0M1130 547h0M1105 558h0M1172 557h0M1189 557h0M1210 560h0M1160 569h0M1235 569h0M955 576h0M1091 593h0M1093 595h0M1096 594h0M1139 609h0M1143 612h0M1127 615h0M1140 614h0M1228 616h0M1258 615h0M1120 620h0M1082 624h0M1097 623h0M1101 626h0M1105 626h0M1124 626h0M1129 628h0M1137 635h0M1111 639h0M1061 652h0M1145 666h0M1014 671h0M1023 669h0M1261 671h0M1015 674h0M1149 675h0M1252 679h0M1156 681h0M1237 686h0M1077 691h0M1060 700h0M1044 707h0M1233 721h0M1170 725h0M1169 730h0M1198 728h0M1198 732h0M1201 733h0M1224 731h0M901 736h0M1093 743h0M1206 741h0M943 744h0M1086 744h0M1155 745h0M1110 749h0M1191 750h0M930 755h0M1139 753h0M1175 755h0M879 757h0M892 759h0M1064 757h0M1057 761h0M1192 761h0M972 767h0M1057 765h0M1160 767h0M1010 769h0M1153 775h0M1157 788h0M1094 791h0M962 794h0M1062 803h0M969 807h0M980 815h0M1057 822h0M1043 834h0M1078 838h0" stroke="#00ff80" stroke-width="5" stroke-linecap="square"/><path d="M994 380h0M983 384h0M955 390h0M926 398h0M945 411h0M971 421h0M942 427h0M1078 430h0M1065 435h0M959 461h0M1130 461h0M985 471h0M1027 471h0M950 475h0M1144 478h0M1153 475h0M1157 476h0M1001 480h0M955 488h0M1001 489h0M1105 488h0M967 493h0M1056 493h0M1160 498h0M1168 497h0M929 507h0M934 506h0M1122 505h0M1152 505h0M1137 515h0M1144 515h0M943 524h0M1141 523h0M1180 524h0M1151 528h0M1175 525h0M892 529h0M1195 536h0M1194 539h0M1018 545h0M1123 543h0M1223 544h0M949 547h0M973 548h0M1123 549h0M1128 548h0M1158 549h0M1185 551h0M1192 553h0M1161 555h0M944 560h0M1227 561h0M1132 565h0M1153 566h0M1113 568h0M1156 567h0M1207 569h0M916 574h0M1147 574h0M1181 572h0M910 581h0M992 583h0M1124 580h0M1210 581h0M1231 581h0M1141 587h0M1082 590h0M1117 590h0M1170 597h0M1199 598h0M1065 603h0M1145 603h0M1162 601h0M1098 612h0M1149 612h0M1246 612h0M1168 616h0M1090 618h0M1148 618h0M1152 619h0M1231 618h0M1174 628h0M1046 631h0M1170 630h0M1064 637h0M1065 639h0M1001 645h0M1097 644h0M1107 643h0M1147 644h0M1110 648h0M1018 653h0M1109 654h0M1208 652h0M1227 652h0M1257 653h0M1099 658h0M1026 662h0M1086 661h0M1166 663h0M1214 661h0M997 666h0M1020 667h0M1148 664h0M1172 666h0M1212 665h0M1242 664h0M1173 668h0M1208 668h0M985 673h0M1159 675h0M1212 673h0M1160 679h0M1128 684h0M1153 683h0M1232 687h0M1118 691h0M1158 691h0M1050 695h0M1194 694h0M1211 694h0M1244 694h0M1107 705h0M1010 707h0M1089 706h0M1151 707h0M960 711h0M968 711h0M1008 710h0M1073 711h0M1240 712h0M959 714h0M1045 716h0M1055 717h0M1118 717h0M925 719h0M1048 719h0M1057 719h0M1157 721h0M969 723h0M1183 724h0M1185 724h0M1198 725h0M1190 732h0M1237 733h0M1039 735h0M1183 738h0M1185 738h0M998 741h0M1017 740h0M1026 743h0M1115 741h0M867 745h0M930 747h0M1039 745h0M1080 744h0M1136 745h0M1144 745h0M1149 745h0M1200 745h0M887 750h0M964 751h0M1065 750h0M977 755h0M1103 753h0M1123 752h0M1191 758h0M989 761h0M1107 761h0M1128 767h0M1190 768h0M960 770h0M964 770h0M988 771h0M1017 771h0M1085 771h0M1097 769h0M950 773h0M1000 774h0M1116 773h0M1077 778h0M1115 779h0M1164 780h0M1124 783h0M1164 783h0M1179 783h0M972 788h0M983 786h0M951 793h0M1139 792h0M1144 793h0M1199 790h0M1186 795h0M971 799h0M1109 800h0M1131 800h0M1177 800h0M958 804h0M965 805h0M1081 809h0M1101 808h0M1060 813h0M1158 815h0M1112 828h0M1119 830h0M1127 830h0M1114 834h0" stroke="#00e5e9" stroke-width="7" stroke-linecap="square"/><path d="M900 402h0M809 406h0M854 410h0M865 409h0M824 422h0M773 427h0M871 457h0M744 460h0M720 463h0M715 469h0M748 466h0M750 488h0M818 489h0M783 498h0M661 502h0M708 502h0M711 503h0M762 507h0M770 510h0M773 516h0M736 524h0M801 522h0M669 526h0M704 528h0M783 526h0M687 530h0M824 530h0M806 535h0M795 543h0M721 548h0M690 557h0M824 556h0M842 555h0M681 563h0M692 563h0M706 564h0M739 564h0M833 564h0M728 570h0M738 568h0M761 569h0M690 573h0M725 574h0M833 572h0M694 578h0M660 581h0M694 581h0M820 581h0M809 586h0M862 586h0M855 590h0M720 594h0M805 595h0M862 593h0M888 594h0M715 597h0M774 599h0M845 604h0M660 606h0M790 607h0M715 611h0M730 609h0M731 612h0M830 614h0M851 614h0M841 620h0M829 624h0M958 622h0M973 624h0M859 627h0M782 632h0M880 633h0M697 636h0M913 635h0M947 635h0M876 640h0M707 646h0M774 645h0M786 644h0M805 645h0M941 650h0M733 654h0M821 658h0M761 661h0M741 665h0M841 672h0M1210 680h0M774 685h0M950 685h0M1014 687h0M1178 686h0M798 695h0M850 695h0M820 700h0M876 711h0M1067 725h0M1102 723h0M1109 723h0M1064 730h0M1014 812h0" stroke="#1215ec" stroke-width="6" stroke-linecap="square"/><path d="M989 401h0M1033 402h0M796 422h0M870 422h0M750 431h0M823 431h0M1013 431h0M1006 433h0M809 452h0M841 452h0M804 455h0M832 460h0M1038 467h0M955 472h0M873 476h0M824 479h0M1053 480h0M1055 480h0M765 485h0M706 490h0M716 488h0M1166 488h0M1174 490h0M1178 488h0M685 492h0M847 492h0M1161 492h0M794 499h0M737 501h0M790 503h0M845 507h0M1195 506h0M755 511h0M797 511h0M842 510h0M840 518h0M862 518h0M810 521h0M1172 524h0M766 532h0M841 531h0M847 531h0M842 535h0M653 539h0M1002 540h0M700 549h0M778 550h0M1211 553h0M787 556h0M868 558h0M735 559h0M788 561h0M751 564h0M955 566h0M822 569h0M1227 568h0M809 573h0M661 576h0M741 579h0M751 578h0M1165 583h0M1182 586h0M1200 586h0M1204 585h0M721 589h0M727 590h0M772 589h0M665 595h0M865 595h0M938 593h0M942 593h0M1222 594h0M741 600h0M854 597h0M1114 599h0M737 601h0M866 607h0M879 605h0M1004 607h0M1220 607h0M683 612h0M867 616h0M952 615h0M941 619h0M960 620h0M801 622h0M1070 625h0M746 627h0M750 629h0M875 628h0M1203 631h0M729 637h0M1164 635h0M728 641h0M1187 640h0M736 644h0M1189 645h0M867 656h0M948 658h0M943 660h0M979 662h0M1122 665h0M783 669h0M1165 670h0M1195 672h0M1212 682h0M868 686h0M1010 685h0M889 689h0M1216 689h0M777 695h0M838 694h0M918 695h0M1004 694h0M1229 693h0M830 698h0M1025 700h0M1001 704h0M1253 702h0M1065 720h0M1103 719h0M1120 723h0M1084 734h0M1059 741h0M1231 742h0M990 747h0M1043 745h0M1123 744h0M1143 766h0M1052 778h0M990 787h0M1165 800h0M1164 804h0M997 813h0M998 817h0M1009 816h0" stroke="#0050ff" stroke-width="6" stroke-linecap="square"/><path d="M845 406h0M822 415h0M833 432h0M831 442h0M819 455h0M803 477h0M698 503h0M715 515h0M714 528h0M783 530h0M754 538h0M780 544h0M686 548h0M795 552h0M685 561h0M725 569h0M731 568h0M809 570h0M830 572h0M804 576h0M851 582h0M805 591h0M845 589h0M801 593h0M761 603h0M669 610h0M692 623h0M715 633h0M738 631h0M859 637h0M920 639h0M782 644h0M897 658h0M914 695h0" stroke="#2a07d5" stroke-width="7" stroke-linecap="square"/><path d="M934 406h0M968 448h0M927 456h0M1089 477h0M1028 489h0M897 494h0M1034 499h0M1126 497h0M1137 503h0M893 507h0M1208 520h0M921 530h0M1119 532h0M1156 535h0M925 540h0M1130 543h0M1137 546h0M976 552h0M1155 553h0M1198 553h0M1190 560h0M1214 560h0M972 568h0M1116 577h0M1148 580h0M1148 585h0M1149 588h0M1195 605h0M1198 607h0M1232 608h0M1118 612h0M1136 612h0M1077 624h0M1101 623h0M1082 627h0M1094 627h0M1009 632h0M1086 631h0M1091 631h0M1143 633h0M1094 637h0M1207 645h0M1060 650h0M1208 647h0M1052 658h0M1005 662h0M1051 662h0M1148 662h0M1076 665h0M1259 671h0M1025 673h0M1152 674h0M1013 678h0M1010 681h0M1143 685h0M1027 691h0M1057 699h0M1139 698h0M1131 711h0M1005 725h0M1148 729h0M1031 731h0M1025 738h0M1215 737h0M1221 737h0M917 746h0M939 745h0M1218 746h0M930 751h0M1137 749h0M1139 751h0M1092 755h0M1130 754h0M1182 755h0M1050 756h0M1207 757h0M983 761h0M1040 763h0M1195 767h0M1212 766h0M1102 775h0M1194 778h0M927 784h0M1107 791h0M1195 792h0M1022 832h0" stroke="#00ff80" stroke-width="7" stroke-linecap="square"/><path d="M970 406h0M959 410h0M1071 439h0M1152 498h0M973 503h0M1130 517h0M1139 526h0M1148 526h0M1179 528h0M1018 555h0M1173 560h0M1127 572h0M1244 618h0M1091 629h0M1006 639h0M1130 640h0M1198 640h0M1137 644h0M1144 647h0M1014 656h0M1099 662h0M1252 681h0M1044 703h0M943 736h0M972 746h0M1095 746h0M1207 745h0M1133 756h0M1204 759h0M948 768h0M1157 766h0M1157 770h0M973 774h0M1052 800h0M1119 800h0M973 813h0M1108 816h0" stroke="#27ff4a" stroke-width="6" stroke-linecap="square"/><path d="M892 414h0M874 418h0M754 449h0M732 465h0M704 501h0M770 505h0M731 523h0M707 526h0M759 536h0M719 539h0M689 561h0M710 562h0M742 560h0M820 561h0M854 582h0M815 585h0M849 591h0M946 599h0M748 603h0M724 608h0M737 612h0M816 616h0M821 615h0M832 624h0M885 625h0M954 624h0M769 640h0M730 660h0M963 667h0M815 683h0M855 684h0M853 687h0" stroke="#2a07d5" stroke-width="6" stroke-linecap="square"/><path d="M889 419h0M759 426h0M790 426h0M946 425h0M867 436h0M759 443h0M809 444h0M813 448h0M849 458h0M836 463h0M725 468h0M732 469h0M719 471h0M740 473h0M771 477h0M829 482h0M998 480h0M835 486h0M700 490h0M745 489h0M916 488h0M692 493h0M712 498h0M715 497h0M719 497h0M859 498h0M1082 497h0M731 501h0M740 503h0M723 511h0M860 511h0M1161 510h0M725 513h0M845 513h0M978 513h0M786 518h0M715 524h0M986 522h0M1219 528h0M859 532h0M862 532h0M867 531h0M871 540h0M792 544h0M1182 544h0M782 549h0M758 557h0M732 560h0M770 561h0M763 563h0M746 569h0M921 568h0M788 578h0M1166 577h0M1221 577h0M706 582h0M824 583h0M872 581h0M925 581h0M763 591h0M879 591h0M725 594h0M946 596h0M908 598h0M971 600h0M741 610h0M745 611h0M870 611h0M1221 611h0M1253 611h0M804 619h0M1220 618h0M737 624h0M742 623h0M1065 622h0M716 628h0M843 632h0M1206 632h0M917 635h0M1252 635h0M732 641h0M737 639h0M915 640h0M1101 639h0M1224 640h0M838 643h0M847 643h0M859 646h0M761 648h0M1156 648h0M1161 650h0M825 654h0M845 654h0M1157 652h0M792 661h0M811 661h0M870 661h0M1190 664h0M771 671h0M921 668h0M977 669h0M977 675h0M958 678h0M1233 678h0M877 685h0M1018 687h0M783 691h0M1023 692h0M1177 690h0M1001 694h0M1013 695h0M1023 694h0M1231 695h0M1004 698h0M1024 700h0M880 702h0M1204 702h0M996 707h0M1174 707h0M1227 712h0M870 717h0M1094 715h0M1157 715h0M1197 717h0M838 721h0M994 719h0M1069 720h0M1107 721h0M1189 719h0M990 725h0M1065 723h0M843 734h0M1097 734h0M976 737h0M1060 737h0M1126 738h0M1005 747h0M1007 749h0M1229 748h0M1174 776h0M1010 793h0M1004 795h0M1157 799h0M1000 811h0M1010 826h0" stroke="#0050ff" stroke-width="7" stroke-linecap="square"/><path d="M1018 456h0M1123 532h0M1141 632h0M1140 695h0M981 761h0" stroke="#50ff15" stroke-width="5" stroke-linecap="square"/><path d="M1068 454h0M1126 527h0M1145 531h0M1136 543h0M901 581h0M996 582h0M901 585h0M1099 586h0M1126 619h0M1164 625h0M1189 630h0M1140 650h0M1097 665h0M1148 683h0M1143 691h0M1046 703h0M1124 712h0M1195 728h0M914 745h0M1051 754h0M1109 753h0M946 758h0" stroke="#27ff4a" stroke-width="7" stroke-linecap="square"/><path d="M1053 463h0M1124 528h0M1084 647h0M1044 690h0M1211 737h0" stroke="#50ff15" stroke-width="6" stroke-linecap="square"/><path d="M1155 480h0M892 515h0M1134 519h0M1148 530h0M926 560h0M1196 562h0M1165 569h0M1131 616h0M1116 618h0M1085 624h0M1126 632h0M1122 635h0M1139 640h0M1134 673h0M1147 679h0M1139 691h0M1068 696h0M1029 730h0M1172 729h0M892 746h0M885 759h0M1204 761h0M1006 776h0M1157 778h0M967 796h0M1060 826h0" stroke="#27ff4a" stroke-width="5" stroke-linecap="square"/><path d="M761 519h0M732 574h0M854 572h0M797 603h0M888 615h0M901 658h0M1076 727h0" stroke="#4600b9" stroke-width="5" stroke-linecap="square"/><path d="M1145 528h0" stroke="#87ff00" stroke-width="5" stroke-linecap="square"/><path d="M1124 565h0" stroke="#87ff00" stroke-width="7" stroke-linecap="square"/><path d="M667 590h0M765 641h0M731 665h0" stroke="#690094" stroke-width="6" stroke-linecap="square"/><path d="M920 610h0" stroke="#690094" stroke-width="5" stroke-linecap="square"/><path d="M980 376h0M993 395h0M1004 402h0M1030 400h0M934 409h0M938 409h0M1000 416h0M904 420h0M1035 422h0M788 427h0M1047 426h0M1053 427h0M796 430h0M926 431h0M934 429h0M1065 431h0M824 435h0M880 435h0M893 435h0M899 434h0M910 433h0M937 434h0M1081 435h0M779 439h0M796 439h0M912 439h0M967 439h0M917 442h0M1005 444h0M759 446h0M763 448h0M872 446h0M884 448h0M897 447h0M930 448h0M1090 447h0M823 452h0M879 450h0M1103 451h0M796 455h0M885 457h0M921 454h0M941 455h0M872 458h0M930 459h0M944 461h0M1124 458h0M1126 461h0M887 463h0M943 463h0M994 464h0M1106 464h0M866 468h0M985 469h0M793 473h0M884 473h0M899 472h0M998 473h0M1004 471h0M1142 472h0M961 477h0M964 476h0M1012 477h0M881 481h0M895 479h0M978 482h0M980 480h0M1032 480h0M793 486h0M805 486h0M893 485h0M897 485h0M929 484h0M943 485h0M1138 485h0M1019 490h0M1130 490h0M1135 489h0M1153 490h0M766 495h0M870 493h0M889 492h0M960 492h0M1015 494h0M1157 494h0M787 497h0M882 499h0M1019 496h0M821 501h0M892 502h0M899 502h0M947 501h0M1010 503h0M1034 503h0M904 505h0M1012 507h0M1019 506h0M1111 505h0M1191 507h0M979 510h0M985 509h0M1199 509h0M885 515h0M1019 516h0M1165 513h0M1204 515h0M884 518h0M998 519h0M1156 517h0M880 522h0M997 523h0M1207 524h0M1005 528h0M870 535h0M882 535h0M941 537h0M1002 536h0M912 538h0M923 538h0M943 541h0M893 543h0M912 544h0M934 545h0M891 549h0M908 547h0M914 547h0M946 547h0M956 549h0M1198 549h0M940 551h0M972 551h0M942 557h0M880 560h0M947 561h0M891 565h0M910 563h0M887 568h0M947 568h0M899 574h0M931 573h0M977 574h0M880 577h0M892 576h0M918 578h0M959 579h0M966 577h0M1175 576h0M905 582h0M956 581h0M892 586h0M896 585h0M910 591h0M973 589h0M977 590h0M1224 591h0M989 594h0M1005 594h0M1013 593h0M1236 595h0M1004 598h0M988 607h0M993 607h0M1001 610h0M1003 619h0M1007 620h0M1030 621h0M1239 624h0M1027 626h0M997 633h0M1001 631h0M1210 632h0M1030 634h0M1216 636h0M1078 642h0M1114 641h0M1021 643h0M1052 644h0M1068 646h0M1009 647h0M1055 656h0M1130 656h0M734 661h0M1046 663h0M1077 662h0M1036 665h0M1042 665h0M1006 671h0M1030 671h0M1047 669h0M1098 670h0M1218 671h0M1246 670h0M1043 672h0M1097 674h0M754 679h0M1005 677h0M1027 678h0M1034 679h0M1046 677h0M1056 679h0M1077 679h0M1070 683h0M1072 683h0M1085 683h0M1174 681h0M1187 684h0M1047 687h0M1055 688h0M1124 686h0M1245 687h0M1256 685h0M1063 691h0M1090 691h0M1195 689h0M1103 694h0M1119 694h0M1048 700h0M1063 699h0M1089 698h0M1116 700h0M1068 704h0M988 709h0M1057 709h0M1073 706h0M1034 710h0M1156 713h0M896 717h0M938 716h0M1028 715h0M1039 715h0M1202 717h0M888 721h0M914 719h0M912 724h0M939 726h0M1177 725h0M879 729h0M955 728h0M1027 728h0M1035 729h0M1052 732h0M1059 733h0M946 738h0M1042 737h0M870 740h0M945 745h0M958 746h0M968 746h0M1018 744h0M1118 746h0M897 749h0M906 748h0M967 750h0M1056 749h0M1086 749h0M1042 753h0M1055 753h0M1067 754h0M1089 754h0M1157 754h0M921 757h0M929 759h0M938 758h0M968 758h0M1017 758h0M1087 757h0M1100 759h0M1119 757h0M1021 764h0M1118 761h0M996 765h0M1032 767h0M1059 767h0M1118 765h0M1166 765h0M901 769h0M956 771h0M1014 772h0M1031 772h0M1059 772h0M1103 770h0M1109 769h0M1148 771h0M924 774h0M959 774h0M1034 775h0M1078 773h0M1081 775h0M1132 774h0M940 779h0M954 779h0M1001 779h0M1015 778h0M1044 780h0M1046 780h0M1130 780h0M970 783h0M1036 782h0M1096 784h0M1101 783h0M960 789h0M967 786h0M975 787h0M1038 786h0M1042 787h0M1096 789h0M1107 787h0M955 792h0M1073 791h0M1084 791h0M944 796h0M1036 794h0M1082 795h0M1093 795h0M1118 796h0M1162 796h0M963 800h0M1006 799h0M1056 800h0M1063 800h0M955 803h0M975 803h0M1023 804h0M1034 804h0M1055 804h0M1002 810h0M1057 807h0M1052 812h0M1101 813h0M988 817h0M1043 816h0M1011 821h0M1030 820h0M1088 819h0M1094 820h0M1119 821h0M1035 825h0M1090 826h0M1112 827h0M1059 828h0M1063 828h0M1089 829h0M1118 832h0M1068 838h0" stroke="#ffa700" stroke-width="5" stroke-linecap="round"/><path d="M989 378h0M980 395h0M1017 395h0M1007 418h0M921 422h0M917 440h0M1084 437h0M775 453h0M908 450h0M774 456h0M796 458h0M937 459h0M972 465h0M811 471h0M898 476h0M1000 477h0M807 480h0M885 482h0M1136 480h0M784 485h0M918 483h0M1009 486h0M1131 483h0M920 488h0M937 488h0M941 488h0M1123 489h0M775 493h0M1010 507h0M899 515h0M1170 514h0M1181 518h0M882 523h0M951 523h0M882 528h0M956 527h0M952 532h0M988 540h0M882 547h0M926 546h0M938 548h0M883 552h0M946 556h0M967 570h0M1145 572h0M896 581h0M888 586h0M922 585h0M964 587h0M877 590h0M1216 595h0M880 597h0M964 597h0M874 601h0M977 612h0M998 612h0M1180 610h0M1008 619h0M994 623h0M1009 623h0M1173 623h0M1046 629h0M799 630h0M992 631h0M1028 641h0M1084 639h0M1217 639h0M997 646h0M1086 644h0M994 648h0M1035 649h0M1038 647h0M1039 652h0M758 660h0M1120 660h0M967 664h0M962 670h0M981 669h0M1090 669h0M988 675h0M1072 673h0M1120 673h0M1140 673h0M900 683h0M1092 683h0M1102 684h0M1216 682h0M767 686h0M1094 685h0M1115 687h0M1098 691h0M879 699h0M905 698h0M1071 700h0M968 704h0M972 704h0M1127 705h0M981 706h0M1107 708h0M941 712h0M909 719h0M1031 719h0M917 725h0M918 728h0M916 734h0M921 733h0M925 732h0M1073 734h0M1122 734h0M1072 738h0M1077 738h0M1208 738h0M880 742h0M930 741h0M1073 741h0M1081 740h0M1060 746h0M1065 745h0M1091 745h0M1098 749h0M1000 758h0M1032 758h0M965 761h0M1015 763h0M925 767h0M1033 766h0M1093 765h0M1039 770h0M990 774h0M1030 780h0M1119 778h0M1053 784h0M1032 787h0M1082 788h0M1022 791h0M1128 791h0M1025 796h0M997 799h0M1000 801h0M997 804h0M1025 816h0M1132 816h0M1031 825h0M1094 825h0M1099 825h0M1030 832h0M1040 837h0M1047 838h0M1080 838h0" stroke="#fff700" stroke-width="5" stroke-linecap="round"/><path d="M977 384h0M960 391h0M983 394h0M1015 393h0M960 395h0M997 397h0M918 401h0M973 400h0M977 400h0M976 408h0M1035 414h0M766 419h0M915 417h0M921 419h0M1010 419h0M1056 417h0M1010 423h0M1068 423h0M803 426h0M926 425h0M1069 424h0M791 432h0M902 430h0M1070 430h0M903 434h0M1008 435h0M922 440h0M1089 440h0M914 444h0M984 442h0M891 449h0M910 447h0M926 449h0M930 451h0M1094 450h0M1009 454h0M934 461h0M1055 461h0M938 462h0M883 469h0M895 469h0M1013 467h0M1130 469h0M791 478h0M883 477h0M887 476h0M979 475h0M988 478h0M1026 475h0M790 482h0M935 481h0M971 480h0M1008 481h0M1098 482h0M867 483h0M968 484h0M1004 485h0M1013 485h0M801 490h0M884 490h0M905 494h0M1023 493h0M1029 492h0M1169 495h0M1186 495h0M780 498h0M791 497h0M903 496h0M1179 497h0M955 502h0M1187 501h0M1000 506h0M1005 507h0M883 510h0M1011 511h0M1023 510h0M1002 513h0M1013 516h0M1178 514h0M880 517h0M1162 517h0M887 522h0M1165 522h0M1179 521h0M1187 523h0M886 528h0M1002 526h0M878 532h0M998 532h0M1000 531h0M1006 530h0M1014 534h0M881 538h0M929 538h0M946 540h0M1010 538h0M885 544h0M879 548h0M930 547h0M958 548h0M887 551h0M905 551h0M935 551h0M942 552h0M950 553h0M879 555h0M949 556h0M973 562h0M943 563h0M878 567h0M891 570h0M893 573h0M896 573h0M927 574h0M955 572h0M1014 573h0M905 577h0M930 577h0M971 578h0M1019 576h0M913 583h0M916 582h0M990 580h0M909 587h0M967 584h0M989 586h0M948 591h0M950 589h0M1160 591h0M908 594h0M964 595h0M977 597h0M988 603h0M1194 603h0M985 614h0M989 619h0M816 624h0M1030 623h0M980 629h0M1015 628h0M1052 627h0M985 633h0M1018 631h0M1078 637h0M1082 634h0M1019 641h0M1021 640h0M1106 639h0M1038 644h0M911 654h0M1036 652h0M1089 653h0M1161 652h0M1077 658h0M1107 657h0M1115 656h0M737 660h0M1095 660h0M1101 661h0M1123 661h0M1242 662h0M1031 666h0M1086 664h0M1103 666h0M1106 666h0M1115 666h0M761 670h0M998 671h0M1072 670h0M1119 671h0M1024 673h0M1076 673h0M1127 673h0M1131 675h0M1039 677h0M1072 678h0M1102 678h0M1135 679h0M1026 682h0M1077 683h0M1114 682h0M1235 683h0M909 686h0M1042 686h0M1186 687h0M893 690h0M1122 690h0M1072 695h0M1115 694h0M1169 695h0M1040 702h0M961 707h0M1003 708h0M1038 709h0M938 711h0M1038 711h0M1043 712h0M1090 711h0M913 715h0M947 715h0M950 716h0M1033 715h0M1046 717h0M905 721h0M942 720h0M920 723h0M926 723h0M931 724h0M1115 725h0M1213 725h0M929 730h0M943 727h0M892 733h0M913 734h0M954 732h0M1008 732h0M1065 733h0M1089 734h0M1067 737h0M1119 737h0M853 740h0M920 740h0M924 741h0M946 742h0M1040 742h0M955 746h0M1032 746h0M1052 746h0M1102 746h0M916 748h0M1028 748h0M1072 748h0M1106 748h0M1116 750h0M1223 748h0M924 754h0M1060 754h0M1119 752h0M897 759h0M924 759h0M963 759h0M1040 759h0M1111 756h0M895 763h0M927 761h0M1017 761h0M1046 762h0M1115 762h0M1147 761h0M1181 761h0M928 767h0M933 765h0M981 766h0M1090 765h0M1005 769h0M1080 769h0M935 773h0M938 774h0M954 775h0M1065 774h0M1098 775h0M1117 774h0M1036 780h0M1099 780h0M1000 782h0M1022 781h0M939 789h0M1019 786h0M1005 790h0M1027 792h0M993 797h0M1013 796h0M1068 796h0M1089 795h0M1152 796h0M993 801h0M1031 801h0M1073 801h0M972 805h0M988 804h0M1072 804h0M1133 805h0M1043 809h0M1051 809h0M979 813h0M1092 813h0M1049 817h0M1050 817h0M1081 818h0M1110 816h0M1119 815h0M1126 817h0M1080 821h0M1023 824h0M1118 826h0M1030 829h0" stroke="#ffcf00" stroke-width="5" stroke-linecap="round"/><path d="M991 383h0M981 388h0M964 396h0M1001 404h0M1061 429h0M1061 435h0M887 438h0M759 451h0M790 452h0M754 464h0M913 464h0M934 472h0M969 472h0M1060 473h0M937 475h0M954 478h0M799 481h0M1021 479h0M826 485h0M921 485h0M972 483h0M889 489h0M933 489h0M1009 490h0M1015 488h0M817 492h0M1009 492h0M863 498h0M1009 497h0M1140 501h0M1157 502h0M977 510h0M1007 510h0M1141 510h0M1006 515h0M1148 514h0M895 521h0M1196 524h0M881 527h0M1162 526h0M954 531h0M970 530h0M1018 532h0M1006 534h0M955 552h0M935 555h0M977 557h0M964 564h0M967 565h0M973 564h0M971 580h0M945 587h0M958 585h0M972 586h0M900 591h0M960 591h0M1190 589h0M986 593h0M986 597h0M987 597h0M1214 599h0M1006 603h0M979 605h0M1000 616h0M992 629h0M1004 633h0M1018 635h0M1039 635h0M1052 634h0M1091 636h0M1076 643h0M1001 649h0M1065 649h0M1023 651h0M1056 652h0M1114 653h0M1118 652h0M1124 657h0M997 662h0M1094 664h0M1078 670h0M1004 675h0M1094 679h0M1097 678h0M1116 678h0M1097 681h0M1050 686h0M1044 700h0M1068 698h0M1059 703h0M911 706h0M931 706h0M1018 708h0M1070 708h0M1124 709h0M1022 711h0M957 716h0M1030 724h0M937 729h0M1123 729h0M876 734h0M885 733h0M930 733h0M933 733h0M941 732h0M959 734h0M862 737h0M916 736h0M924 738h0M1063 737h0M1093 737h0M1116 738h0M979 741h0M1127 740h0M1067 746h0M881 749h0M951 749h0M1119 750h0M883 754h0M903 754h0M1105 752h0M1007 763h0M902 765h0M960 766h0M976 765h0M1045 767h0M1082 765h0M1085 767h0M947 769h0M1038 773h0M1011 784h0M1114 782h0M997 787h0M1091 791h0M1072 797h0M1009 801h0M1123 800h0M1128 800h0M1116 805h0M1120 803h0M1123 809h0M1091 812h0M1099 813h0M1014 817h0M1087 817h0M1090 815h0M996 824h0M1007 825h0M1028 825h0M1128 826h0M1094 829h0" stroke="#ffcf00" stroke-width="6" stroke-linecap="round"/><path d="M977 389h0M975 393h0M988 392h0M993 392h0M1000 393h0M967 397h0M942 400h0M922 409h0M918 414h0M948 412h0M1004 414h0M1022 413h0M780 416h0M1018 419h0M1030 419h0M1046 418h0M914 421h0M994 422h0M896 426h0M903 426h0M930 425h0M973 425h0M1040 425h0M1064 428h0M1057 429h0M888 433h0M896 434h0M926 433h0M1056 435h0M1069 433h0M1085 434h0M769 440h0M899 437h0M910 438h0M1001 439h0M1063 440h0M763 443h0M921 444h0M1009 443h0M1023 441h0M1074 442h0M767 446h0M932 446h0M938 448h0M1000 447h0M1004 448h0M1064 446h0M1102 446h0M813 452h0M912 451h0M1014 452h0M1039 450h0M813 455h0M876 454h0M880 455h0M967 456h0M1030 457h0M1114 456h0M1119 454h0M878 459h0M893 459h0M1031 461h0M1040 458h0M760 463h0M892 463h0M927 463h0M933 464h0M948 463h0M963 463h0M1017 465h0M1101 462h0M775 468h0M941 469h0M951 468h0M959 469h0M1001 468h0M1018 470h0M879 471h0M910 471h0M931 471h0M940 471h0M948 471h0M962 472h0M972 472h0M1053 471h0M921 476h0M930 477h0M944 478h0M966 475h0M976 476h0M874 482h0M931 482h0M965 481h0M983 481h0M1039 482h0M900 485h0M960 484h0M1164 484h0M809 488h0M896 489h0M960 490h0M1006 488h0M1022 488h0M762 494h0M812 493h0M875 494h0M882 492h0M956 494h0M989 492h0M1001 493h0M1131 492h0M1136 493h0M1141 492h0M1153 492h0M880 497h0M891 496h0M917 496h0M951 497h0M980 496h0M984 497h0M767 501h0M914 503h0M934 503h0M795 506h0M874 507h0M957 505h0M984 506h0M1164 505h0M945 510h0M1000 510h0M1165 509h0M1204 510h0M888 514h0M895 514h0M957 515h0M996 513h0M1157 516h0M892 519h0M904 518h0M1008 517h0M1143 517h0M969 524h0M971 525h0M984 528h0M993 527h0M896 531h0M916 531h0M1010 531h0M881 536h0M888 535h0M922 536h0M930 534h0M934 536h0M964 534h0M968 537h0M971 537h0M986 536h0M1219 534h0M866 543h0M898 544h0M938 544h0M947 542h0M960 545h0M973 543h0M1171 544h0M917 548h0M984 548h0M896 551h0M909 551h0M930 552h0M883 555h0M927 557h0M955 556h0M968 556h0M892 560h0M1220 560h0M925 566h0M912 569h0M952 570h0M881 574h0M1165 575h0M913 576h0M985 579h0M969 581h0M975 581h0M912 585h0M957 586h0M1241 585h0M980 590h0M985 591h0M1001 590h0M1022 589h0M997 608h0M1013 608h0M1165 607h0M992 610h0M1015 611h0M1174 609h0M997 614h0M995 619h0M1019 629h0M1022 629h0M1165 627h0M1024 633h0M1179 633h0M1006 643h0M1018 645h0M1004 650h0M1076 650h0M1107 649h0M997 654h0M1000 654h0M1131 654h0M1069 657h0M1020 660h0M1060 661h0M1072 661h0M1089 660h0M1114 661h0M1040 666h0M1073 664h0M1082 664h0M1254 666h0M1082 671h0M1107 670h0M1215 669h0M1086 673h0M1090 675h0M1248 674h0M1018 677h0M1043 678h0M1052 679h0M1107 678h0M1031 684h0M1035 682h0M1040 681h0M1046 681h0M1119 683h0M1069 687h0M1076 686h0M1086 688h0M1118 686h0M1149 685h0M1052 692h0M1086 692h0M1103 691h0M1169 690h0M1081 696h0M1051 699h0M1102 699h0M1053 704h0M1055 704h0M1073 702h0M1111 704h0M901 708h0M1051 707h0M1061 709h0M1076 707h0M908 712h0M955 712h0M1115 712h0M1127 713h0M1237 711h0M963 717h0M1107 715h0M959 721h0M1038 721h0M881 724h0M883 724h0M1135 725h0M1165 723h0M1191 728h0M880 734h0M946 733h0M930 738h0M934 738h0M937 736h0M951 737h0M963 735h0M970 736h0M1033 738h0M952 746h0M1129 746h0M910 750h0M972 748h0M986 749h0M1038 750h0M895 753h0M1038 752h0M1048 755h0M1076 759h0M889 760h0M1043 763h0M1101 762h0M1124 762h0M938 765h0M944 765h0M1011 765h0M1022 766h0M1067 765h0M1073 766h0M973 769h0M1043 772h0M1052 771h0M1094 772h0M1027 774h0M1193 773h0M922 780h0M965 780h0M966 777h0M1057 778h0M1092 778h0M960 784h0M985 783h0M1043 784h0M1106 783h0M1052 789h0M1061 789h0M965 792h0M1039 792h0M1081 790h0M981 797h0M1045 797h0M1078 795h0M1098 794h0M1110 795h0M1080 800h0M1037 803h0M1048 804h0M1051 805h0M1082 805h0M1090 805h0M991 809h0M1073 807h0M1084 808h0M1088 808h0M1099 807h0M1111 807h0M1038 814h0M1057 817h0M1077 816h0M1094 816h0M1044 822h0M1086 820h0M1076 826h0M1116 824h0M1009 828h0M1038 828h0M1055 828h0M1049 834h0M1084 833h0M1094 834h0M1103 832h0M1058 836h0" stroke="#ff7500" stroke-width="5" stroke-linecap="round"/><path d="M986 390h0M1002 387h0M947 400h0M955 400h0M964 401h0M947 406h0M952 406h0M958 405h0M1030 405h0M969 409h0M1013 414h0M1016 414h0M960 418h0M909 423h0M934 422h0M937 423h0M1039 421h0M909 426h0M922 426h0M951 425h0M1018 426h0M1036 427h0M822 432h0M931 431h0M1044 430h0M923 436h0M1015 434h0M933 438h0M993 438h0M998 439h0M1012 439h0M1032 439h0M1059 438h0M1081 439h0M795 444h0M896 442h0M992 444h0M1000 444h0M1026 444h0M1076 442h0M901 447h0M922 449h0M946 446h0M951 447h0M959 447h0M1010 448h0M1030 449h0M1036 446h0M922 451h0M947 450h0M951 451h0M962 450h0M1030 451h0M1053 451h0M904 455h0M909 456h0M916 454h0M929 456h0M1046 454h0M905 459h0M914 461h0M923 461h0M966 460h0M1002 461h0M1014 461h0M1023 460h0M1033 460h0M874 465h0M885 464h0M908 464h0M916 465h0M929 463h0M959 464h0M1024 464h0M1043 463h0M880 467h0M979 467h0M1042 468h0M1135 469h0M912 472h0M924 472h0M972 475h0M1010 475h0M904 479h0M916 479h0M939 479h0M951 480h0M953 481h0M979 483h0M1053 484h0M988 490h0M1032 489h0M913 494h0M945 492h0M1042 492h0M909 496h0M973 496h0M988 496h0M994 499h0M986 501h0M993 502h0M1166 503h0M870 505h0M948 507h0M990 507h0M1170 507h0M933 509h0M956 510h0M964 509h0M1017 509h0M922 515h0M1193 514h0M934 520h0M977 518h0M1005 524h0M1014 522h0M876 528h0M893 527h0M917 527h0M934 528h0M946 527h0M968 525h0M990 527h0M1011 527h0M926 531h0M1169 531h0M892 536h0M916 536h0M960 536h0M995 534h0M887 540h0M891 539h0M939 539h0M954 539h0M1004 538h0M871 544h0M902 545h0M918 543h0M942 544h0M955 543h0M997 545h0M1013 544h0M963 548h0M981 548h0M911 553h0M964 552h0M985 552h0M891 557h0M910 555h0M961 559h0M1225 561h0M912 564h0M935 563h0M939 564h0M905 567h0M907 570h0M927 567h0M984 570h0M980 572h0M979 576h0M994 577h0M952 582h0M984 586h0M1019 589h0M1001 595h0M1141 602h0M987 611h0M1195 616h0M1013 620h0M1023 618h0M1212 622h0M998 626h0M1186 627h0M1026 633h0M1014 644h0M1006 651h0M1073 653h0M1030 657h0M1061 657h0M1207 656h0M1015 662h0M1044 661h0M1052 666h0M1038 668h0M1056 671h0M1061 668h0M1047 673h0M1054 674h0M1060 676h0M1086 678h0M1040 687h0M1032 689h0M1047 690h0M1107 689h0M1135 690h0M1059 695h0M1088 696h0M1093 699h0M1082 703h0M1086 704h0M1095 702h0M1096 705h0M1101 704h0M1238 717h0M1133 721h0M908 725h0M971 729h0M952 734h0M950 741h0M906 746h0M975 746h0M907 755h0M941 752h0M1073 754h0M960 763h0M1072 761h0M912 765h0M1025 769h0M1198 771h0M931 773h0M1043 775h0M1089 778h0M1068 782h0M1090 784h0M1072 786h0M1103 788h0M1044 790h0M1051 790h0M1101 791h0M1040 796h0M1046 795h0M1060 796h0M1064 794h0M1044 800h0M1059 799h0M1042 805h0M1085 804h0M977 807h0M1035 807h0M986 812h0M1107 812h0M1112 812h0M983 816h0M1000 818h0M1033 818h0M1061 821h0M1049 824h0M1018 830h0M1078 828h0" stroke="#ff4000" stroke-width="5" stroke-linecap="round"/><path d="M988 387h0M964 392h0M940 398h0M930 421h0M1059 426h0M870 437h0M1075 440h0M746 442h0M876 444h0M1080 444h0M795 448h0M888 448h0M1096 447h0M762 452h0M900 451h0M1011 452h0M955 456h0M1021 455h0M1044 455h0M1111 457h0M763 458h0M945 459h0M1119 459h0M878 465h0M898 465h0M1000 465h0M1047 463h0M938 467h0M968 468h0M788 471h0M799 473h0M905 471h0M977 473h0M1009 472h0M934 477h0M925 481h0M958 479h0M968 480h0M977 484h0M983 484h0M1047 483h0M899 489h0M903 488h0M997 488h0M910 494h0M981 493h0M925 497h0M938 498h0M954 497h0M1007 498h0M904 501h0M909 503h0M928 501h0M979 502h0M1129 502h0M909 505h0M944 506h0M973 505h0M950 509h0M1174 510h0M874 513h0M952 515h0M1160 513h0M901 519h0M981 524h0M1009 523h0M903 526h0M942 528h0M886 531h0M900 530h0M977 532h0M875 537h0M947 534h0M981 536h0M1009 536h0M907 539h0M1013 538h0M874 543h0M904 544h0M975 548h0M987 562h0M887 565h0M904 564h0M977 565h0M883 570h0M919 569h0M876 573h0M884 574h0M909 574h0M959 572h0M962 572h0M1246 574h0M961 582h0M977 594h0M993 595h0M1194 593h0M979 598h0M1006 612h0M1135 616h0M1035 628h0M1038 633h0M1062 637h0M1179 635h0M1014 640h0M1119 641h0M1127 639h0M1014 653h0M1085 654h0M1034 656h0M1190 657h0M1039 661h0M1109 667h0M1034 674h0M1063 673h0M1092 673h0M1090 678h0M1122 682h0M1072 687h0M1131 687h0M1013 690h0M1055 690h0M1111 690h0M1031 695h0M1063 696h0M1078 696h0M1121 695h0M1013 699h0M1084 699h0M1034 707h0M1088 721h0M900 723h0M904 724h0M1034 725h0M883 730h0M939 739h0M1222 740h0M1009 744h0M901 749h0M1076 751h0M1073 758h0M906 762h0M917 762h0M940 761h0M1076 765h0M921 769h0M1022 774h0M1210 775h0M942 780h0M1040 778h0M1074 777h0M1039 783h0M1065 783h0M1074 781h0M1094 782h0M1067 789h0M1145 787h0M1148 786h0M1048 793h0M1076 793h0M1097 791h0M1112 791h0M1101 794h0M987 800h0M1018 800h0M1010 804h0M1109 805h0M993 813h0M1119 812h0M1040 816h0M1116 820h0M1069 824h0M1124 826h0M1027 828h0M1036 831h0M1026 835h0M1099 832h0M1106 834h0M1071 837h0" stroke="#ff7500" stroke-width="6" stroke-linecap="round"/><path d="M967 391h0M990 397h0M1013 404h0M943 408h0M950 411h0M962 413h0M951 416h0M942 423h0M817 426h0M954 427h0M963 426h0M996 425h0M964 429h0M997 431h0M1000 432h0M966 435h0M1002 434h0M931 440h0M1036 452h0M1035 464h0M912 475h0M1007 481h0M916 505h0M938 506h0M912 514h0M937 513h0M907 519h0M924 519h0M1007 520h0M918 524h0M935 524h0M897 539h0M901 541h0M903 540h0M964 543h0M888 562h0M901 561h0M905 561h0M902 564h0M908 576h0M979 586h0M1018 614h0M1099 650h0M1006 656h0M1027 656h0M1065 670h0M1059 675h0M1063 687h0M964 719h0M981 737h0M973 753h0M924 771h0M1090 786h0M981 791h0M1055 791h0M1031 809h0M1078 808h0M1065 817h0M1022 831h0" stroke="#ed1a00" stroke-width="6" stroke-linecap="round"/><path d="M982 391h0M951 395h0M1044 408h0M786 429h0M765 433h0M805 434h0M784 446h0M1107 450h0M1052 460h0M782 468h0M804 467h0M1023 478h0M876 484h0M1136 485h0M796 489h0M901 497h0M1023 497h0M1131 498h0M884 502h0M887 502h0M897 502h0M980 514h0M1009 515h0M1168 517h0M954 523h0M969 532h0M1013 530h0M981 540h0M1143 540h0M887 576h0M922 583h0M937 580h0M903 585h0M929 586h0M883 590h0M912 589h0M904 598h0M916 603h0M1036 619h0M1001 624h0M979 632h0M1000 635h0M1086 637h0M1000 640h0M1152 641h0M1027 650h0M1031 649h0M768 667h0M1115 669h0M1068 674h0M1069 679h0M1080 678h0M1119 679h0M1050 682h0M1080 684h0M1103 688h0M931 703h0M1031 703h0M914 712h0M929 716h0M1129 725h0M913 737h0M922 736h0M1090 740h0M1105 743h0M881 753h0M905 759h0M1069 757h0M1036 762h0M1090 763h0M996 784h0M1018 791h0M986 809h0M1099 821h0M1102 825h0" stroke="#fff700" stroke-width="6" stroke-linecap="round"/><path d="M948 397h0M965 406h0M924 415h0M955 412h0M947 421h0M955 420h0M946 435h0M951 440h0M1005 439h0M1024 438h0M1038 438h0M1050 438h0M955 442h0M1035 442h0M1025 468h0M954 486h0M929 522h0M933 530h0M899 553h0M929 568h0M1158 578h0M980 727h0M950 763h0M1065 812h0M1076 811h0" stroke="#c10d00" stroke-width="6" stroke-linecap="round"/><path d="M953 396h0M1034 418h0M787 421h0M750 434h0M1090 442h0M894 453h0M891 473h0M762 477h0M890 476h0M1015 481h0M935 484h0M938 486h0M1169 486h0M752 489h0M770 496h0M1190 513h0M952 526h0M981 558h0M981 559h0M878 584h0M939 585h0M943 589h0M968 589h0M958 592h0M872 599h0M897 597h0M950 597h0M966 598h0M981 603h0M948 606h0M897 610h0M962 616h0M931 620h0M979 618h0M838 628h0M990 627h0M1010 629h0M990 630h0M1021 637h0M926 641h0M976 639h0M1082 640h0M974 646h0M988 645h0M992 653h0M914 658h0M989 664h0M961 670h0M1093 668h0M778 674h0M979 675h0M765 678h0M771 679h0M912 681h0M969 683h0M914 691h0M876 694h0M912 698h0M941 702h0M958 702h0M1120 702h0M926 708h0M1027 707h0M1026 721h0M1204 725h0M1110 746h0M1161 810h0M1098 829h0" stroke="#caff00" stroke-width="5" stroke-linecap="round"/><path d="M1022 396h0M997 413h0M1011 412h0M1038 418h0M1018 423h0M918 427h0M1004 427h0M1013 426h0M1021 426h0M798 430h0M897 438h0M887 443h0M891 442h0M958 442h0M1070 444h0M1094 444h0M750 446h0M796 452h0M938 451h0M795 463h0M800 463h0M1009 469h0M1055 468h0M871 473h0M897 473h0M923 474h0M942 472h0M960 473h0M913 486h0M1000 485h0M1120 484h0M1147 483h0M875 491h0M914 487h0M998 494h0M1144 492h0M887 498h0M1038 498h0M1139 497h0M808 502h0M937 502h0M1013 501h0M780 506h0M895 506h0M888 511h0M1144 510h0M1147 511h0M968 518h0M979 518h0M985 519h0M1153 518h0M1203 519h0M868 522h0M904 522h0M963 522h0M1000 524h0M958 528h0M997 526h0M1206 526h0M960 529h0M949 536h0M956 534h0M889 544h0M908 545h0M925 545h0M1178 544h0M888 547h0M932 549h0M967 546h0M892 553h0M888 557h0M916 558h0M931 555h0M938 558h0M1009 556h0M883 560h0M992 562h0M880 565h0M885 564h0M898 565h0M959 566h0M895 570h0M955 567h0M975 567h0M887 572h0M923 572h0M967 574h0M896 576h0M938 577h0M941 578h0M891 581h0M964 580h0M1009 581h0M1002 587h0M992 591h0M1011 589h0M981 594h0M1008 600h0M1206 602h0M993 618h0M1185 619h0M1249 623h0M1013 633h0M1015 636h0M997 648h0M1023 650h0M1063 654h0M1076 653h0M1082 651h0M1122 654h0M1240 654h0M1072 659h0M1082 657h0M758 665h0M1086 670h0M1109 669h0M1082 675h0M1225 674h0M1044 681h0M1056 681h0M1089 683h0M1081 686h0M1061 692h0M1072 689h0M1095 692h0M1099 696h0M1034 698h0M954 704h0M977 702h0M1063 702h0M903 708h0M1064 706h0M1105 712h0M889 716h0M921 716h0M1173 717h0M948 724h0M1039 725h0M913 728h0M950 728h0M973 733h0M1026 731h0M876 738h0M959 737h0M972 740h0M1056 741h0M912 750h0M1093 750h0M1102 749h0M901 752h0M964 755h0M1019 754h0M1064 754h0M990 757h0M994 756h0M1059 757h0M946 762h0M1030 761h0M1051 763h0M968 768h0M936 770h0M938 770h0M979 770h0M1051 774h0M1059 773h0M959 778h0M971 780h0M997 779h0M1081 777h0M954 787h0M1006 787h0M1034 786h0M1031 792h0M1068 791h0M1084 795h0M1139 795h0M984 798h0M1012 801h0M1067 801h0M1076 800h0M968 805h0M1031 802h0M1069 804h0M1121 803h0M1010 807h0M1056 811h0M1102 817h0M994 820h0M1111 821h0M1039 824h0M1086 825h0M1061 834h0M1055 838h0" stroke="#ffa700" stroke-width="6" stroke-linecap="round"/><path d="M966 405h0M950 413h0M932 416h0M941 417h0M938 426h0M950 430h0M919 434h0M955 436h0M1035 435h0M1044 435h0M925 438h0M956 439h0M972 437h0M1042 442h0M1039 447h0M1042 447h0M917 452h0M941 450h0M1043 451h0M1035 456h0M1032 463h0M946 496h0M975 496h0M910 513h0M935 514h0M960 514h0M902 534h0M993 548h0M897 556h0M983 566h0M1126 645h0M1051 669h0M1061 683h0M1078 699h0M1206 708h0M1056 710h0M908 763h0M955 766h0M1064 807h0M1106 807h0M1068 815h0M1051 824h0" stroke="#c10d00" stroke-width="5" stroke-linecap="round"/><path d="M921 415h0M937 413h0M967 413h0M972 413h0M975 413h0M964 418h0M993 418h0M959 423h0M962 422h0M942 430h0M1030 429h0M1039 430h0M914 433h0M930 435h0M944 434h0M998 435h0M763 440h0M1025 439h0M938 442h0M947 443h0M975 444h0M998 444h0M942 446h0M955 446h0M963 447h0M1047 446h0M960 451h0M1021 452h0M1026 451h0M1049 450h0M958 454h0M964 455h0M998 455h0M1013 455h0M1080 456h0M992 460h0M1017 460h0M1116 459h0M871 462h0M921 465h0M1028 464h0M946 468h0M954 469h0M1039 478h0M1045 480h0M1164 482h0M903 486h0M952 486h0M990 486h0M997 486h0M910 489h0M952 487h0M983 489h0M1161 489h0M919 494h0M973 494h0M921 511h0M961 510h0M992 520h0M988 524h0M927 528h0M1014 528h0M939 530h0M941 531h0M947 531h0M985 531h0M987 530h0M940 536h0M964 539h0M921 545h0M900 555h0M904 558h0M960 556h0M935 559h0M1018 560h0M988 564h0M905 572h0M997 590h0M1018 603h0M1019 621h0M996 623h0M1031 633h0M1035 630h0M1008 641h0M1070 647h0M1073 648h0M1069 654h0M1107 652h0M1009 655h0M1065 658h0M1064 662h0M1055 666h0M1067 668h0M1106 674h0M1166 673h0M1066 683h0M1043 695h0M1055 694h0M1093 696h0M1082 706h0M904 711h0M1076 714h0M972 719h0M909 729h0M1236 730h0M985 738h0M933 746h0M1202 744h0M937 748h0M915 754h0M950 759h0M959 759h0M1198 760h0M1009 775h0M1068 776h0M926 780h0M1192 782h0M1087 799h0M1068 809h0M1093 808h0M1084 812h0M1031 815h0M1071 817h0M1073 824h0M1042 829h0M1051 829h0M1052 835h0M1078 832h0M1089 833h0M1085 839h0" stroke="#ed1a00" stroke-width="5" stroke-linecap="round"/><path d="M952 420h0M959 430h0M967 430h0M971 434h0M943 437h0M1035 438h0M1044 438h0M930 441h0M933 441h0M951 444h0M1017 442h0M912 479h0M939 527h0M909 559h0M1069 812h0" stroke="#960000" stroke-width="5" stroke-linecap="round"/><path d="M1044 421h0M1052 423h0M755 425h0M960 427h0M1029 426h0M892 432h0M914 430h0M965 434h0M790 440h0M963 438h0M1010 439h0M1048 438h0M1068 440h0M964 441h0M1029 442h0M1038 443h0M990 448h0M995 447h0M891 456h0M807 458h0M916 461h0M925 461h0M964 458h0M900 463h0M1009 464h0M1038 463h0M931 468h0M1021 467h0M1034 469h0M1040 471h0M879 478h0M1006 477h0M909 480h0M943 481h0M1160 484h0M920 493h0M1017 493h0M935 498h0M996 498h0M1137 498h0M874 503h0M917 503h0M927 514h0M968 515h0M970 518h0M990 519h0M921 522h0M937 524h0M921 527h0M1018 526h0M910 531h0M963 532h0M979 529h0M994 532h0M908 536h0M925 535h0M934 540h0M958 541h0M967 539h0M951 543h0M1211 543h0M903 548h0M1015 547h0M917 551h0M968 553h0M1022 554h0M914 555h0M920 555h0M895 559h0M931 560h0M950 560h0M984 561h0M901 568h0M938 570h0M980 581h0M996 587h0M1036 610h0M1023 623h0M1011 646h0M1019 648h0M1094 648h0M1029 654h0M1009 661h0M1034 661h0M1081 662h0M1039 675h0M1064 677h0M1040 689h0M1080 692h0M1049 696h0M1084 696h0M1106 695h0M1109 694h0M1199 704h0M1034 720h0M897 728h0M1040 727h0M968 731h0M1033 734h0M1041 731h0M887 753h0M917 753h0M945 753h0M955 756h0M1036 757h0M1078 763h0M1051 765h0M910 775h0M1046 773h0M1072 774h0M1084 775h0M935 783h0M1082 784h0M1109 783h0M935 786h0M1047 788h0M1093 786h0M1063 791h0M1039 799h0M1096 799h0M1076 804h0M1092 803h0M979 809h0M1040 807h0M1061 808h0M1031 813h0M1036 812h0M1059 818h0M1065 832h0M1065 837h0" stroke="#ff4000" stroke-width="6" stroke-linecap="round"/><path d="M981 426h0M952 433h0M1097 700h0" stroke="#960000" stroke-width="6" stroke-linecap="round"/><path d="M883 436h0M933 451h0M746 454h0M767 468h0M889 469h0M787 484h0M1181 503h0M997 504h0M896 509h0M882 587h0M941 601h0M971 607h0M983 605h0M980 610h0M993 639h0M1030 641h0M1022 664h0M753 670h0M993 671h0M964 673h0M951 720h0M905 737h0M1031 783h0M1056 783h0M1012 826h0" stroke="#caff00" stroke-width="6" stroke-linecap="round"/><path d="M771 451h0M876 523h0M901 578h0M933 587h0M917 590h0M884 597h0M925 602h0M980 614h0M984 620h0M939 622h0M952 622h0M821 627h0M955 627h0M975 626h0M804 631h0M938 633h0M976 631h0M933 635h0M960 635h0M977 634h0M982 639h0M946 650h0M917 654h0M979 657h0M904 660h0M992 662h0M979 666h0M968 669h0M985 669h0M748 674h0M909 673h0M924 675h0M932 674h0M1126 677h0M897 686h0M933 691h0M962 690h0M800 702h0M904 702h0M811 710h0M816 719h0M872 732h0M1087 738h0" stroke="#87ff00" stroke-width="5" stroke-linecap="round"/><path d="M884 505h0M887 591h0M904 656h0M794 661h0M972 690h0M937 693h0M954 699h0" stroke="#87ff00" stroke-width="6" stroke-linecap="round"/><path d="M892 595h0M885 603h0M933 602h0M977 604h0M913 606h0M967 612h0M970 612h0M895 615h0M924 615h0M862 620h0M934 620h0M826 625h0M929 622h0M971 628h0M854 635h0M798 642h0M847 641h0M885 639h0M981 644h0M876 648h0M896 650h0M986 648h0M990 649h0M791 652h0M889 653h0M904 652h0M931 652h0M989 652h0M933 657h0M900 661h0M970 663h0M984 660h0M898 666h0M904 665h0M773 678h0M837 677h0M952 678h0M775 681h0M779 683h0M781 682h0M975 684h0M980 681h0M986 686h0M811 690h0M870 692h0M920 690h0M968 690h0M872 694h0M950 700h0M842 707h0" stroke="#50ff15" stroke-width="5" stroke-linecap="round"/><path d="M889 598h0M893 624h0M897 622h0M904 623h0M817 642h0M935 644h0M955 648h0M797 654h0M879 652h0M893 653h0M960 656h0M853 661h0M881 660h0M884 660h0M888 668h0M954 669h0M794 696h0M805 695h0M809 696h0M805 698h0M829 702h0" stroke="#00ff80" stroke-width="6" stroke-linecap="round"/><path d="M922 599h0M955 599h0M897 601h0M947 603h0M951 603h0M884 606h0M893 607h0M929 608h0M891 616h0M850 629h0M854 629h0M899 627h0M912 629h0M838 633h0M853 633h0M971 630h0M893 636h0M888 641h0M985 639h0M889 643h0M901 647h0M958 648h0M837 659h0M891 663h0M930 660h0M935 662h0M828 667h0M799 669h0M891 673h0M937 674h0M913 677h0M917 687h0M976 692h0M832 705h0" stroke="#27ff4a" stroke-width="5" stroke-linecap="round"/><path d="M892 603h0M955 604h0M920 615h0M946 616h0M808 632h0M829 633h0M889 630h0M830 635h0M837 636h0M942 635h0M832 641h0M938 639h0M797 644h0M834 644h0M829 649h0M849 650h0M901 651h0M966 652h0M850 656h0M969 658h0M873 667h0M931 669h0M791 674h0M815 677h0M787 681h0M791 682h0M796 681h0M862 681h0M874 681h0M786 686h0M829 688h0M858 686h0M927 685h0M830 690h0M930 691h0M792 695h0M841 696h0M855 695h0" stroke="#00ff80" stroke-width="5" stroke-linecap="round"/><path d="M903 601h0M950 606h0M899 612h0M929 611h0M896 618h0M858 625h0M812 628h0M832 628h0M935 641h0M954 641h0M925 643h0M929 643h0M939 643h0M796 648h0M962 648h0M893 659h0M896 660h0M792 664h0M845 665h0M881 665h0M958 664h0M902 668h0M824 684h0M891 682h0M833 699h0M830 717h0M834 724h0" stroke="#27ff4a" stroke-width="6" stroke-linecap="round"/><path d="M960 602h0M877 607h0M893 611h0M930 613h0M975 615h0M984 622h0M825 628h0M792 636h0M981 637h0M988 640h0M787 653h0M746 675h0M783 678h0M820 681h0M990 683h0M935 694h0" stroke="#50ff15" stroke-width="6" stroke-linecap="round"/><path d="M874 614h0M902 618h0M830 628h0M891 633h0M875 635h0M889 635h0M862 639h0M871 639h0M930 648h0M874 652h0M970 657h0M797 664h0M801 664h0M811 665h0M867 671h0M788 679h0M815 687h0M862 686h0M825 692h0M838 692h0M788 694h0M836 698h0" stroke="#00f2b4" stroke-width="6" stroke-linecap="round"/><path d="M888 619h0M874 623h0M868 632h0M840 640h0M849 639h0M946 639h0M829 643h0M801 650h0M837 649h0M847 648h0M879 647h0M927 649h0M867 652h0M825 656h0M830 657h0M886 656h0M925 657h0M798 673h0M872 677h0M871 684h0M801 685h0M813 687h0M833 686h0M934 686h0M822 692h0M846 692h0M867 692h0M828 695h0M825 709h0M837 708h0" stroke="#00f2b4" stroke-width="5" stroke-linecap="round"/><path d="M872 629h0M816 653h0M796 679h0M879 679h0M836 683h0M880 681h0M790 687h0M843 688h0" stroke="#00c8ff" stroke-width="5" stroke-linecap="round"/><path d="M823 641h0M818 645h0M900 644h0M817 660h0M877 665h0M821 668h0M845 674h0M866 677h0M800 681h0M808 681h0" stroke="#00e5e9" stroke-width="6" stroke-linecap="round"/><path d="M822 650h0M854 648h0M896 654h0M845 656h0M864 658h0M867 660h0M876 663h0M815 666h0M938 665h0M824 669h0M868 675h0M876 675h0M808 698h0M817 699h0M816 703h0" stroke="#00e5e9" stroke-width="5" stroke-linecap="round"/><path d="M864 661h0M803 682h0" stroke="#00c8ff" stroke-width="6" stroke-linecap="round"/><path d="M863 674h0" stroke="#009fff" stroke-width="6" stroke-linecap="round"/><path d="M1019 503h0M1019 542h0M1020 555h0M1018 593h0M1018 597h0" stroke="#ffed00" stroke-width="7" stroke-linecap="round"/><path d="M1019 508h0M1019 513h0M1021 515h0M1020 531h0M1022 548h0M1023 553h0M1019 601h0" stroke="#ffcf00" stroke-width="7" stroke-linecap="round"/><path d="M1021 521h0M1021 522h0M1021 534h0M1021 592h0" stroke="#ff6800" stroke-width="7" stroke-linecap="round"/><path d="M1021 525h0M1022 558h0M1022 568h0M1021 570h0M1019 581h0M1018 607h0M1017 611h0" stroke="#ff9000" stroke-width="7" stroke-linecap="round"/><path d="M1021 538h0M1023 563h0M1020 573h0M1022 580h0" stroke="#ffb100" stroke-width="7" stroke-linecap="round"/><path d="M1020 545h0" stroke="#ff4000" stroke-width="7" stroke-linecap="round"/><path d="M1018 585h0M1018 603h0" stroke="#f81e00" stroke-width="7" stroke-linecap="round"/><path d="M985 550h0M1027 544h0M1040 542h0" stroke="#ffed00" stroke-width="6" stroke-linecap="round"/><path d="M989 550h0M997 547h0M1012 545h0M1048 543h0" stroke="#ffb100" stroke-width="6" stroke-linecap="round"/><path d="M994 548h0" stroke="#b9ff00" stroke-width="7" stroke-linecap="round"/><path d="M1004 546h0M1020 544h0M1056 543h0M1061 541h0" stroke="#ffb100" stroke-width="7" stroke-linecap="round"/><path d="M1008 547h0M1036 542h0" stroke="#ff9000" stroke-width="6" stroke-linecap="round"/><path d="M1017 546h0" stroke="#ebff00" stroke-width="6" stroke-linecap="round"/><path d="M1025 545h0" stroke="#ffcf00" stroke-width="7" stroke-linecap="round"/><path d="M1032 543h0" stroke="#ffed00" stroke-width="7" stroke-linecap="round"/><path d="M1044 543h0" stroke="#ffcf00" stroke-width="6" stroke-linecap="round"/><path d="M1053 541h0" stroke="#ebff00" stroke-width="7" stroke-linecap="round"/><path d="M990 617h0M1014 615h0M1041 610h0M1088 584h0M1094 581h0M1117 543h0" stroke="#ff4000" stroke-width="7" stroke-linecap="round"/><path d="M995 616h0M998 616h0M1026 616h0M1030 614h0M1044 608h0" stroke="#ffb100" stroke-width="7" stroke-linecap="round"/><path d="M1002 617h0M1078 591h0" stroke="#ffcf00" stroke-width="8" stroke-linecap="round"/><path d="M1006 616h0M1037 611h0M1073 592h0M1112 558h0M1119 535h0" stroke="#ff9000" stroke-width="7" stroke-linecap="round"/><path d="M1010 615h0" stroke="#b60a00" stroke-width="8" stroke-linecap="round"/><path d="M1019 615h0M1103 573h0" stroke="#f81e00" stroke-width="7" stroke-linecap="round"/><path d="M1021 616h0M1116 555h0M1118 530h0" stroke="#ffb100" stroke-width="8" stroke-linecap="round"/><path d="M1034 614h0M1108 569h0" stroke="#ff6800" stroke-width="7" stroke-linecap="round"/><path d="M1047 607h0M1050 605h0M1069 595h0M1091 581h0M1116 549h0M1118 537h0" stroke="#ff9000" stroke-width="8" stroke-linecap="round"/><path d="M1052 602h0M1104 570h0" stroke="#ff6800" stroke-width="8" stroke-linecap="round"/><path d="M1056 601h0M1081 589h0" stroke="#ff4000" stroke-width="8" stroke-linecap="round"/><path d="M1060 599h0" stroke="#ffed00" stroke-width="7" stroke-linecap="round"/><path d="M1063 598h0M1066 598h0M1086 585h0" stroke="#ffcf00" stroke-width="7" stroke-linecap="round"/><path d="M1097 578h0" stroke="#ffed00" stroke-width="8" stroke-linecap="round"/><path d="M1099 574h0" stroke="#ebff00" stroke-width="7" stroke-linecap="round"/><path d="M1109 565h0" stroke="#d71400" stroke-width="7" stroke-linecap="round"/><path d="M1112 562h0" stroke="#f81e00" stroke-width="8" stroke-linecap="round"/><path d="M1118 545h0" stroke="#d71400" stroke-width="8" stroke-linecap="round"/><path d="M1068 590h0M1077 597h0M1082 602h0" stroke="#b60a00" stroke-width="8" stroke-linecap="round"/><path d="M1070 592h0M1079 599h0M1093 606h0" stroke="#960000" stroke-width="8" stroke-linecap="round"/><path d="M1073 595h0M1076 596h0M1086 604h0M1089 604h0" stroke="#d71400" stroke-width="8" stroke-linecap="round"/><path d="M1193 610h0M1192 615h0M1211 633h0M1215 642h0M1237 667h0M1245 676h0" stroke="#ffcf00" stroke-width="7" stroke-linecap="round"/><path d="M1194 616h0" stroke="#87ff00" stroke-width="7" stroke-linecap="round"/><path d="M1201 620h0" stroke="#b9ff00" stroke-width="7" stroke-linecap="round"/><path d="M1200 624h0M1230 665h0M1238 676h0M1256 692h0M1265 706h0M1267 710h0" stroke="#ff9000" stroke-width="7" stroke-linecap="round"/><path d="M1201 626h0M1212 638h0M1218 641h0M1224 654h0M1227 656h0M1233 666h0M1249 687h0M1255 697h0" stroke="#ffb100" stroke-width="7" stroke-linecap="round"/><path d="M1206 628h0M1222 649h0M1230 661h0M1260 696h0M1261 701h0" stroke="#ff4000" stroke-width="7" stroke-linecap="round"/><path d="M1209 631h0M1219 646h0M1247 682h0M1272 713h0" stroke="#ff6800" stroke-width="7" stroke-linecap="round"/><path d="M1228 659h0M1238 674h0M1251 686h0M1264 704h0" stroke="#ffed00" stroke-width="7" stroke-linecap="round"/><path d="M1245 678h0" stroke="#ebff00" stroke-width="7" stroke-linecap="round"/><path d="M1170 713h0M1219 657h0M1218 654h0M1239 627h0" stroke="#ff9000" stroke-width="7" stroke-linecap="round"/><path d="M1172 709h0M1197 686h0M1207 669h0M1237 632h0M1244 617h0M1245 611h0" stroke="#ffb100" stroke-width="7" stroke-linecap="round"/><path d="M1174 707h0M1186 693h0M1202 679h0M1238 624h0M1242 622h0M1247 608h0" stroke="#ebff00" stroke-width="7" stroke-linecap="round"/><path d="M1178 704h0M1183 697h0M1231 639h0" stroke="#87ff00" stroke-width="7" stroke-linecap="round"/><path d="M1179 701h0M1217 658h0" stroke="#b9ff00" stroke-width="7" stroke-linecap="round"/><path d="M1183 695h0" stroke="#3cff2f" stroke-width="7" stroke-linecap="round"/><path d="M1190 691h0M1200 677h0M1212 662h0M1226 649h0M1232 636h0M1243 616h0M1253 601h0" stroke="#ffed00" stroke-width="7" stroke-linecap="round"/><path d="M1194 688h0M1203 674h0M1207 672h0M1209 668h0M1223 654h0M1226 645h0M1235 635h0" stroke="#ffcf00" stroke-width="7" stroke-linecap="round"/><path d="M1195 682h0" stroke="#ff4000" stroke-width="7" stroke-linecap="round"/><path d="M1225 646h0M1255 604h0" stroke="#5aff07" stroke-width="7" stroke-linecap="round"/><path d="M1254 604h0" stroke="#ff6800" stroke-width="7" stroke-linecap="round"/><path d="M1137 824h0M1149 816h0" stroke="#ff9000" stroke-width="6" stroke-linecap="round"/><path d="M1140 822h0M1156 812h0M1170 803h0" stroke="#ffed00" stroke-width="6" stroke-linecap="round"/><path d="M1143 820h0M1152 815h0M1161 807h0" stroke="#ffb100" stroke-width="6" stroke-linecap="round"/><path d="M1158 810h0M1172 800h0" stroke="#ff6800" stroke-width="6" stroke-linecap="round"/><path d="M1166 805h0" stroke="#f81e00" stroke-width="6" stroke-linecap="round"/><path d="M1106 467h0M1101 474h0M1110 473h0M1115 489h0M1111 495h0M1123 502h0M1119 506h0M1121 506h0M1125 509h0" stroke="#c10d00" stroke-width="6" stroke-linecap="round"/><path d="M1102 469h0M1115 481h0M1123 515h0M1126 514h0" stroke="#960000" stroke-width="6" stroke-linecap="round"/><path d="M1110 471h0M1106 473h0M1110 486h0M1114 486h0M1117 485h0M1111 491h0M1119 494h0M1118 499h0M1122 519h0" stroke="#ed1a00" stroke-width="6" stroke-linecap="round"/><path d="M1106 479h0M1109 477h0M1118 490h0M1113 495h0M1127 506h0M1123 510h0" stroke="#ff4000" stroke-width="6" stroke-linecap="round"/><path d="M1115 499h0M1119 511h0" stroke="#ff7500" stroke-width="6" stroke-linecap="round"/><path d="M677 498h0M705 473h0M716 464h0M720 462h0M734 447h0M763 420h0" stroke="#00e1f7" stroke-width="5" stroke-linecap="round"/><path d="M679 497h0M684 493h0M692 483h0M759 424h0" stroke="#00aaff" stroke-width="5" stroke-linecap="round"/><path d="M688 491h0M696 480h0M700 478h0M702 474h0M714 467h0M726 454h0M728 453h0M736 443h0M741 442h0M747 435h0M751 432h0M754 429h0M766 417h0" stroke="#00c8ff" stroke-width="5" stroke-linecap="round"/><path d="M691 487h0M710 469h0M756 426h0" stroke="#00ff80" stroke-width="5" stroke-linecap="round"/><path d="M722 458h0M744 437h0M773 411h0" stroke="#00f5a7" stroke-width="5" stroke-linecap="round"/><path d="M732 450h0M770 413h0" stroke="#00ebcf" stroke-width="5" stroke-linecap="round"/><path d="M719 512h0" stroke="#5aff07" stroke-width="7" stroke-linecap="round"/><path d="M724 516h0M734 525h0M748 537h0" stroke="#ff9000" stroke-width="7" stroke-linecap="round"/><path d="M725 517h0M741 530h0M743 533h0" stroke="#ff6800" stroke-width="7" stroke-linecap="round"/><path d="M729 521h0" stroke="#ffcf00" stroke-width="7" stroke-linecap="round"/><path d="M731 523h0" stroke="#ff4000" stroke-width="7" stroke-linecap="round"/><path d="M738 528h0" stroke="#ebff00" stroke-width="7" stroke-linecap="round"/><path d="M746 536h0" stroke="#f81e00" stroke-width="7" stroke-linecap="round"/><path d="M822 575h0M831 581h0M842 584h0M849 587h0" stroke="#ff6800" stroke-width="7" stroke-linecap="round"/><path d="M824 576h0M829 577h0M840 582h0M846 585h0" stroke="#ffb100" stroke-width="7" stroke-linecap="round"/><path d="M836 581h0M851 586h0" stroke="#ff4000" stroke-width="7" stroke-linecap="round"/><path d="M856 587h0M870 592h0" stroke="#ff9000" stroke-width="7" stroke-linecap="round"/><path d="M860 589h0M862 590h0M865 591h0" stroke="#ffcf00" stroke-width="7" stroke-linecap="round"/><polygon points="1140.0,505.0 1192.5,500.0 1222.5,535.0 1217.5,550.0 1247.5,572.5 1217.5,592.5 1230.0,610.0 1162.5,605.0 1157.5,545.0 1140.0,525.0" fill="#f81e00"/><path d="M1155 505h0M1161 504h0M1165 505h0M1173 504h0M1186 503h0M1191 505h0M1195 503h0M1143 507h0M1148 507h0M1150 507h0M1158 507h0M1162 506h0M1164 506h0M1179 507h0M1187 507h0M1191 507h0M1193 507h0M1147 512h0M1159 511h0M1145 515h0M1147 515h0M1152 515h0M1173 515h0M1180 515h0M1187 515h0M1191 514h0M1197 515h0M1201 514h0M1144 518h0M1159 518h0M1161 518h0M1168 518h0M1179 519h0M1202 517h0M1208 519h0M1144 522h0M1158 522h0M1193 521h0M1208 523h0M1144 526h0M1148 526h0M1161 525h0M1176 524h0M1184 525h0M1193 525h0M1208 526h0M1212 524h0M1144 528h0M1151 528h0M1166 530h0M1177 528h0M1186 528h0M1193 528h0M1199 529h0M1202 528h0M1207 529h0M1147 532h0M1158 532h0M1165 533h0M1176 533h0M1184 532h0M1191 533h0M1198 533h0M1201 531h0M1208 532h0M1212 533h0M1150 535h0M1170 537h0M1175 536h0M1180 536h0M1187 536h0M1169 539h0M1182 539h0M1187 539h0M1190 540h0M1211 539h0M1216 539h0M1212 564h0M1205 569h0M1219 591h0" stroke="#ff4000" stroke-width="5" stroke-linecap="round"/><path d="M1169 503h0M1140 506h0M1164 514h0M1147 519h0M1154 524h0M1148 528h0M1162 529h0M1219 534h0M1166 536h0M1180 541h0M1177 544h0M1179 544h0M1186 542h0M1202 543h0M1218 543h0M1191 547h0M1194 546h0M1195 551h0M1212 550h0M1216 550h0M1176 553h0M1179 553h0M1188 553h0M1190 553h0M1198 554h0M1217 554h0M1168 559h0M1173 559h0M1178 557h0M1182 558h0M1193 557h0M1202 558h0M1207 557h0M1212 557h0M1218 558h0M1222 558h0M1170 560h0M1172 560h0M1180 562h0M1182 561h0M1189 561h0M1194 562h0M1197 561h0M1201 561h0M1204 560h0M1209 562h0M1212 560h0M1219 560h0M1164 564h0M1216 564h0M1220 566h0M1207 568h0M1212 568h0M1216 568h0M1220 569h0M1238 570h0M1176 572h0M1180 573h0M1191 572h0M1200 572h0M1206 573h0M1176 575h0M1180 577h0M1182 575h0M1190 576h0M1201 575h0M1209 577h0M1238 575h0M1242 575h0M1243 575h0M1171 579h0M1180 579h0M1182 580h0M1189 580h0M1193 580h0M1197 580h0M1230 580h0M1166 583h0M1175 582h0M1184 584h0M1187 584h0M1191 582h0M1194 583h0M1198 583h0M1201 584h0M1213 582h0M1227 583h0M1169 587h0M1177 586h0M1179 586h0M1187 588h0M1191 587h0M1211 586h0M1162 591h0M1180 591h0M1189 589h0M1212 590h0M1175 593h0M1184 594h0M1195 593h0M1197 594h0M1166 598h0M1195 598h0M1211 596h0M1165 601h0M1168 602h0M1188 600h0M1190 600h0M1193 601h0M1197 600h0M1204 601h0M1212 601h0M1215 600h0M1179 604h0M1183 605h0M1209 604h0M1213 605h0M1215 606h0M1219 604h0M1223 605h0M1204 607h0M1216 608h0M1226 609h0" stroke="#c10d00" stroke-width="5" stroke-linecap="round"/><path d="M1176 503h0M1179 503h0M1184 504h0M1175 508h0M1166 512h0M1168 512h0M1179 511h0M1186 511h0M1193 511h0M1199 510h0M1200 511h0M1141 514h0M1169 515h0M1177 515h0M1182 515h0M1150 517h0M1166 518h0M1177 518h0M1184 517h0M1186 518h0M1205 518h0M1164 521h0M1168 521h0M1176 522h0M1181 521h0M1184 523h0M1198 521h0M1204 521h0M1159 524h0M1164 524h0M1169 525h0M1173 526h0M1179 525h0M1198 525h0M1205 525h0M1206 528h0M1180 533h0M1194 532h0M1215 531h0M1198 535h0M1219 537h0M1176 539h0" stroke="#ff7500" stroke-width="5" stroke-linecap="round"/><path d="M1153 508h0M1170 507h0M1173 508h0M1184 506h0M1198 506h0M1144 512h0M1150 511h0M1155 512h0M1162 512h0M1191 511h0M1154 514h0M1158 514h0M1162 516h0M1193 515h0M1154 519h0M1190 517h0M1197 517h0M1140 521h0M1148 522h0M1150 521h0M1155 522h0M1187 521h0M1201 521h0M1150 525h0M1186 525h0M1191 525h0M1201 526h0M1155 528h0M1159 528h0M1170 529h0M1171 528h0M1179 530h0M1182 528h0M1190 528h0M1213 528h0M1215 530h0M1151 534h0M1154 531h0M1161 532h0M1169 532h0M1172 533h0M1186 533h0M1205 534h0M1158 535h0M1161 537h0M1172 536h0M1182 536h0M1190 535h0M1193 536h0M1200 536h0M1205 536h0M1210 536h0M1211 537h0M1216 537h0M1158 540h0M1161 539h0M1172 538h0M1194 541h0M1201 538h0M1208 540h0M1219 541h0M1183 543h0M1197 542h0M1186 547h0M1216 560h0M1202 566h0M1204 565h0M1208 565h0M1197 573h0M1187 575h0M1199 575h0M1201 579h0M1162 586h0M1194 586h0M1197 587h0M1205 586h0M1208 587h0M1165 590h0M1216 591h0M1209 594h0M1212 594h0M1215 598h0M1201 601h0M1218 600h0M1164 605h0M1187 603h0M1191 603h0M1194 605h0M1206 604h0M1220 608h0M1222 609h0" stroke="#ed1a00" stroke-width="5" stroke-linecap="round"/><path d="M1173 511h0M1177 510h0M1184 510h0M1173 519h0M1194 518h0M1162 522h0M1172 522h0M1191 522h0" stroke="#ffa700" stroke-width="5" stroke-linecap="round"/><path d="M1153 535h0M1153 540h0M1166 540h0M1198 540h0M1204 540h0M1158 544h0M1163 542h0M1165 542h0M1169 543h0M1172 543h0M1190 543h0M1194 543h0M1204 543h0M1207 544h0M1213 544h0M1215 543h0M1162 548h0M1164 546h0M1168 547h0M1173 546h0M1176 548h0M1179 546h0M1184 547h0M1198 547h0M1200 546h0M1205 546h0M1207 547h0M1213 547h0M1215 546h0M1162 550h0M1166 551h0M1168 550h0M1172 551h0M1175 549h0M1180 550h0M1183 550h0M1188 551h0M1191 550h0M1197 551h0M1201 551h0M1205 550h0M1208 550h0M1163 554h0M1165 553h0M1170 554h0M1172 553h0M1183 554h0M1194 553h0M1202 553h0M1204 553h0M1209 555h0M1213 553h0M1220 554h0M1224 555h0M1163 557h0M1165 557h0M1177 559h0M1187 558h0M1192 558h0M1197 558h0M1205 557h0M1216 558h0M1227 558h0M1163 561h0M1164 561h0M1175 562h0M1187 561h0M1223 562h0M1227 561h0M1230 562h0M1162 564h0M1168 566h0M1173 565h0M1175 564h0M1178 566h0M1183 564h0M1187 564h0M1192 564h0M1194 565h0M1199 564h0M1222 564h0M1226 565h0M1230 565h0M1233 566h0M1236 564h0M1161 568h0M1164 567h0M1168 569h0M1173 568h0M1176 568h0M1179 569h0M1183 568h0M1187 569h0M1189 568h0M1195 569h0M1197 568h0M1200 570h0M1222 569h0M1226 568h0M1230 568h0M1233 568h0M1240 569h0M1243 570h0M1163 573h0M1165 571h0M1170 573h0M1172 571h0M1182 572h0M1187 572h0M1195 572h0M1209 573h0M1211 571h0M1215 573h0M1218 571h0M1223 573h0M1227 572h0M1230 571h0M1235 572h0M1237 572h0M1240 571h0M1245 571h0M1161 574h0M1164 576h0M1170 577h0M1173 576h0M1193 576h0M1205 576h0M1211 575h0M1215 575h0M1219 576h0M1223 576h0M1227 575h0M1230 575h0M1233 576h0M1163 579h0M1164 579h0M1169 580h0M1176 578h0M1187 578h0M1205 578h0M1208 580h0M1212 579h0M1217 579h0M1219 578h0M1223 579h0M1226 580h0M1233 578h0M1236 579h0M1170 583h0M1172 584h0M1178 584h0M1206 583h0M1209 583h0M1216 583h0M1218 583h0M1222 582h0M1230 582h0M1165 587h0M1172 588h0M1184 586h0M1202 586h0M1216 585h0M1220 586h0M1223 587h0M1170 590h0M1172 591h0M1177 590h0M1184 591h0M1187 591h0M1195 590h0M1198 589h0M1201 591h0M1204 591h0M1209 590h0M1165 593h0M1169 594h0M1173 593h0M1179 593h0M1186 594h0M1191 593h0M1202 595h0M1205 594h0M1215 593h0M1169 598h0M1172 598h0M1175 597h0M1179 598h0M1183 598h0M1188 597h0M1190 597h0M1198 597h0M1202 597h0M1205 597h0M1208 597h0M1220 597h0M1173 601h0M1177 600h0M1179 600h0M1182 600h0M1209 602h0M1168 605h0M1173 604h0M1176 603h0M1198 605h0M1200 605h0" stroke="#960000" stroke-width="5" stroke-linecap="round"/><polygon points="912.5,412.5 947.5,360.0 985.0,375.0 965.0,392.0" fill="#f81e00"/><path d="M948 363h0M953 377h0M956 379h0M966 377h0M970 378h0M977 377h0M955 382h0M940 385h0M945 386h0M931 389h0M941 389h0M960 389h0M960 393h0M926 400h0M929 400h0M919 406h0M916 410h0" stroke="#c10d00" stroke-width="5" stroke-linecap="round"/><path d="M953 364h0M949 367h0M951 367h0M942 371h0M945 372h0M949 372h0M952 371h0M962 371h0M944 376h0M948 374h0M951 374h0M964 375h0M967 375h0M969 374h0M935 379h0M944 377h0M963 378h0M974 379h0M933 382h0M942 382h0M949 382h0M953 381h0M960 381h0M963 383h0M967 382h0M971 381h0M978 381h0M934 385h0M938 386h0M949 385h0M960 386h0M964 385h0M970 386h0M934 388h0M939 388h0M945 388h0M948 388h0M964 388h0M927 392h0M931 391h0M935 393h0M938 392h0M940 392h0M945 392h0M949 393h0M963 392h0M931 395h0M934 397h0M941 395h0M944 395h0M923 400h0M941 399h0M944 398h0M920 403h0M924 403h0M927 404h0M931 404h0M923 406h0" stroke="#ed1a00" stroke-width="5" stroke-linecap="round"/><path d="M945 367h0M959 379h0M966 385h0M949 396h0" stroke="#960000" stroke-width="5" stroke-linecap="round"/><path d="M956 367h0M955 372h0M959 370h0M967 372h0M970 372h0M941 375h0M956 374h0M959 374h0M974 374h0M977 375h0M981 376h0M937 377h0M942 378h0M948 378h0M937 381h0M945 382h0M975 382h0M951 386h0M956 385h0M952 388h0M955 389h0M966 390h0M952 393h0M955 393h0M966 391h0M924 397h0M937 396h0M934 404h0" stroke="#ff4000" stroke-width="5" stroke-linecap="round"/><path d="M959 367h0M962 367h0M973 372h0M927 397h0M935 399h0M937 400h0" stroke="#ff7500" stroke-width="5" stroke-linecap="round"/><polygon points="881.0,362.0 922.5,380.0 907.5,410.0 881.0,400.0" fill="#3cff2f"/><polygon points="932.0,347.0 942.0,350.0 940.0,365.0 930.0,362.0" fill="#00e1f7"/><path d="M905 386h0M909 396h0M918 385h0M909 379h0M908 408h0M901 386h0M907 407h0M891 372h0M891 393h0M883 385h0M920 383h0M895 370h0M892 385h0M890 397h0M886 394h0M906 392h0M884 367h0M896 393h0M906 380h0M894 369h0M891 393h0M904 373h0M910 404h0M903 400h0M916 387h0M881 369h0M901 376h0M891 403h0M917 387h0M905 409h0M881 387h0M885 391h0M902 372h0M899 392h0M884 393h0M908 396h0" stroke="#00ff80" stroke-width="5" stroke-linecap="round" fill="none"/><path d="M887 384h0M891 397h0M892 395h0M902 384h0M892 393h0M884 374h0M912 397h0M901 382h0M889 375h0M905 393h0M913 389h0M896 400h0M894 403h0M911 377h0M903 384h0M887 365h0" stroke="#5aff07" stroke-width="5" stroke-linecap="round" fill="none"/><path d="M911 399h0M895 401h0M908 374h0M901 394h0M905 378h0M903 388h0M889 398h0M884 386h0M904 381h0M906 395h0M908 395h0M885 369h0M882 375h0M898 370h0M914 380h0M889 383h0M894 399h0M885 388h0M888 395h0M915 378h0M891 393h0M905 388h0M887 391h0" stroke="#00e1f7" stroke-width="5" stroke-linecap="round" fill="none"/><polyline points="1132.0,462.0 1132.0,700.0" fill="none" stroke="#00aaff" stroke-width="3" stroke-linejoin="round" stroke-linecap="round"/><polyline points="912.5,415.0 985.0,377.0" fill="none" stroke="#071bf8" stroke-width="2" stroke-linejoin="round" stroke-linecap="round"/><polygon points="460,215 593.75,217.5 606,295 585,423.75 468.75,368" fill="none" stroke="#fbf200" stroke-width="1.9"/><rect x="466" y="365.5" width="5" height="5" fill="#fbf200"/></g></g></svg></div>
<div class="t" style="left:9px;top:873px;font-size:11.5px;">[15:18:06.052] Point clouds loaded : 1 , Total unique points : 105039879</div>
<div class="abs" style="left:84px;top:889px;width:1485px;height:2px;background:#c6c6c6"></div>
<!-- dialog -->
<div class="abs" style="left:617px;top:198px;width:264px;height:205px;background:#f0f0f0;box-shadow:0 0 0 1px rgba(90,90,90,0.35);">
 <div class="abs" style="left:0;top:0;width:264px;height:30px;background:#fff"></div>
</div>
<svg class="abs" style="left:622px;top:200px" width="22" height="24" viewBox="622 200 22 24">
 <path d="M626 207.3 L632.8 204 L628.3 214 L626 215.6 Z" fill="#1d8fc0"/>
 <path d="M632.8 204 L632.8 211.6 L628.6 212.8 Z" fill="#a8d03c"/>
 <path d="M628.6 212.8 L639.6 208 L639.6 215.6 L626 215.6 Z" fill="#2aa0c4"/>
 <path d="M634.5 211 L637 210 L637 215.6 L634.5 215.6 Z" fill="#4ab8cc"/>
 <path d="M630.9 215.6 L632.8 219.6 L638.8 215.6 L636.6 215.6 L632.9 217.9 L632.2 215.6 Z" fill="#a8d03c"/>
</svg>
<div class="t" style="left:647px;top:207px;font-size:11px;color:#9a9a9a;">Create Issue</div>
<div class="t" style="left:810px;top:206px;font-size:12px;color:#8a8a8a;">?</div>
<svg class="abs" style="left:852px;top:206px" width="12" height="12"><path d="M1 1l10 10M11 1l-10 10" stroke="#666" stroke-width="0.9"/></svg>
<div class="t" style="left:628px;top:246px;font-size:11px;">Type:</div>
<div class="t" style="left:628px;top:274px;font-size:11px;">Severity:</div>
<div class="t" style="left:628px;top:302px;font-size:10.6px;">Comment:</div>
<div class="combo" style="left:683px;top:239px;width:187px;height:22px;"></div>
<div class="t" style="left:687px;top:246px;font-size:11px;">Cloud</div>
<svg class="abs" style="left:854px;top:248px" width="9" height="5"><path d="M0.5 0.5h8l-4 4z" fill="#555"/></svg>
<div class="combo" style="left:683px;top:267px;width:187px;height:22px;"></div>
<div class="t" style="left:687px;top:274px;font-size:11px;">Critical</div>
<svg class="abs" style="left:854px;top:276px" width="9" height="5"><path d="M0.5 0.5h8l-4 4z" fill="#555"/></svg>
<div class="abs" style="left:683px;top:295px;width:187px;height:70px;box-sizing:border-box;border:1px solid #ababab;background:#fff"></div>
<div class="btn" style="left:704px;top:371px;width:80px;height:21px;"></div>
<div class="t" style="left:704px;top:377px;width:80px;text-align:center;font-size:11px;">OK</div>
<div class="btn" style="left:790px;top:371px;width:80px;height:21px;"></div>
<div class="t" style="left:790px;top:377px;width:80px;text-align:center;font-size:11px;">Cancel</div>
</body></html>
